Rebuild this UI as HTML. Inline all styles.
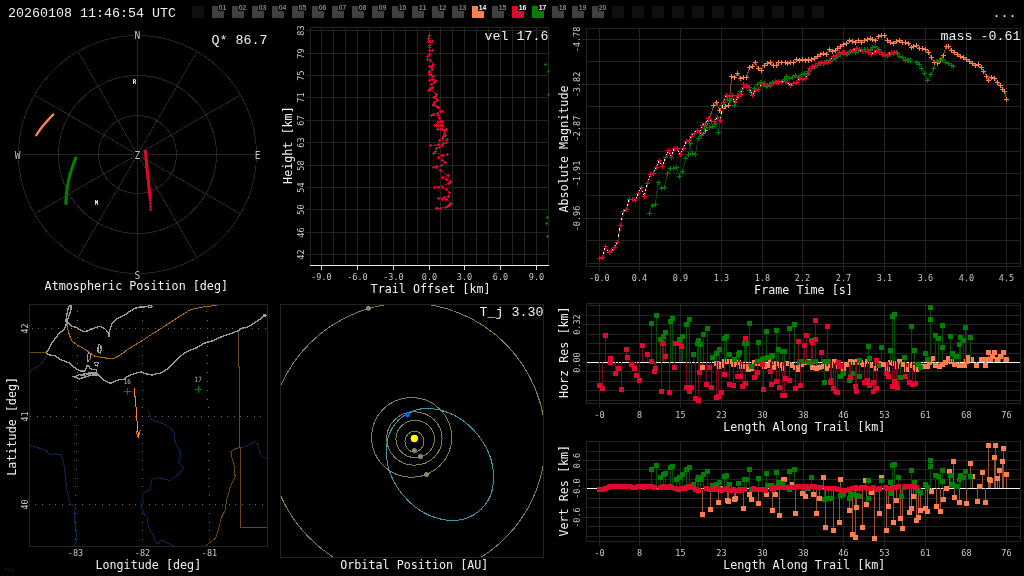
<!DOCTYPE html>
<html><head><meta charset="utf-8"><title>Meteor event 20260108 11:46:54 UTC</title>
<style>
html,body{margin:0;padding:0;background:#000;overflow:hidden}
svg{display:block;will-change:transform}
text{white-space:pre}
</style></head><body>
<svg width="1024" height="576" viewBox="0 0 1024 576">
<rect x="0" y="0" width="1024" height="576" fill="#000"/>
<g id="topbar">
<text x="8.00" y="16.60" font-family="'Liberation Mono', monospace" font-size="13.33" fill="#f0f0f0" text-anchor="start" >20260108 11:46:54 UTC</text>
<rect x="192" y="6" width="12" height="12" fill="#101010"/>
<rect x="212" y="6" width="12" height="12" fill="#404040"/>
<rect x="218" y="3" width="9" height="8" fill="#000"/>
<text x="218.80" y="10.05" font-family="'Liberation Sans', sans-serif" font-size="7.3" fill="#858585" text-anchor="start" font-weight="bold" textLength="7.6" lengthAdjust="spacingAndGlyphs">01</text>
<rect x="232" y="6" width="12" height="12" fill="#404040"/>
<rect x="238" y="3" width="9" height="8" fill="#000"/>
<text x="238.80" y="10.05" font-family="'Liberation Sans', sans-serif" font-size="7.3" fill="#858585" text-anchor="start" font-weight="bold" textLength="7.6" lengthAdjust="spacingAndGlyphs">02</text>
<rect x="252" y="6" width="12" height="12" fill="#404040"/>
<rect x="258" y="3" width="9" height="8" fill="#000"/>
<text x="258.80" y="10.05" font-family="'Liberation Sans', sans-serif" font-size="7.3" fill="#858585" text-anchor="start" font-weight="bold" textLength="7.6" lengthAdjust="spacingAndGlyphs">03</text>
<rect x="272" y="6" width="12" height="12" fill="#404040"/>
<rect x="278" y="3" width="9" height="8" fill="#000"/>
<text x="278.80" y="10.05" font-family="'Liberation Sans', sans-serif" font-size="7.3" fill="#858585" text-anchor="start" font-weight="bold" textLength="7.6" lengthAdjust="spacingAndGlyphs">04</text>
<rect x="292" y="6" width="12" height="12" fill="#404040"/>
<rect x="298" y="3" width="9" height="8" fill="#000"/>
<text x="298.80" y="10.05" font-family="'Liberation Sans', sans-serif" font-size="7.3" fill="#858585" text-anchor="start" font-weight="bold" textLength="7.6" lengthAdjust="spacingAndGlyphs">05</text>
<rect x="312" y="6" width="12" height="12" fill="#404040"/>
<rect x="318" y="3" width="9" height="8" fill="#000"/>
<text x="318.80" y="10.05" font-family="'Liberation Sans', sans-serif" font-size="7.3" fill="#858585" text-anchor="start" font-weight="bold" textLength="7.6" lengthAdjust="spacingAndGlyphs">06</text>
<rect x="332" y="6" width="12" height="12" fill="#404040"/>
<rect x="338" y="3" width="9" height="8" fill="#000"/>
<text x="338.80" y="10.05" font-family="'Liberation Sans', sans-serif" font-size="7.3" fill="#858585" text-anchor="start" font-weight="bold" textLength="7.6" lengthAdjust="spacingAndGlyphs">07</text>
<rect x="352" y="6" width="12" height="12" fill="#404040"/>
<rect x="358" y="3" width="9" height="8" fill="#000"/>
<text x="358.80" y="10.05" font-family="'Liberation Sans', sans-serif" font-size="7.3" fill="#858585" text-anchor="start" font-weight="bold" textLength="7.6" lengthAdjust="spacingAndGlyphs">08</text>
<rect x="372" y="6" width="12" height="12" fill="#404040"/>
<rect x="378" y="3" width="9" height="8" fill="#000"/>
<text x="378.80" y="10.05" font-family="'Liberation Sans', sans-serif" font-size="7.3" fill="#858585" text-anchor="start" font-weight="bold" textLength="7.6" lengthAdjust="spacingAndGlyphs">09</text>
<rect x="392" y="6" width="12" height="12" fill="#404040"/>
<rect x="398" y="3" width="9" height="8" fill="#000"/>
<text x="398.80" y="10.05" font-family="'Liberation Sans', sans-serif" font-size="7.3" fill="#858585" text-anchor="start" font-weight="bold" textLength="7.6" lengthAdjust="spacingAndGlyphs">10</text>
<rect x="412" y="6" width="12" height="12" fill="#404040"/>
<rect x="418" y="3" width="9" height="8" fill="#000"/>
<text x="418.80" y="10.05" font-family="'Liberation Sans', sans-serif" font-size="7.3" fill="#858585" text-anchor="start" font-weight="bold" textLength="7.6" lengthAdjust="spacingAndGlyphs">11</text>
<rect x="432" y="6" width="12" height="12" fill="#404040"/>
<rect x="438" y="3" width="9" height="8" fill="#000"/>
<text x="438.80" y="10.05" font-family="'Liberation Sans', sans-serif" font-size="7.3" fill="#858585" text-anchor="start" font-weight="bold" textLength="7.6" lengthAdjust="spacingAndGlyphs">12</text>
<rect x="452" y="6" width="12" height="12" fill="#404040"/>
<rect x="458" y="3" width="9" height="8" fill="#000"/>
<text x="458.80" y="10.05" font-family="'Liberation Sans', sans-serif" font-size="7.3" fill="#858585" text-anchor="start" font-weight="bold" textLength="7.6" lengthAdjust="spacingAndGlyphs">13</text>
<rect x="472" y="6" width="12" height="12" fill="#ff7f50"/>
<rect x="478" y="3" width="9" height="8" fill="#000"/>
<text x="478.80" y="10.05" font-family="'Liberation Sans', sans-serif" font-size="7.3" fill="#fff" text-anchor="start" font-weight="bold" textLength="7.6" lengthAdjust="spacingAndGlyphs">14</text>
<rect x="492" y="6" width="12" height="12" fill="#404040"/>
<rect x="498" y="3" width="9" height="8" fill="#000"/>
<text x="498.80" y="10.05" font-family="'Liberation Sans', sans-serif" font-size="7.3" fill="#858585" text-anchor="start" font-weight="bold" textLength="7.6" lengthAdjust="spacingAndGlyphs">15</text>
<rect x="512" y="6" width="12" height="12" fill="#e0082c"/>
<rect x="518" y="3" width="9" height="8" fill="#000"/>
<text x="518.80" y="10.05" font-family="'Liberation Sans', sans-serif" font-size="7.3" fill="#fff" text-anchor="start" font-weight="bold" textLength="7.6" lengthAdjust="spacingAndGlyphs">16</text>
<rect x="532" y="6" width="12" height="12" fill="#008000"/>
<rect x="538" y="3" width="9" height="8" fill="#000"/>
<text x="538.80" y="10.05" font-family="'Liberation Sans', sans-serif" font-size="7.3" fill="#fff" text-anchor="start" font-weight="bold" textLength="7.6" lengthAdjust="spacingAndGlyphs">17</text>
<rect x="552" y="6" width="12" height="12" fill="#404040"/>
<rect x="558" y="3" width="9" height="8" fill="#000"/>
<text x="558.80" y="10.05" font-family="'Liberation Sans', sans-serif" font-size="7.3" fill="#858585" text-anchor="start" font-weight="bold" textLength="7.6" lengthAdjust="spacingAndGlyphs">18</text>
<rect x="572" y="6" width="12" height="12" fill="#404040"/>
<rect x="578" y="3" width="9" height="8" fill="#000"/>
<text x="578.80" y="10.05" font-family="'Liberation Sans', sans-serif" font-size="7.3" fill="#858585" text-anchor="start" font-weight="bold" textLength="7.6" lengthAdjust="spacingAndGlyphs">19</text>
<rect x="592" y="6" width="12" height="12" fill="#404040"/>
<rect x="598" y="3" width="9" height="8" fill="#000"/>
<text x="598.80" y="10.05" font-family="'Liberation Sans', sans-serif" font-size="7.3" fill="#858585" text-anchor="start" font-weight="bold" textLength="7.6" lengthAdjust="spacingAndGlyphs">20</text>
<rect x="612" y="6" width="12" height="12" fill="#101010"/>
<rect x="632" y="6" width="12" height="12" fill="#101010"/>
<rect x="652" y="6" width="12" height="12" fill="#101010"/>
<rect x="672" y="6" width="12" height="12" fill="#101010"/>
<rect x="692" y="6" width="12" height="12" fill="#101010"/>
<rect x="712" y="6" width="12" height="12" fill="#101010"/>
<rect x="732" y="6" width="12" height="12" fill="#101010"/>
<rect x="752" y="6" width="12" height="12" fill="#101010"/>
<rect x="772" y="6" width="12" height="12" fill="#101010"/>
<rect x="792" y="6" width="12" height="12" fill="#101010"/>
<rect x="812" y="6" width="12" height="12" fill="#101010"/>
<text x="1016.50" y="16.60" font-family="'Liberation Mono', monospace" font-size="13.33" fill="#f0f0f0" text-anchor="end" >...</text>
</g>
<g id="polar">
<circle cx="137.5" cy="154.5" r="39" fill="none" stroke="#252525" stroke-width="1.0" shape-rendering="crispEdges"/>
<circle cx="137.5" cy="154.5" r="79" fill="none" stroke="#252525" stroke-width="1.0" shape-rendering="crispEdges"/>
<circle cx="137.5" cy="154.5" r="119" fill="none" stroke="#252525" stroke-width="1.0" shape-rendering="crispEdges"/>
<line x1="18.50" y1="154.50" x2="256.50" y2="154.50" stroke="#252525" stroke-width="1.0" shape-rendering="crispEdges"/>
<line x1="34.44" y1="95.00" x2="240.56" y2="214.00" stroke="#252525" stroke-width="1.0" shape-rendering="crispEdges"/>
<line x1="78.00" y1="51.44" x2="197.00" y2="257.56" stroke="#252525" stroke-width="1.0" shape-rendering="crispEdges"/>
<line x1="137.50" y1="35.50" x2="137.50" y2="273.50" stroke="#252525" stroke-width="1.0" shape-rendering="crispEdges"/>
<line x1="197.00" y1="51.44" x2="78.00" y2="257.56" stroke="#252525" stroke-width="1.0" shape-rendering="crispEdges"/>
<line x1="240.56" y1="95.00" x2="34.44" y2="214.00" stroke="#252525" stroke-width="1.0" shape-rendering="crispEdges"/>
<rect x="134.3" y="31.4" width="6.4" height="8" fill="#000"/>
<text x="137.50" y="38.90" font-family="'DejaVu Sans Mono', 'Liberation Mono', monospace" font-size="9.6" fill="#c4c4c4" text-anchor="middle" >N</text>
<rect x="254.5" y="151.5" width="6.4" height="8" fill="#000"/>
<text x="257.70" y="159.00" font-family="'DejaVu Sans Mono', 'Liberation Mono', monospace" font-size="9.6" fill="#c4c4c4" text-anchor="middle" >E</text>
<rect x="134.3" y="271.3" width="6.4" height="8" fill="#000"/>
<text x="137.50" y="278.80" font-family="'DejaVu Sans Mono', 'Liberation Mono', monospace" font-size="9.6" fill="#c4c4c4" text-anchor="middle" >S</text>
<rect x="14.5" y="151.5" width="6.4" height="8" fill="#000"/>
<text x="17.70" y="159.00" font-family="'DejaVu Sans Mono', 'Liberation Mono', monospace" font-size="9.6" fill="#c4c4c4" text-anchor="middle" >W</text>
<rect x="134.3" y="151.5" width="6.4" height="8" fill="#000"/>
<text x="137.50" y="159.00" font-family="'DejaVu Sans Mono', 'Liberation Mono', monospace" font-size="9.6" fill="#c4c4c4" text-anchor="middle" >Z</text>
<text x="267.50" y="44.20" font-family="'Liberation Mono', monospace" font-size="13.33" fill="#f0f0f0" text-anchor="end" >Q* 86.7</text>
<text x="136.30" y="289.80" font-family="'DejaVu Sans Mono', 'Liberation Mono', monospace" font-size="11.73" fill="#f0f0f0" text-anchor="middle" >Atmospheric Position [deg]</text>
<text x="134.50" y="84.20" font-family="'DejaVu Sans Mono', 'Liberation Mono', monospace" font-size="6.6" fill="#fff" text-anchor="middle" font-weight="bold" stroke="#000" stroke-width="1.6" paint-order="stroke" textLength="3.5" lengthAdjust="spacingAndGlyphs">R</text>
<text x="96.40" y="205.20" font-family="'DejaVu Sans Mono', 'Liberation Mono', monospace" font-size="6.6" fill="#fff" text-anchor="middle" font-weight="bold" stroke="#000" stroke-width="1.6" paint-order="stroke" textLength="3.5" lengthAdjust="spacingAndGlyphs">M</text>
<polyline points="53.2,114.6 51.1,116.7 49.2,118.8 47.3,120.9 45.6,122.8 43.9,124.8 42.4,126.6 40.9,128.4 39.6,130.2 38.4,131.9 37.3,133.6 36.3,135.2" fill="none" stroke="#ff7f50" stroke-width="2.4" stroke-linecap="round"/>
<circle cx="75.8" cy="157.8" r="1.55" fill="#008000"/>
<circle cx="75.3" cy="159.0" r="1.55" fill="#008000"/>
<circle cx="74.8" cy="160.2" r="1.55" fill="#008000"/>
<circle cx="74.4" cy="161.4" r="1.55" fill="#008000"/>
<circle cx="73.9" cy="162.6" r="1.55" fill="#008000"/>
<circle cx="73.4" cy="163.8" r="1.55" fill="#008000"/>
<circle cx="73.0" cy="165.1" r="1.55" fill="#008000"/>
<circle cx="72.6" cy="166.3" r="1.55" fill="#008000"/>
<circle cx="72.2" cy="167.5" r="1.55" fill="#008000"/>
<circle cx="71.8" cy="168.6" r="1.55" fill="#008000"/>
<circle cx="71.4" cy="169.8" r="1.55" fill="#008000"/>
<circle cx="71.1" cy="171.0" r="1.55" fill="#008000"/>
<circle cx="70.7" cy="172.2" r="1.55" fill="#008000"/>
<circle cx="70.4" cy="173.4" r="1.55" fill="#008000"/>
<circle cx="70.0" cy="174.6" r="1.55" fill="#008000"/>
<circle cx="69.7" cy="175.8" r="1.55" fill="#008000"/>
<circle cx="69.4" cy="177.0" r="1.55" fill="#008000"/>
<circle cx="69.1" cy="178.1" r="1.55" fill="#008000"/>
<circle cx="68.8" cy="179.3" r="1.55" fill="#008000"/>
<circle cx="68.6" cy="180.5" r="1.55" fill="#008000"/>
<circle cx="68.3" cy="181.7" r="1.55" fill="#008000"/>
<circle cx="68.1" cy="182.8" r="1.55" fill="#008000"/>
<circle cx="67.9" cy="184.0" r="1.55" fill="#008000"/>
<circle cx="67.6" cy="185.2" r="1.55" fill="#008000"/>
<circle cx="67.4" cy="186.3" r="1.55" fill="#008000"/>
<circle cx="67.3" cy="187.5" r="1.55" fill="#008000"/>
<circle cx="67.1" cy="188.6" r="1.55" fill="#008000"/>
<circle cx="66.9" cy="189.8" r="1.55" fill="#008000"/>
<circle cx="66.8" cy="191.0" r="1.55" fill="#008000"/>
<circle cx="66.6" cy="192.1" r="1.55" fill="#008000"/>
<circle cx="66.5" cy="193.3" r="1.55" fill="#008000"/>
<circle cx="66.4" cy="194.4" r="1.55" fill="#008000"/>
<circle cx="66.3" cy="195.5" r="1.55" fill="#008000"/>
<circle cx="66.2" cy="196.7" r="1.55" fill="#008000"/>
<circle cx="66.2" cy="197.8" r="1.55" fill="#008000"/>
<circle cx="66.1" cy="199.0" r="1.55" fill="#008000"/>
<circle cx="66.1" cy="200.1" r="1.55" fill="#008000"/>
<circle cx="66.0" cy="201.2" r="1.55" fill="#008000"/>
<circle cx="66.0" cy="202.4" r="1.55" fill="#008000"/>
<circle cx="66.0" cy="203.5" r="1.55" fill="#008000"/>
<circle cx="145.3" cy="151.0" r="1.55" fill="#e0082c"/>
<circle cx="145.4" cy="152.2" r="1.55" fill="#e0082c"/>
<circle cx="145.5" cy="153.4" r="1.55" fill="#e0082c"/>
<circle cx="145.7" cy="154.6" r="1.55" fill="#e0082c"/>
<circle cx="145.8" cy="155.8" r="1.55" fill="#e0082c"/>
<circle cx="145.9" cy="157.1" r="1.55" fill="#e0082c"/>
<circle cx="146.0" cy="158.3" r="1.55" fill="#e0082c"/>
<circle cx="146.1" cy="159.4" r="1.55" fill="#e0082c"/>
<circle cx="146.3" cy="160.6" r="1.55" fill="#e0082c"/>
<circle cx="146.4" cy="161.8" r="1.55" fill="#e0082c"/>
<circle cx="146.5" cy="163.0" r="1.55" fill="#e0082c"/>
<circle cx="146.6" cy="164.2" r="1.55" fill="#e0082c"/>
<circle cx="146.7" cy="165.4" r="1.55" fill="#e0082c"/>
<circle cx="146.9" cy="166.6" r="1.55" fill="#e0082c"/>
<circle cx="147.0" cy="167.7" r="1.55" fill="#e0082c"/>
<circle cx="147.1" cy="168.9" r="1.55" fill="#e0082c"/>
<circle cx="147.2" cy="170.1" r="1.55" fill="#e0082c"/>
<circle cx="147.3" cy="171.2" r="1.55" fill="#e0082c"/>
<circle cx="147.5" cy="172.4" r="1.55" fill="#e0082c"/>
<circle cx="147.6" cy="173.5" r="1.55" fill="#e0082c"/>
<circle cx="147.7" cy="174.7" r="1.55" fill="#e0082c"/>
<circle cx="147.8" cy="175.8" r="1.55" fill="#e0082c"/>
<circle cx="147.9" cy="177.0" r="1.55" fill="#e0082c"/>
<circle cx="148.0" cy="178.1" r="1.55" fill="#e0082c"/>
<circle cx="148.2" cy="179.2" r="1.55" fill="#e0082c"/>
<circle cx="148.3" cy="180.4" r="1.55" fill="#e0082c"/>
<circle cx="148.4" cy="181.5" r="1.55" fill="#e0082c"/>
<circle cx="148.5" cy="182.6" r="1.55" fill="#e0082c"/>
<circle cx="148.6" cy="183.7" r="1.55" fill="#e0082c"/>
<circle cx="148.7" cy="184.9" r="1.55" fill="#e0082c"/>
<circle cx="148.9" cy="186.0" r="1.55" fill="#e0082c"/>
<circle cx="149.0" cy="187.1" r="1.55" fill="#e0082c"/>
<circle cx="149.1" cy="188.2" r="1.55" fill="#e0082c"/>
<circle cx="149.2" cy="189.3" r="1.55" fill="#e0082c"/>
<circle cx="149.3" cy="190.4" r="1.55" fill="#e0082c"/>
<circle cx="149.4" cy="191.5" r="1.55" fill="#e0082c"/>
<circle cx="149.5" cy="192.6" r="1.55" fill="#e0082c"/>
<circle cx="149.6" cy="193.7" r="1.55" fill="#e0082c"/>
<circle cx="149.8" cy="194.8" r="1.55" fill="#e0082c"/>
<circle cx="149.9" cy="195.8" r="1.55" fill="#e0082c"/>
<circle cx="150.0" cy="196.9" r="1.55" fill="#e0082c"/>
<circle cx="150.1" cy="198.0" r="1.55" fill="#e0082c"/>
<circle cx="150.2" cy="200.5" r="1.4" fill="#e0082c"/>
<circle cx="150.4" cy="203.6" r="1.4" fill="#e0082c"/>
<circle cx="150.5" cy="206.6" r="1.4" fill="#e0082c"/>
<circle cx="150.6" cy="209.6" r="1.4" fill="#e0082c"/>
</g>
<g id="trail">
<rect x="321" y="27" width="1" height="238" fill="#242424"/>
<rect x="333" y="27" width="1" height="238" fill="#242424"/>
<rect x="345" y="27" width="1" height="238" fill="#242424"/>
<rect x="357" y="27" width="1" height="238" fill="#242424"/>
<rect x="369" y="27" width="1" height="238" fill="#242424"/>
<rect x="381" y="27" width="1" height="238" fill="#242424"/>
<rect x="393" y="27" width="1" height="238" fill="#242424"/>
<rect x="405" y="27" width="1" height="238" fill="#242424"/>
<rect x="417" y="27" width="1" height="238" fill="#242424"/>
<rect x="429" y="27" width="1" height="238" fill="#242424"/>
<rect x="440" y="27" width="1" height="238" fill="#242424"/>
<rect x="452" y="27" width="1" height="238" fill="#242424"/>
<rect x="464" y="27" width="1" height="238" fill="#242424"/>
<rect x="476" y="27" width="1" height="238" fill="#242424"/>
<rect x="488" y="27" width="1" height="238" fill="#242424"/>
<rect x="500" y="27" width="1" height="238" fill="#242424"/>
<rect x="512" y="27" width="1" height="238" fill="#242424"/>
<rect x="524" y="27" width="1" height="238" fill="#242424"/>
<rect x="536" y="27" width="1" height="238" fill="#242424"/>
<rect x="306" y="30" width="242" height="1" fill="#242424"/>
<rect x="306" y="53" width="242" height="1" fill="#242424"/>
<rect x="306" y="75" width="242" height="1" fill="#242424"/>
<rect x="306" y="97" width="242" height="1" fill="#242424"/>
<rect x="306" y="120" width="242" height="1" fill="#242424"/>
<rect x="306" y="142" width="242" height="1" fill="#242424"/>
<rect x="306" y="165" width="242" height="1" fill="#242424"/>
<rect x="306" y="187" width="242" height="1" fill="#242424"/>
<rect x="306" y="209" width="242" height="1" fill="#242424"/>
<rect x="306" y="232" width="242" height="1" fill="#242424"/>
<rect x="306" y="254" width="242" height="1" fill="#242424"/>
<rect x="310" y="27" width="1" height="238" fill="#242424"/>
<rect x="548" y="27" width="1" height="239" fill="#242424"/>
<rect x="310" y="27" width="239" height="1" fill="#242424"/>
<rect x="310" y="265" width="239" height="1" fill="#ececec"/>
<rect x="321" y="266" width="1" height="4" fill="#d8d8d8"/>
<text x="321.50" y="279.80" font-family="'DejaVu Sans Mono', 'Liberation Mono', monospace" font-size="8.53" fill="#c8c8c8" text-anchor="middle" >-9.0</text>
<rect x="357" y="266" width="1" height="4" fill="#d8d8d8"/>
<text x="357.50" y="279.80" font-family="'DejaVu Sans Mono', 'Liberation Mono', monospace" font-size="8.53" fill="#c8c8c8" text-anchor="middle" >-6.0</text>
<rect x="393" y="266" width="1" height="4" fill="#d8d8d8"/>
<text x="393.50" y="279.80" font-family="'DejaVu Sans Mono', 'Liberation Mono', monospace" font-size="8.53" fill="#c8c8c8" text-anchor="middle" >-3.0</text>
<rect x="429" y="266" width="1" height="4" fill="#d8d8d8"/>
<text x="429.50" y="279.80" font-family="'DejaVu Sans Mono', 'Liberation Mono', monospace" font-size="8.53" fill="#c8c8c8" text-anchor="middle" >0.0</text>
<rect x="464" y="266" width="1" height="4" fill="#d8d8d8"/>
<text x="464.50" y="279.80" font-family="'DejaVu Sans Mono', 'Liberation Mono', monospace" font-size="8.53" fill="#c8c8c8" text-anchor="middle" >3.0</text>
<rect x="500" y="266" width="1" height="4" fill="#d8d8d8"/>
<text x="500.50" y="279.80" font-family="'DejaVu Sans Mono', 'Liberation Mono', monospace" font-size="8.53" fill="#c8c8c8" text-anchor="middle" >6.0</text>
<rect x="536" y="266" width="1" height="4" fill="#d8d8d8"/>
<text x="536.50" y="279.80" font-family="'DejaVu Sans Mono', 'Liberation Mono', monospace" font-size="8.53" fill="#c8c8c8" text-anchor="middle" >9.0</text>
<text x="304.20" y="30.50" font-family="'DejaVu Sans Mono', 'Liberation Mono', monospace" font-size="8.53" fill="#c8c8c8" text-anchor="middle" transform="rotate(-90 304.20 30.50)" >83</text>
<text x="304.20" y="53.50" font-family="'DejaVu Sans Mono', 'Liberation Mono', monospace" font-size="8.53" fill="#c8c8c8" text-anchor="middle" transform="rotate(-90 304.20 53.50)" >79</text>
<text x="304.20" y="75.50" font-family="'DejaVu Sans Mono', 'Liberation Mono', monospace" font-size="8.53" fill="#c8c8c8" text-anchor="middle" transform="rotate(-90 304.20 75.50)" >75</text>
<text x="304.20" y="97.50" font-family="'DejaVu Sans Mono', 'Liberation Mono', monospace" font-size="8.53" fill="#c8c8c8" text-anchor="middle" transform="rotate(-90 304.20 97.50)" >71</text>
<text x="304.20" y="120.50" font-family="'DejaVu Sans Mono', 'Liberation Mono', monospace" font-size="8.53" fill="#c8c8c8" text-anchor="middle" transform="rotate(-90 304.20 120.50)" >67</text>
<text x="304.20" y="142.50" font-family="'DejaVu Sans Mono', 'Liberation Mono', monospace" font-size="8.53" fill="#c8c8c8" text-anchor="middle" transform="rotate(-90 304.20 142.50)" >63</text>
<text x="304.20" y="165.50" font-family="'DejaVu Sans Mono', 'Liberation Mono', monospace" font-size="8.53" fill="#c8c8c8" text-anchor="middle" transform="rotate(-90 304.20 165.50)" >58</text>
<text x="304.20" y="187.50" font-family="'DejaVu Sans Mono', 'Liberation Mono', monospace" font-size="8.53" fill="#c8c8c8" text-anchor="middle" transform="rotate(-90 304.20 187.50)" >54</text>
<text x="304.20" y="209.50" font-family="'DejaVu Sans Mono', 'Liberation Mono', monospace" font-size="8.53" fill="#c8c8c8" text-anchor="middle" transform="rotate(-90 304.20 209.50)" >50</text>
<text x="304.20" y="232.50" font-family="'DejaVu Sans Mono', 'Liberation Mono', monospace" font-size="8.53" fill="#c8c8c8" text-anchor="middle" transform="rotate(-90 304.20 232.50)" >46</text>
<text x="304.20" y="254.50" font-family="'DejaVu Sans Mono', 'Liberation Mono', monospace" font-size="8.53" fill="#c8c8c8" text-anchor="middle" transform="rotate(-90 304.20 254.50)" >42</text>
<text x="292.20" y="145.10" font-family="'DejaVu Sans Mono', 'Liberation Mono', monospace" font-size="11.73" fill="#f0f0f0" text-anchor="middle" transform="rotate(-90 292.20 145.10)" >Height [km]</text>
<text x="430.60" y="292.60" font-family="'DejaVu Sans Mono', 'Liberation Mono', monospace" font-size="11.73" fill="#f0f0f0" text-anchor="middle" >Trail Offset [km]</text>
<text x="548.60" y="39.80" font-family="'Liberation Mono', monospace" font-size="13.33" fill="#f0f0f0" text-anchor="end" >vel 17.6</text>
<polyline points="429.1,35.8 428.0,38.5 428.2,41.0 430.1,41.1 432.6,41.0 430.0,45.4 429.8,47.4 429.1,50.2 429.7,50.5 432.6,50.2 429.1,54.9 427.7,56.9 427.4,59.2 430.3,60.1 430.8,61.0 433.4,64.5 432.1,65.3 429.1,66.2 431.2,67.5 432.6,69.3 429.1,71.4 429.9,73.0 430.0,74.0 431.8,75.5 433.4,76.6 429.1,80.1 432.5,79.7 435.2,80.1 434.1,82.3 431.7,84.4 432.6,87.9 430.2,88.6 428.8,90.2 430.7,89.4 430.8,88.8 436.0,94.8 435.3,96.4 433.4,97.4 436.1,99.1 437.8,100.0 434.3,102.7 433.9,104.2 434.0,105.3 436.2,106.9 438.6,107.9 442.1,111.3 440.9,111.9 437.8,113.1 433.9,114.1 431.7,115.7 438.6,115.7 439.3,119.0 437.8,122.3 440.7,121.7 443.0,121.5 434.3,125.3 436.5,125.5 438.6,125.8 440.5,125.6 443.0,125.3 437.8,129.3 440.2,129.9 442.1,129.8 444.9,130.1 446.8,129.8 444.7,133.6 445.1,135.3 443.9,136.2 442.1,138.1 439.5,140.6 447.3,139.7 446.5,142.1 443.9,143.7 438.3,144.6 430.8,145.4 442.1,145.8 439.6,147.1 436.0,148.9 435.5,151.3 433.4,153.6 447.3,154.5 442.5,155.7 438.6,157.6 443.0,160.3 445.6,162.3 441.2,165.7 436.4,166.7 433.4,167.1 440.6,170.9 448.2,175.3 443.0,177.5 446.4,179.9 450.8,181.9 450.4,182.6 448.2,184.0 434.3,187.4 438.5,187.1 442.1,187.4 446.5,189.9 449.9,192.7 448.2,196.1 444.3,197.6 438.6,198.2 442.6,199.1 446.5,199.2 451.7,203.1 449.9,204.0 449.1,205.7 447.6,206.2 445.6,207.4 440.4,208.3 437.7,208.2 436.4,208.3" fill="none" stroke="#780a1e" stroke-width="1.0" shape-rendering="crispEdges"/>
<rect x="428" y="35" width="3" height="1" fill="#e0082c"/><rect x="429" y="34" width="1" height="3" fill="#e0082c"/>
<rect x="427" y="38" width="3" height="1" fill="#e0082c"/><rect x="428" y="37" width="1" height="3" fill="#e0082c"/>
<rect x="427" y="41" width="3" height="1" fill="#e0082c"/><rect x="428" y="40" width="1" height="3" fill="#e0082c"/>
<rect x="429" y="41" width="3" height="1" fill="#e0082c"/><rect x="430" y="40" width="1" height="3" fill="#e0082c"/>
<rect x="431" y="41" width="3" height="1" fill="#e0082c"/><rect x="432" y="40" width="1" height="3" fill="#e0082c"/>
<rect x="428" y="45" width="3" height="1" fill="#e0082c"/><rect x="429" y="44" width="1" height="3" fill="#e0082c"/>
<rect x="428" y="47" width="3" height="1" fill="#e0082c"/><rect x="429" y="46" width="1" height="3" fill="#e0082c"/>
<rect x="428" y="50" width="3" height="1" fill="#e0082c"/><rect x="429" y="49" width="1" height="3" fill="#e0082c"/>
<rect x="428" y="50" width="3" height="1" fill="#e0082c"/><rect x="429" y="49" width="1" height="3" fill="#e0082c"/>
<rect x="431" y="50" width="3" height="1" fill="#e0082c"/><rect x="432" y="49" width="1" height="3" fill="#e0082c"/>
<rect x="428" y="54" width="3" height="1" fill="#e0082c"/><rect x="429" y="53" width="1" height="3" fill="#e0082c"/>
<rect x="426" y="56" width="3" height="1" fill="#e0082c"/><rect x="427" y="55" width="1" height="3" fill="#e0082c"/>
<rect x="426" y="59" width="3" height="1" fill="#e0082c"/><rect x="427" y="58" width="1" height="3" fill="#e0082c"/>
<rect x="429" y="60" width="3" height="1" fill="#e0082c"/><rect x="430" y="59" width="1" height="3" fill="#e0082c"/>
<rect x="429" y="60" width="3" height="1" fill="#e0082c"/><rect x="430" y="59" width="1" height="3" fill="#e0082c"/>
<rect x="432" y="64" width="3" height="1" fill="#e0082c"/><rect x="433" y="63" width="1" height="3" fill="#e0082c"/>
<rect x="431" y="65" width="3" height="1" fill="#e0082c"/><rect x="432" y="64" width="1" height="3" fill="#e0082c"/>
<rect x="428" y="66" width="3" height="1" fill="#e0082c"/><rect x="429" y="65" width="1" height="3" fill="#e0082c"/>
<rect x="430" y="67" width="3" height="1" fill="#e0082c"/><rect x="431" y="66" width="1" height="3" fill="#e0082c"/>
<rect x="431" y="69" width="3" height="1" fill="#e0082c"/><rect x="432" y="68" width="1" height="3" fill="#e0082c"/>
<rect x="428" y="71" width="3" height="1" fill="#e0082c"/><rect x="429" y="70" width="1" height="3" fill="#e0082c"/>
<rect x="428" y="72" width="3" height="1" fill="#e0082c"/><rect x="429" y="71" width="1" height="3" fill="#e0082c"/>
<rect x="428" y="74" width="3" height="1" fill="#e0082c"/><rect x="429" y="73" width="1" height="3" fill="#e0082c"/>
<rect x="430" y="75" width="3" height="1" fill="#e0082c"/><rect x="431" y="74" width="1" height="3" fill="#e0082c"/>
<rect x="432" y="76" width="3" height="1" fill="#e0082c"/><rect x="433" y="75" width="1" height="3" fill="#e0082c"/>
<rect x="428" y="80" width="3" height="1" fill="#e0082c"/><rect x="429" y="79" width="1" height="3" fill="#e0082c"/>
<rect x="431" y="79" width="3" height="1" fill="#e0082c"/><rect x="432" y="78" width="1" height="3" fill="#e0082c"/>
<rect x="434" y="80" width="3" height="1" fill="#e0082c"/><rect x="435" y="79" width="1" height="3" fill="#e0082c"/>
<rect x="433" y="82" width="3" height="1" fill="#e0082c"/><rect x="434" y="81" width="1" height="3" fill="#e0082c"/>
<rect x="430" y="84" width="3" height="1" fill="#e0082c"/><rect x="431" y="83" width="1" height="3" fill="#e0082c"/>
<rect x="431" y="87" width="3" height="1" fill="#e0082c"/><rect x="432" y="86" width="1" height="3" fill="#e0082c"/>
<rect x="429" y="88" width="3" height="1" fill="#e0082c"/><rect x="430" y="87" width="1" height="3" fill="#e0082c"/>
<rect x="427" y="90" width="3" height="1" fill="#e0082c"/><rect x="428" y="89" width="1" height="3" fill="#e0082c"/>
<rect x="429" y="89" width="3" height="1" fill="#e0082c"/><rect x="430" y="88" width="1" height="3" fill="#e0082c"/>
<rect x="429" y="88" width="3" height="1" fill="#e0082c"/><rect x="430" y="87" width="1" height="3" fill="#e0082c"/>
<rect x="435" y="94" width="3" height="1" fill="#e0082c"/><rect x="436" y="93" width="1" height="3" fill="#e0082c"/>
<rect x="434" y="96" width="3" height="1" fill="#e0082c"/><rect x="435" y="95" width="1" height="3" fill="#e0082c"/>
<rect x="432" y="97" width="3" height="1" fill="#e0082c"/><rect x="433" y="96" width="1" height="3" fill="#e0082c"/>
<rect x="435" y="99" width="3" height="1" fill="#e0082c"/><rect x="436" y="98" width="1" height="3" fill="#e0082c"/>
<rect x="436" y="100" width="3" height="1" fill="#e0082c"/><rect x="437" y="99" width="1" height="3" fill="#e0082c"/>
<rect x="433" y="102" width="3" height="1" fill="#e0082c"/><rect x="434" y="101" width="1" height="3" fill="#e0082c"/>
<rect x="432" y="104" width="3" height="1" fill="#e0082c"/><rect x="433" y="103" width="1" height="3" fill="#e0082c"/>
<rect x="432" y="105" width="3" height="1" fill="#e0082c"/><rect x="433" y="104" width="1" height="3" fill="#e0082c"/>
<rect x="435" y="106" width="3" height="1" fill="#e0082c"/><rect x="436" y="105" width="1" height="3" fill="#e0082c"/>
<rect x="437" y="107" width="3" height="1" fill="#e0082c"/><rect x="438" y="106" width="1" height="3" fill="#e0082c"/>
<rect x="441" y="111" width="3" height="1" fill="#e0082c"/><rect x="442" y="110" width="1" height="3" fill="#e0082c"/>
<rect x="439" y="111" width="3" height="1" fill="#e0082c"/><rect x="440" y="110" width="1" height="3" fill="#e0082c"/>
<rect x="436" y="113" width="3" height="1" fill="#e0082c"/><rect x="437" y="112" width="1" height="3" fill="#e0082c"/>
<rect x="432" y="114" width="3" height="1" fill="#e0082c"/><rect x="433" y="113" width="1" height="3" fill="#e0082c"/>
<rect x="430" y="115" width="3" height="1" fill="#e0082c"/><rect x="431" y="114" width="1" height="3" fill="#e0082c"/>
<rect x="437" y="115" width="3" height="1" fill="#e0082c"/><rect x="438" y="114" width="1" height="3" fill="#e0082c"/>
<rect x="438" y="118" width="3" height="1" fill="#e0082c"/><rect x="439" y="117" width="1" height="3" fill="#e0082c"/>
<rect x="436" y="122" width="3" height="1" fill="#e0082c"/><rect x="437" y="121" width="1" height="3" fill="#e0082c"/>
<rect x="439" y="121" width="3" height="1" fill="#e0082c"/><rect x="440" y="120" width="1" height="3" fill="#e0082c"/>
<rect x="441" y="121" width="3" height="1" fill="#e0082c"/><rect x="442" y="120" width="1" height="3" fill="#e0082c"/>
<rect x="433" y="125" width="3" height="1" fill="#e0082c"/><rect x="434" y="124" width="1" height="3" fill="#e0082c"/>
<rect x="435" y="125" width="3" height="1" fill="#e0082c"/><rect x="436" y="124" width="1" height="3" fill="#e0082c"/>
<rect x="437" y="125" width="3" height="1" fill="#e0082c"/><rect x="438" y="124" width="1" height="3" fill="#e0082c"/>
<rect x="439" y="125" width="3" height="1" fill="#e0082c"/><rect x="440" y="124" width="1" height="3" fill="#e0082c"/>
<rect x="441" y="125" width="3" height="1" fill="#e0082c"/><rect x="442" y="124" width="1" height="3" fill="#e0082c"/>
<rect x="436" y="129" width="3" height="1" fill="#e0082c"/><rect x="437" y="128" width="1" height="3" fill="#e0082c"/>
<rect x="439" y="129" width="3" height="1" fill="#e0082c"/><rect x="440" y="128" width="1" height="3" fill="#e0082c"/>
<rect x="441" y="129" width="3" height="1" fill="#e0082c"/><rect x="442" y="128" width="1" height="3" fill="#e0082c"/>
<rect x="443" y="130" width="3" height="1" fill="#e0082c"/><rect x="444" y="129" width="1" height="3" fill="#e0082c"/>
<rect x="445" y="129" width="3" height="1" fill="#e0082c"/><rect x="446" y="128" width="1" height="3" fill="#e0082c"/>
<rect x="443" y="133" width="3" height="1" fill="#e0082c"/><rect x="444" y="132" width="1" height="3" fill="#e0082c"/>
<rect x="444" y="135" width="3" height="1" fill="#e0082c"/><rect x="445" y="134" width="1" height="3" fill="#e0082c"/>
<rect x="442" y="136" width="3" height="1" fill="#e0082c"/><rect x="443" y="135" width="1" height="3" fill="#e0082c"/>
<rect x="441" y="138" width="3" height="1" fill="#e0082c"/><rect x="442" y="137" width="1" height="3" fill="#e0082c"/>
<rect x="438" y="140" width="3" height="1" fill="#e0082c"/><rect x="439" y="139" width="1" height="3" fill="#e0082c"/>
<rect x="446" y="139" width="3" height="1" fill="#e0082c"/><rect x="447" y="138" width="1" height="3" fill="#e0082c"/>
<rect x="445" y="142" width="3" height="1" fill="#e0082c"/><rect x="446" y="141" width="1" height="3" fill="#e0082c"/>
<rect x="442" y="143" width="3" height="1" fill="#e0082c"/><rect x="443" y="142" width="1" height="3" fill="#e0082c"/>
<rect x="437" y="144" width="3" height="1" fill="#e0082c"/><rect x="438" y="143" width="1" height="3" fill="#e0082c"/>
<rect x="429" y="145" width="3" height="1" fill="#e0082c"/><rect x="430" y="144" width="1" height="3" fill="#e0082c"/>
<rect x="441" y="145" width="3" height="1" fill="#e0082c"/><rect x="442" y="144" width="1" height="3" fill="#e0082c"/>
<rect x="438" y="147" width="3" height="1" fill="#e0082c"/><rect x="439" y="146" width="1" height="3" fill="#e0082c"/>
<rect x="435" y="148" width="3" height="1" fill="#e0082c"/><rect x="436" y="147" width="1" height="3" fill="#e0082c"/>
<rect x="434" y="151" width="3" height="1" fill="#e0082c"/><rect x="435" y="150" width="1" height="3" fill="#e0082c"/>
<rect x="432" y="153" width="3" height="1" fill="#e0082c"/><rect x="433" y="152" width="1" height="3" fill="#e0082c"/>
<rect x="446" y="154" width="3" height="1" fill="#e0082c"/><rect x="447" y="153" width="1" height="3" fill="#e0082c"/>
<rect x="441" y="155" width="3" height="1" fill="#e0082c"/><rect x="442" y="154" width="1" height="3" fill="#e0082c"/>
<rect x="437" y="157" width="3" height="1" fill="#e0082c"/><rect x="438" y="156" width="1" height="3" fill="#e0082c"/>
<rect x="441" y="160" width="3" height="1" fill="#e0082c"/><rect x="442" y="159" width="1" height="3" fill="#e0082c"/>
<rect x="444" y="162" width="3" height="1" fill="#e0082c"/><rect x="445" y="161" width="1" height="3" fill="#e0082c"/>
<rect x="440" y="165" width="3" height="1" fill="#e0082c"/><rect x="441" y="164" width="1" height="3" fill="#e0082c"/>
<rect x="435" y="166" width="3" height="1" fill="#e0082c"/><rect x="436" y="165" width="1" height="3" fill="#e0082c"/>
<rect x="432" y="167" width="3" height="1" fill="#e0082c"/><rect x="433" y="166" width="1" height="3" fill="#e0082c"/>
<rect x="439" y="170" width="3" height="1" fill="#e0082c"/><rect x="440" y="169" width="1" height="3" fill="#e0082c"/>
<rect x="447" y="175" width="3" height="1" fill="#e0082c"/><rect x="448" y="174" width="1" height="3" fill="#e0082c"/>
<rect x="441" y="177" width="3" height="1" fill="#e0082c"/><rect x="442" y="176" width="1" height="3" fill="#e0082c"/>
<rect x="445" y="179" width="3" height="1" fill="#e0082c"/><rect x="446" y="178" width="1" height="3" fill="#e0082c"/>
<rect x="449" y="181" width="3" height="1" fill="#e0082c"/><rect x="450" y="180" width="1" height="3" fill="#e0082c"/>
<rect x="449" y="182" width="3" height="1" fill="#e0082c"/><rect x="450" y="181" width="1" height="3" fill="#e0082c"/>
<rect x="447" y="183" width="3" height="1" fill="#e0082c"/><rect x="448" y="182" width="1" height="3" fill="#e0082c"/>
<rect x="433" y="187" width="3" height="1" fill="#e0082c"/><rect x="434" y="186" width="1" height="3" fill="#e0082c"/>
<rect x="437" y="187" width="3" height="1" fill="#e0082c"/><rect x="438" y="186" width="1" height="3" fill="#e0082c"/>
<rect x="441" y="187" width="3" height="1" fill="#e0082c"/><rect x="442" y="186" width="1" height="3" fill="#e0082c"/>
<rect x="445" y="189" width="3" height="1" fill="#e0082c"/><rect x="446" y="188" width="1" height="3" fill="#e0082c"/>
<rect x="448" y="192" width="3" height="1" fill="#e0082c"/><rect x="449" y="191" width="1" height="3" fill="#e0082c"/>
<rect x="447" y="196" width="3" height="1" fill="#e0082c"/><rect x="448" y="195" width="1" height="3" fill="#e0082c"/>
<rect x="443" y="197" width="3" height="1" fill="#e0082c"/><rect x="444" y="196" width="1" height="3" fill="#e0082c"/>
<rect x="437" y="198" width="3" height="1" fill="#e0082c"/><rect x="438" y="197" width="1" height="3" fill="#e0082c"/>
<rect x="441" y="199" width="3" height="1" fill="#e0082c"/><rect x="442" y="198" width="1" height="3" fill="#e0082c"/>
<rect x="445" y="199" width="3" height="1" fill="#e0082c"/><rect x="446" y="198" width="1" height="3" fill="#e0082c"/>
<rect x="450" y="203" width="3" height="1" fill="#e0082c"/><rect x="451" y="202" width="1" height="3" fill="#e0082c"/>
<rect x="448" y="204" width="3" height="1" fill="#e0082c"/><rect x="449" y="203" width="1" height="3" fill="#e0082c"/>
<rect x="448" y="205" width="3" height="1" fill="#e0082c"/><rect x="449" y="204" width="1" height="3" fill="#e0082c"/>
<rect x="446" y="206" width="3" height="1" fill="#e0082c"/><rect x="447" y="205" width="1" height="3" fill="#e0082c"/>
<rect x="444" y="207" width="3" height="1" fill="#e0082c"/><rect x="445" y="206" width="1" height="3" fill="#e0082c"/>
<rect x="439" y="208" width="3" height="1" fill="#e0082c"/><rect x="440" y="207" width="1" height="3" fill="#e0082c"/>
<rect x="436" y="208" width="3" height="1" fill="#e0082c"/><rect x="437" y="207" width="1" height="3" fill="#e0082c"/>
<rect x="435" y="208" width="3" height="1" fill="#e0082c"/><rect x="436" y="207" width="1" height="3" fill="#e0082c"/>
<clipPath id="tclip"><rect x="310" y="27" width="239" height="238"/></clipPath>
<g clip-path="url(#tclip)">
<rect x="544" y="64" width="3" height="1" fill="#008000"/><rect x="545" y="63" width="1" height="3" fill="#008000"/>
<rect x="547" y="71" width="3" height="1" fill="#008000"/><rect x="548" y="70" width="1" height="3" fill="#008000"/>
<rect x="547" y="94" width="3" height="1" fill="#008000"/><rect x="548" y="93" width="1" height="3" fill="#008000"/>
<rect x="546" y="217" width="3" height="1" fill="#008000"/><rect x="547" y="216" width="1" height="3" fill="#008000"/>
<rect x="545" y="223" width="3" height="1" fill="#008000"/><rect x="546" y="222" width="1" height="3" fill="#008000"/>
<rect x="546" y="236" width="3" height="1" fill="#008000"/><rect x="547" y="235" width="1" height="3" fill="#008000"/>
</g>
</g>
<g id="mag">
<rect x="599" y="28" width="1" height="243" fill="#242424"/>
<rect x="639" y="28" width="1" height="243" fill="#242424"/>
<rect x="680" y="28" width="1" height="243" fill="#242424"/>
<rect x="721" y="28" width="1" height="243" fill="#242424"/>
<rect x="762" y="28" width="1" height="243" fill="#242424"/>
<rect x="802" y="28" width="1" height="243" fill="#242424"/>
<rect x="843" y="28" width="1" height="243" fill="#242424"/>
<rect x="884" y="28" width="1" height="243" fill="#242424"/>
<rect x="925" y="28" width="1" height="243" fill="#242424"/>
<rect x="966" y="28" width="1" height="243" fill="#242424"/>
<rect x="1006" y="28" width="1" height="243" fill="#242424"/>
<rect x="582" y="39" width="438" height="1" fill="#242424"/>
<rect x="586" y="61" width="434" height="1" fill="#242424"/>
<rect x="582" y="84" width="438" height="1" fill="#242424"/>
<rect x="586" y="106" width="434" height="1" fill="#242424"/>
<rect x="582" y="128" width="438" height="1" fill="#242424"/>
<rect x="586" y="151" width="434" height="1" fill="#242424"/>
<rect x="582" y="173" width="438" height="1" fill="#242424"/>
<rect x="586" y="195" width="434" height="1" fill="#242424"/>
<rect x="582" y="218" width="438" height="1" fill="#242424"/>
<rect x="586" y="240" width="434" height="1" fill="#242424"/>
<rect x="586" y="263" width="434" height="1" fill="#242424"/>
<rect x="586" y="28" width="1" height="239" fill="#242424"/>
<rect x="1020" y="28" width="1" height="239" fill="#242424"/>
<rect x="586" y="28" width="435" height="1" fill="#242424"/>
<rect x="586" y="266" width="435" height="1" fill="#242424"/>
<text x="599.50" y="280.80" font-family="'DejaVu Sans Mono', 'Liberation Mono', monospace" font-size="8.53" fill="#c8c8c8" text-anchor="middle" >-0.0</text>
<text x="639.50" y="280.80" font-family="'DejaVu Sans Mono', 'Liberation Mono', monospace" font-size="8.53" fill="#c8c8c8" text-anchor="middle" >0.4</text>
<text x="680.50" y="280.80" font-family="'DejaVu Sans Mono', 'Liberation Mono', monospace" font-size="8.53" fill="#c8c8c8" text-anchor="middle" >0.9</text>
<text x="721.50" y="280.80" font-family="'DejaVu Sans Mono', 'Liberation Mono', monospace" font-size="8.53" fill="#c8c8c8" text-anchor="middle" >1.3</text>
<text x="762.50" y="280.80" font-family="'DejaVu Sans Mono', 'Liberation Mono', monospace" font-size="8.53" fill="#c8c8c8" text-anchor="middle" >1.8</text>
<text x="802.50" y="280.80" font-family="'DejaVu Sans Mono', 'Liberation Mono', monospace" font-size="8.53" fill="#c8c8c8" text-anchor="middle" >2.2</text>
<text x="843.50" y="280.80" font-family="'DejaVu Sans Mono', 'Liberation Mono', monospace" font-size="8.53" fill="#c8c8c8" text-anchor="middle" >2.7</text>
<text x="884.50" y="280.80" font-family="'DejaVu Sans Mono', 'Liberation Mono', monospace" font-size="8.53" fill="#c8c8c8" text-anchor="middle" >3.1</text>
<text x="925.50" y="280.80" font-family="'DejaVu Sans Mono', 'Liberation Mono', monospace" font-size="8.53" fill="#c8c8c8" text-anchor="middle" >3.6</text>
<text x="966.50" y="280.80" font-family="'DejaVu Sans Mono', 'Liberation Mono', monospace" font-size="8.53" fill="#c8c8c8" text-anchor="middle" >4.0</text>
<text x="1006.50" y="280.80" font-family="'DejaVu Sans Mono', 'Liberation Mono', monospace" font-size="8.53" fill="#c8c8c8" text-anchor="middle" >4.5</text>
<text x="580.40" y="39.50" font-family="'DejaVu Sans Mono', 'Liberation Mono', monospace" font-size="8.53" fill="#c8c8c8" text-anchor="middle" transform="rotate(-90 580.40 39.50)" >-4.78</text>
<text x="580.40" y="84.50" font-family="'DejaVu Sans Mono', 'Liberation Mono', monospace" font-size="8.53" fill="#c8c8c8" text-anchor="middle" transform="rotate(-90 580.40 84.50)" >-3.82</text>
<text x="580.40" y="128.50" font-family="'DejaVu Sans Mono', 'Liberation Mono', monospace" font-size="8.53" fill="#c8c8c8" text-anchor="middle" transform="rotate(-90 580.40 128.50)" >-2.87</text>
<text x="580.40" y="173.50" font-family="'DejaVu Sans Mono', 'Liberation Mono', monospace" font-size="8.53" fill="#c8c8c8" text-anchor="middle" transform="rotate(-90 580.40 173.50)" >-1.91</text>
<text x="580.40" y="218.50" font-family="'DejaVu Sans Mono', 'Liberation Mono', monospace" font-size="8.53" fill="#c8c8c8" text-anchor="middle" transform="rotate(-90 580.40 218.50)" >-0.96</text>
<text x="568.40" y="149.00" font-family="'DejaVu Sans Mono', 'Liberation Mono', monospace" font-size="11.73" fill="#f0f0f0" text-anchor="middle" transform="rotate(-90 568.40 149.00)" >Absolute Magnitude</text>
<text x="803.50" y="293.60" font-family="'DejaVu Sans Mono', 'Liberation Mono', monospace" font-size="11.73" fill="#f0f0f0" text-anchor="middle" >Frame Time [s]</text>
<text x="1020.50" y="39.80" font-family="'Liberation Mono', monospace" font-size="13.33" fill="#f0f0f0" text-anchor="end" >mass -0.61</text>
<polyline points="702.2,133.3 705.1,130.9 713.8,105.4 716.7,102.4 719.7,110.2 722.8,109.0 725.7,106.6 728.9,105.4 731.8,76.2 734.7,77.4 737.6,73.8 740.6,78.6 743.5,77.4 746.4,77.4 749.6,67.7 752.5,66.5 755.4,62.3 758.3,68.9 761.2,70.8 764.1,65.2 767.3,63.5 770.2,62.8 773.1,65.2 776.0,66.0 779.0,62.8 781.9,62.1 785.0,62.8 788.0,63.5 790.9,62.8 793.8,62.1 797.0,59.7 799.9,60.4 802.8,59.9 805.7,60.4 808.6,59.7 808.8,60.2 811.7,59.0 814.6,58.5 817.5,56.6 820.4,54.7 823.3,53.7 826.3,54.7 829.2,49.8 832.1,51.3 835.0,50.0 837.9,48.1 840.8,46.4 843.8,44.9 846.7,43.2 849.6,40.8 852.5,41.5 855.4,42.0 858.3,40.1 861.3,42.0 864.2,40.1 867.1,39.1 870.0,38.9 872.9,39.6 875.8,40.8 878.8,36.7 881.7,35.9 884.6,35.5 887.5,40.1 890.4,42.5 893.3,43.2 896.3,41.5 899.2,40.8 902.1,42.0 905.2,42.5 908.1,43.2 911.0,47.4 914.0,46.9 916.9,45.7 919.8,48.8 922.7,48.6 925.6,49.3 928.6,52.2 931.5,57.8 934.4,62.7 937.3,63.9 940.2,60.2 943.1,55.4 946.1,46.9 949.0,46.9 951.9,50.5 954.8,52.2 957.7,54.7 960.6,56.6 963.6,57.1 966.5,59.5 969.4,61.5 972.3,63.4 975.2,65.1 978.1,64.4 981.1,67.5 984.0,71.7 986.9,76.0 988.3,80.4 991.3,78.0 994.2,78.5 997.1,82.1 1000.0,85.8 1002.9,89.4 1004.4,91.1 1006.6,99.1" fill="none" stroke="#8a4528" stroke-width="1.0" shape-rendering="crispEdges"/>
<rect x="700" y="133" width="5" height="1" fill="#ff7f50"/><rect x="702" y="131" width="1" height="5" fill="#ff7f50"/>
<rect x="703" y="130" width="5" height="1" fill="#ff7f50"/><rect x="705" y="128" width="1" height="5" fill="#ff7f50"/>
<rect x="711" y="105" width="5" height="1" fill="#ff7f50"/><rect x="713" y="103" width="1" height="5" fill="#ff7f50"/>
<rect x="714" y="102" width="5" height="1" fill="#ff7f50"/><rect x="716" y="100" width="1" height="5" fill="#ff7f50"/>
<rect x="717" y="110" width="5" height="1" fill="#ff7f50"/><rect x="719" y="108" width="1" height="5" fill="#ff7f50"/>
<rect x="720" y="108" width="5" height="1" fill="#ff7f50"/><rect x="722" y="106" width="1" height="5" fill="#ff7f50"/>
<rect x="723" y="106" width="5" height="1" fill="#ff7f50"/><rect x="725" y="104" width="1" height="5" fill="#ff7f50"/>
<rect x="726" y="105" width="5" height="1" fill="#ff7f50"/><rect x="728" y="103" width="1" height="5" fill="#ff7f50"/>
<rect x="729" y="76" width="5" height="1" fill="#ff7f50"/><rect x="731" y="74" width="1" height="5" fill="#ff7f50"/>
<rect x="732" y="77" width="5" height="1" fill="#ff7f50"/><rect x="734" y="75" width="1" height="5" fill="#ff7f50"/>
<rect x="735" y="73" width="5" height="1" fill="#ff7f50"/><rect x="737" y="71" width="1" height="5" fill="#ff7f50"/>
<rect x="738" y="78" width="5" height="1" fill="#ff7f50"/><rect x="740" y="76" width="1" height="5" fill="#ff7f50"/>
<rect x="741" y="77" width="5" height="1" fill="#ff7f50"/><rect x="743" y="75" width="1" height="5" fill="#ff7f50"/>
<rect x="744" y="77" width="5" height="1" fill="#ff7f50"/><rect x="746" y="75" width="1" height="5" fill="#ff7f50"/>
<rect x="747" y="67" width="5" height="1" fill="#ff7f50"/><rect x="749" y="65" width="1" height="5" fill="#ff7f50"/>
<rect x="750" y="66" width="5" height="1" fill="#ff7f50"/><rect x="752" y="64" width="1" height="5" fill="#ff7f50"/>
<rect x="753" y="62" width="5" height="1" fill="#ff7f50"/><rect x="755" y="60" width="1" height="5" fill="#ff7f50"/>
<rect x="756" y="68" width="5" height="1" fill="#ff7f50"/><rect x="758" y="66" width="1" height="5" fill="#ff7f50"/>
<rect x="759" y="70" width="5" height="1" fill="#ff7f50"/><rect x="761" y="68" width="1" height="5" fill="#ff7f50"/>
<rect x="762" y="65" width="5" height="1" fill="#ff7f50"/><rect x="764" y="63" width="1" height="5" fill="#ff7f50"/>
<rect x="765" y="63" width="5" height="1" fill="#ff7f50"/><rect x="767" y="61" width="1" height="5" fill="#ff7f50"/>
<rect x="768" y="62" width="5" height="1" fill="#ff7f50"/><rect x="770" y="60" width="1" height="5" fill="#ff7f50"/>
<rect x="771" y="65" width="5" height="1" fill="#ff7f50"/><rect x="773" y="63" width="1" height="5" fill="#ff7f50"/>
<rect x="774" y="65" width="5" height="1" fill="#ff7f50"/><rect x="776" y="63" width="1" height="5" fill="#ff7f50"/>
<rect x="776" y="62" width="5" height="1" fill="#ff7f50"/><rect x="778" y="60" width="1" height="5" fill="#ff7f50"/>
<rect x="779" y="62" width="5" height="1" fill="#ff7f50"/><rect x="781" y="60" width="1" height="5" fill="#ff7f50"/>
<rect x="783" y="62" width="5" height="1" fill="#ff7f50"/><rect x="785" y="60" width="1" height="5" fill="#ff7f50"/>
<rect x="785" y="63" width="5" height="1" fill="#ff7f50"/><rect x="787" y="61" width="1" height="5" fill="#ff7f50"/>
<rect x="788" y="62" width="5" height="1" fill="#ff7f50"/><rect x="790" y="60" width="1" height="5" fill="#ff7f50"/>
<rect x="791" y="62" width="5" height="1" fill="#ff7f50"/><rect x="793" y="60" width="1" height="5" fill="#ff7f50"/>
<rect x="794" y="59" width="5" height="1" fill="#ff7f50"/><rect x="796" y="57" width="1" height="5" fill="#ff7f50"/>
<rect x="797" y="60" width="5" height="1" fill="#ff7f50"/><rect x="799" y="58" width="1" height="5" fill="#ff7f50"/>
<rect x="800" y="59" width="5" height="1" fill="#ff7f50"/><rect x="802" y="57" width="1" height="5" fill="#ff7f50"/>
<rect x="803" y="60" width="5" height="1" fill="#ff7f50"/><rect x="805" y="58" width="1" height="5" fill="#ff7f50"/>
<rect x="806" y="59" width="5" height="1" fill="#ff7f50"/><rect x="808" y="57" width="1" height="5" fill="#ff7f50"/>
<rect x="806" y="60" width="5" height="1" fill="#ff7f50"/><rect x="808" y="58" width="1" height="5" fill="#ff7f50"/>
<rect x="809" y="59" width="5" height="1" fill="#ff7f50"/><rect x="811" y="57" width="1" height="5" fill="#ff7f50"/>
<rect x="812" y="58" width="5" height="1" fill="#ff7f50"/><rect x="814" y="56" width="1" height="5" fill="#ff7f50"/>
<rect x="815" y="56" width="5" height="1" fill="#ff7f50"/><rect x="817" y="54" width="1" height="5" fill="#ff7f50"/>
<rect x="818" y="54" width="5" height="1" fill="#ff7f50"/><rect x="820" y="52" width="1" height="5" fill="#ff7f50"/>
<rect x="821" y="53" width="5" height="1" fill="#ff7f50"/><rect x="823" y="51" width="1" height="5" fill="#ff7f50"/>
<rect x="824" y="54" width="5" height="1" fill="#ff7f50"/><rect x="826" y="52" width="1" height="5" fill="#ff7f50"/>
<rect x="827" y="49" width="5" height="1" fill="#ff7f50"/><rect x="829" y="47" width="1" height="5" fill="#ff7f50"/>
<rect x="830" y="51" width="5" height="1" fill="#ff7f50"/><rect x="832" y="49" width="1" height="5" fill="#ff7f50"/>
<rect x="833" y="50" width="5" height="1" fill="#ff7f50"/><rect x="835" y="48" width="1" height="5" fill="#ff7f50"/>
<rect x="835" y="48" width="5" height="1" fill="#ff7f50"/><rect x="837" y="46" width="1" height="5" fill="#ff7f50"/>
<rect x="838" y="46" width="5" height="1" fill="#ff7f50"/><rect x="840" y="44" width="1" height="5" fill="#ff7f50"/>
<rect x="841" y="44" width="5" height="1" fill="#ff7f50"/><rect x="843" y="42" width="1" height="5" fill="#ff7f50"/>
<rect x="844" y="43" width="5" height="1" fill="#ff7f50"/><rect x="846" y="41" width="1" height="5" fill="#ff7f50"/>
<rect x="847" y="40" width="5" height="1" fill="#ff7f50"/><rect x="849" y="38" width="1" height="5" fill="#ff7f50"/>
<rect x="850" y="41" width="5" height="1" fill="#ff7f50"/><rect x="852" y="39" width="1" height="5" fill="#ff7f50"/>
<rect x="853" y="42" width="5" height="1" fill="#ff7f50"/><rect x="855" y="40" width="1" height="5" fill="#ff7f50"/>
<rect x="856" y="40" width="5" height="1" fill="#ff7f50"/><rect x="858" y="38" width="1" height="5" fill="#ff7f50"/>
<rect x="859" y="42" width="5" height="1" fill="#ff7f50"/><rect x="861" y="40" width="1" height="5" fill="#ff7f50"/>
<rect x="862" y="40" width="5" height="1" fill="#ff7f50"/><rect x="864" y="38" width="1" height="5" fill="#ff7f50"/>
<rect x="865" y="39" width="5" height="1" fill="#ff7f50"/><rect x="867" y="37" width="1" height="5" fill="#ff7f50"/>
<rect x="868" y="38" width="5" height="1" fill="#ff7f50"/><rect x="870" y="36" width="1" height="5" fill="#ff7f50"/>
<rect x="870" y="39" width="5" height="1" fill="#ff7f50"/><rect x="872" y="37" width="1" height="5" fill="#ff7f50"/>
<rect x="873" y="40" width="5" height="1" fill="#ff7f50"/><rect x="875" y="38" width="1" height="5" fill="#ff7f50"/>
<rect x="876" y="36" width="5" height="1" fill="#ff7f50"/><rect x="878" y="34" width="1" height="5" fill="#ff7f50"/>
<rect x="879" y="35" width="5" height="1" fill="#ff7f50"/><rect x="881" y="33" width="1" height="5" fill="#ff7f50"/>
<rect x="882" y="35" width="5" height="1" fill="#ff7f50"/><rect x="884" y="33" width="1" height="5" fill="#ff7f50"/>
<rect x="885" y="40" width="5" height="1" fill="#ff7f50"/><rect x="887" y="38" width="1" height="5" fill="#ff7f50"/>
<rect x="888" y="42" width="5" height="1" fill="#ff7f50"/><rect x="890" y="40" width="1" height="5" fill="#ff7f50"/>
<rect x="891" y="43" width="5" height="1" fill="#ff7f50"/><rect x="893" y="41" width="1" height="5" fill="#ff7f50"/>
<rect x="894" y="41" width="5" height="1" fill="#ff7f50"/><rect x="896" y="39" width="1" height="5" fill="#ff7f50"/>
<rect x="897" y="40" width="5" height="1" fill="#ff7f50"/><rect x="899" y="38" width="1" height="5" fill="#ff7f50"/>
<rect x="900" y="42" width="5" height="1" fill="#ff7f50"/><rect x="902" y="40" width="1" height="5" fill="#ff7f50"/>
<rect x="903" y="42" width="5" height="1" fill="#ff7f50"/><rect x="905" y="40" width="1" height="5" fill="#ff7f50"/>
<rect x="906" y="43" width="5" height="1" fill="#ff7f50"/><rect x="908" y="41" width="1" height="5" fill="#ff7f50"/>
<rect x="909" y="47" width="5" height="1" fill="#ff7f50"/><rect x="911" y="45" width="1" height="5" fill="#ff7f50"/>
<rect x="911" y="46" width="5" height="1" fill="#ff7f50"/><rect x="913" y="44" width="1" height="5" fill="#ff7f50"/>
<rect x="914" y="45" width="5" height="1" fill="#ff7f50"/><rect x="916" y="43" width="1" height="5" fill="#ff7f50"/>
<rect x="917" y="48" width="5" height="1" fill="#ff7f50"/><rect x="919" y="46" width="1" height="5" fill="#ff7f50"/>
<rect x="920" y="48" width="5" height="1" fill="#ff7f50"/><rect x="922" y="46" width="1" height="5" fill="#ff7f50"/>
<rect x="923" y="49" width="5" height="1" fill="#ff7f50"/><rect x="925" y="47" width="1" height="5" fill="#ff7f50"/>
<rect x="926" y="52" width="5" height="1" fill="#ff7f50"/><rect x="928" y="50" width="1" height="5" fill="#ff7f50"/>
<rect x="929" y="57" width="5" height="1" fill="#ff7f50"/><rect x="931" y="55" width="1" height="5" fill="#ff7f50"/>
<rect x="932" y="62" width="5" height="1" fill="#ff7f50"/><rect x="934" y="60" width="1" height="5" fill="#ff7f50"/>
<rect x="935" y="63" width="5" height="1" fill="#ff7f50"/><rect x="937" y="61" width="1" height="5" fill="#ff7f50"/>
<rect x="938" y="60" width="5" height="1" fill="#ff7f50"/><rect x="940" y="58" width="1" height="5" fill="#ff7f50"/>
<rect x="941" y="55" width="5" height="1" fill="#ff7f50"/><rect x="943" y="53" width="1" height="5" fill="#ff7f50"/>
<rect x="944" y="46" width="5" height="1" fill="#ff7f50"/><rect x="946" y="44" width="1" height="5" fill="#ff7f50"/>
<rect x="946" y="46" width="5" height="1" fill="#ff7f50"/><rect x="948" y="44" width="1" height="5" fill="#ff7f50"/>
<rect x="949" y="50" width="5" height="1" fill="#ff7f50"/><rect x="951" y="48" width="1" height="5" fill="#ff7f50"/>
<rect x="952" y="52" width="5" height="1" fill="#ff7f50"/><rect x="954" y="50" width="1" height="5" fill="#ff7f50"/>
<rect x="955" y="54" width="5" height="1" fill="#ff7f50"/><rect x="957" y="52" width="1" height="5" fill="#ff7f50"/>
<rect x="958" y="56" width="5" height="1" fill="#ff7f50"/><rect x="960" y="54" width="1" height="5" fill="#ff7f50"/>
<rect x="961" y="57" width="5" height="1" fill="#ff7f50"/><rect x="963" y="55" width="1" height="5" fill="#ff7f50"/>
<rect x="964" y="59" width="5" height="1" fill="#ff7f50"/><rect x="966" y="57" width="1" height="5" fill="#ff7f50"/>
<rect x="967" y="61" width="5" height="1" fill="#ff7f50"/><rect x="969" y="59" width="1" height="5" fill="#ff7f50"/>
<rect x="970" y="63" width="5" height="1" fill="#ff7f50"/><rect x="972" y="61" width="1" height="5" fill="#ff7f50"/>
<rect x="973" y="65" width="5" height="1" fill="#ff7f50"/><rect x="975" y="63" width="1" height="5" fill="#ff7f50"/>
<rect x="976" y="64" width="5" height="1" fill="#ff7f50"/><rect x="978" y="62" width="1" height="5" fill="#ff7f50"/>
<rect x="979" y="67" width="5" height="1" fill="#ff7f50"/><rect x="981" y="65" width="1" height="5" fill="#ff7f50"/>
<rect x="981" y="71" width="5" height="1" fill="#ff7f50"/><rect x="983" y="69" width="1" height="5" fill="#ff7f50"/>
<rect x="984" y="76" width="5" height="1" fill="#ff7f50"/><rect x="986" y="74" width="1" height="5" fill="#ff7f50"/>
<rect x="986" y="80" width="5" height="1" fill="#ff7f50"/><rect x="988" y="78" width="1" height="5" fill="#ff7f50"/>
<rect x="989" y="77" width="5" height="1" fill="#ff7f50"/><rect x="991" y="75" width="1" height="5" fill="#ff7f50"/>
<rect x="992" y="78" width="5" height="1" fill="#ff7f50"/><rect x="994" y="76" width="1" height="5" fill="#ff7f50"/>
<rect x="995" y="82" width="5" height="1" fill="#ff7f50"/><rect x="997" y="80" width="1" height="5" fill="#ff7f50"/>
<rect x="998" y="85" width="5" height="1" fill="#ff7f50"/><rect x="1000" y="83" width="1" height="5" fill="#ff7f50"/>
<rect x="1000" y="89" width="5" height="1" fill="#ff7f50"/><rect x="1002" y="87" width="1" height="5" fill="#ff7f50"/>
<rect x="1002" y="91" width="5" height="1" fill="#ff7f50"/><rect x="1004" y="89" width="1" height="5" fill="#ff7f50"/>
<rect x="1004" y="99" width="5" height="1" fill="#ff7f50"/><rect x="1006" y="97" width="1" height="5" fill="#ff7f50"/>
<polyline points="649.2,213.4 652.1,205.4 655.3,204.1 658.2,182.3 661.4,188.3 664.3,187.9 667.4,173.8 670.3,168.4 673.5,168.2 676.4,167.2 679.6,176.2 682.5,171.3 685.7,158.4 688.6,154.3 690.0,143.0 692.4,154.0 695.3,154.5 698.3,138.2 701.2,135.7 704.1,128.4 707.0,123.6 709.9,127.2 712.8,126.0 715.8,123.6 718.7,132.1 721.6,105.4 724.5,102.9 727.4,99.3 730.4,100.5 733.3,98.1 734.5,105.8 737.4,95.6 740.3,92.0 743.2,87.1 746.1,85.9 749.1,90.8 752.0,92.7 754.9,88.3 757.8,84.7 760.7,83.0 763.7,84.7 766.6,86.4 769.5,84.7 772.4,82.3 775.3,81.0 778.2,81.0 781.2,82.3 784.1,79.8 787.0,76.9 789.9,78.6 792.8,77.4 795.7,75.7 798.7,77.4 801.6,75.0 804.5,73.3 807.4,75.0 808.8,71.2 811.7,68.3 814.6,67.5 817.5,65.8 820.4,63.9 823.3,63.4 826.3,61.9 829.2,61.0 832.1,59.5 835.0,58.5 837.9,56.1 840.8,54.7 843.8,53.7 846.7,54.7 849.6,53.0 852.5,51.7 855.4,52.2 858.3,50.5 861.3,49.3 864.2,49.8 867.1,49.3 870.0,50.5 872.9,47.4 875.8,46.4 878.8,49.3 881.7,52.2 884.6,54.7 887.5,55.4 890.4,54.2 893.3,53.7 896.3,53.0 899.2,56.6 902.1,57.8 905.0,59.5 907.9,60.2 910.8,61.0 905.2,60.2 908.1,60.2 916.2,62.7 919.1,64.4 922.0,68.8 924.9,73.6 927.8,80.4 930.7,74.8 933.7,68.3 936.6,61.5 939.5,61.0 942.4,59.5 945.3,62.7 948.2,63.9 951.2,65.8 953.1,66.3" fill="none" stroke="#004a00" stroke-width="1.0" shape-rendering="crispEdges"/>
<rect x="647" y="213" width="5" height="1" fill="#008000"/><rect x="649" y="211" width="1" height="5" fill="#008000"/>
<rect x="650" y="205" width="5" height="1" fill="#008000"/><rect x="652" y="203" width="1" height="5" fill="#008000"/>
<rect x="653" y="204" width="5" height="1" fill="#008000"/><rect x="655" y="202" width="1" height="5" fill="#008000"/>
<rect x="656" y="182" width="5" height="1" fill="#008000"/><rect x="658" y="180" width="1" height="5" fill="#008000"/>
<rect x="659" y="188" width="5" height="1" fill="#008000"/><rect x="661" y="186" width="1" height="5" fill="#008000"/>
<rect x="662" y="187" width="5" height="1" fill="#008000"/><rect x="664" y="185" width="1" height="5" fill="#008000"/>
<rect x="665" y="173" width="5" height="1" fill="#008000"/><rect x="667" y="171" width="1" height="5" fill="#008000"/>
<rect x="668" y="168" width="5" height="1" fill="#008000"/><rect x="670" y="166" width="1" height="5" fill="#008000"/>
<rect x="671" y="168" width="5" height="1" fill="#008000"/><rect x="673" y="166" width="1" height="5" fill="#008000"/>
<rect x="674" y="167" width="5" height="1" fill="#008000"/><rect x="676" y="165" width="1" height="5" fill="#008000"/>
<rect x="677" y="176" width="5" height="1" fill="#008000"/><rect x="679" y="174" width="1" height="5" fill="#008000"/>
<rect x="680" y="171" width="5" height="1" fill="#008000"/><rect x="682" y="169" width="1" height="5" fill="#008000"/>
<rect x="683" y="158" width="5" height="1" fill="#008000"/><rect x="685" y="156" width="1" height="5" fill="#008000"/>
<rect x="686" y="154" width="5" height="1" fill="#008000"/><rect x="688" y="152" width="1" height="5" fill="#008000"/>
<rect x="688" y="143" width="5" height="1" fill="#008000"/><rect x="690" y="141" width="1" height="5" fill="#008000"/>
<rect x="690" y="153" width="5" height="1" fill="#008000"/><rect x="692" y="151" width="1" height="5" fill="#008000"/>
<rect x="693" y="154" width="5" height="1" fill="#008000"/><rect x="695" y="152" width="1" height="5" fill="#008000"/>
<rect x="696" y="138" width="5" height="1" fill="#008000"/><rect x="698" y="136" width="1" height="5" fill="#008000"/>
<rect x="699" y="135" width="5" height="1" fill="#008000"/><rect x="701" y="133" width="1" height="5" fill="#008000"/>
<rect x="702" y="128" width="5" height="1" fill="#008000"/><rect x="704" y="126" width="1" height="5" fill="#008000"/>
<rect x="705" y="123" width="5" height="1" fill="#008000"/><rect x="707" y="121" width="1" height="5" fill="#008000"/>
<rect x="707" y="127" width="5" height="1" fill="#008000"/><rect x="709" y="125" width="1" height="5" fill="#008000"/>
<rect x="710" y="126" width="5" height="1" fill="#008000"/><rect x="712" y="124" width="1" height="5" fill="#008000"/>
<rect x="713" y="123" width="5" height="1" fill="#008000"/><rect x="715" y="121" width="1" height="5" fill="#008000"/>
<rect x="716" y="132" width="5" height="1" fill="#008000"/><rect x="718" y="130" width="1" height="5" fill="#008000"/>
<rect x="719" y="105" width="5" height="1" fill="#008000"/><rect x="721" y="103" width="1" height="5" fill="#008000"/>
<rect x="722" y="102" width="5" height="1" fill="#008000"/><rect x="724" y="100" width="1" height="5" fill="#008000"/>
<rect x="725" y="99" width="5" height="1" fill="#008000"/><rect x="727" y="97" width="1" height="5" fill="#008000"/>
<rect x="728" y="100" width="5" height="1" fill="#008000"/><rect x="730" y="98" width="1" height="5" fill="#008000"/>
<rect x="731" y="98" width="5" height="1" fill="#008000"/><rect x="733" y="96" width="1" height="5" fill="#008000"/>
<rect x="732" y="105" width="5" height="1" fill="#008000"/><rect x="734" y="103" width="1" height="5" fill="#008000"/>
<rect x="735" y="95" width="5" height="1" fill="#008000"/><rect x="737" y="93" width="1" height="5" fill="#008000"/>
<rect x="738" y="91" width="5" height="1" fill="#008000"/><rect x="740" y="89" width="1" height="5" fill="#008000"/>
<rect x="741" y="87" width="5" height="1" fill="#008000"/><rect x="743" y="85" width="1" height="5" fill="#008000"/>
<rect x="744" y="85" width="5" height="1" fill="#008000"/><rect x="746" y="83" width="1" height="5" fill="#008000"/>
<rect x="747" y="90" width="5" height="1" fill="#008000"/><rect x="749" y="88" width="1" height="5" fill="#008000"/>
<rect x="749" y="92" width="5" height="1" fill="#008000"/><rect x="751" y="90" width="1" height="5" fill="#008000"/>
<rect x="752" y="88" width="5" height="1" fill="#008000"/><rect x="754" y="86" width="1" height="5" fill="#008000"/>
<rect x="755" y="84" width="5" height="1" fill="#008000"/><rect x="757" y="82" width="1" height="5" fill="#008000"/>
<rect x="758" y="82" width="5" height="1" fill="#008000"/><rect x="760" y="80" width="1" height="5" fill="#008000"/>
<rect x="761" y="84" width="5" height="1" fill="#008000"/><rect x="763" y="82" width="1" height="5" fill="#008000"/>
<rect x="764" y="86" width="5" height="1" fill="#008000"/><rect x="766" y="84" width="1" height="5" fill="#008000"/>
<rect x="767" y="84" width="5" height="1" fill="#008000"/><rect x="769" y="82" width="1" height="5" fill="#008000"/>
<rect x="770" y="82" width="5" height="1" fill="#008000"/><rect x="772" y="80" width="1" height="5" fill="#008000"/>
<rect x="773" y="81" width="5" height="1" fill="#008000"/><rect x="775" y="79" width="1" height="5" fill="#008000"/>
<rect x="776" y="81" width="5" height="1" fill="#008000"/><rect x="778" y="79" width="1" height="5" fill="#008000"/>
<rect x="779" y="82" width="5" height="1" fill="#008000"/><rect x="781" y="80" width="1" height="5" fill="#008000"/>
<rect x="782" y="79" width="5" height="1" fill="#008000"/><rect x="784" y="77" width="1" height="5" fill="#008000"/>
<rect x="784" y="76" width="5" height="1" fill="#008000"/><rect x="786" y="74" width="1" height="5" fill="#008000"/>
<rect x="787" y="78" width="5" height="1" fill="#008000"/><rect x="789" y="76" width="1" height="5" fill="#008000"/>
<rect x="790" y="77" width="5" height="1" fill="#008000"/><rect x="792" y="75" width="1" height="5" fill="#008000"/>
<rect x="793" y="75" width="5" height="1" fill="#008000"/><rect x="795" y="73" width="1" height="5" fill="#008000"/>
<rect x="796" y="77" width="5" height="1" fill="#008000"/><rect x="798" y="75" width="1" height="5" fill="#008000"/>
<rect x="799" y="74" width="5" height="1" fill="#008000"/><rect x="801" y="72" width="1" height="5" fill="#008000"/>
<rect x="802" y="73" width="5" height="1" fill="#008000"/><rect x="804" y="71" width="1" height="5" fill="#008000"/>
<rect x="805" y="74" width="5" height="1" fill="#008000"/><rect x="807" y="72" width="1" height="5" fill="#008000"/>
<rect x="806" y="71" width="5" height="1" fill="#008000"/><rect x="808" y="69" width="1" height="5" fill="#008000"/>
<rect x="809" y="68" width="5" height="1" fill="#008000"/><rect x="811" y="66" width="1" height="5" fill="#008000"/>
<rect x="812" y="67" width="5" height="1" fill="#008000"/><rect x="814" y="65" width="1" height="5" fill="#008000"/>
<rect x="815" y="65" width="5" height="1" fill="#008000"/><rect x="817" y="63" width="1" height="5" fill="#008000"/>
<rect x="818" y="63" width="5" height="1" fill="#008000"/><rect x="820" y="61" width="1" height="5" fill="#008000"/>
<rect x="821" y="63" width="5" height="1" fill="#008000"/><rect x="823" y="61" width="1" height="5" fill="#008000"/>
<rect x="824" y="61" width="5" height="1" fill="#008000"/><rect x="826" y="59" width="1" height="5" fill="#008000"/>
<rect x="827" y="60" width="5" height="1" fill="#008000"/><rect x="829" y="58" width="1" height="5" fill="#008000"/>
<rect x="830" y="59" width="5" height="1" fill="#008000"/><rect x="832" y="57" width="1" height="5" fill="#008000"/>
<rect x="833" y="58" width="5" height="1" fill="#008000"/><rect x="835" y="56" width="1" height="5" fill="#008000"/>
<rect x="835" y="56" width="5" height="1" fill="#008000"/><rect x="837" y="54" width="1" height="5" fill="#008000"/>
<rect x="838" y="54" width="5" height="1" fill="#008000"/><rect x="840" y="52" width="1" height="5" fill="#008000"/>
<rect x="841" y="53" width="5" height="1" fill="#008000"/><rect x="843" y="51" width="1" height="5" fill="#008000"/>
<rect x="844" y="54" width="5" height="1" fill="#008000"/><rect x="846" y="52" width="1" height="5" fill="#008000"/>
<rect x="847" y="52" width="5" height="1" fill="#008000"/><rect x="849" y="50" width="1" height="5" fill="#008000"/>
<rect x="850" y="51" width="5" height="1" fill="#008000"/><rect x="852" y="49" width="1" height="5" fill="#008000"/>
<rect x="853" y="52" width="5" height="1" fill="#008000"/><rect x="855" y="50" width="1" height="5" fill="#008000"/>
<rect x="856" y="50" width="5" height="1" fill="#008000"/><rect x="858" y="48" width="1" height="5" fill="#008000"/>
<rect x="859" y="49" width="5" height="1" fill="#008000"/><rect x="861" y="47" width="1" height="5" fill="#008000"/>
<rect x="862" y="49" width="5" height="1" fill="#008000"/><rect x="864" y="47" width="1" height="5" fill="#008000"/>
<rect x="865" y="49" width="5" height="1" fill="#008000"/><rect x="867" y="47" width="1" height="5" fill="#008000"/>
<rect x="868" y="50" width="5" height="1" fill="#008000"/><rect x="870" y="48" width="1" height="5" fill="#008000"/>
<rect x="870" y="47" width="5" height="1" fill="#008000"/><rect x="872" y="45" width="1" height="5" fill="#008000"/>
<rect x="873" y="46" width="5" height="1" fill="#008000"/><rect x="875" y="44" width="1" height="5" fill="#008000"/>
<rect x="876" y="49" width="5" height="1" fill="#008000"/><rect x="878" y="47" width="1" height="5" fill="#008000"/>
<rect x="879" y="52" width="5" height="1" fill="#008000"/><rect x="881" y="50" width="1" height="5" fill="#008000"/>
<rect x="882" y="54" width="5" height="1" fill="#008000"/><rect x="884" y="52" width="1" height="5" fill="#008000"/>
<rect x="885" y="55" width="5" height="1" fill="#008000"/><rect x="887" y="53" width="1" height="5" fill="#008000"/>
<rect x="888" y="54" width="5" height="1" fill="#008000"/><rect x="890" y="52" width="1" height="5" fill="#008000"/>
<rect x="891" y="53" width="5" height="1" fill="#008000"/><rect x="893" y="51" width="1" height="5" fill="#008000"/>
<rect x="894" y="52" width="5" height="1" fill="#008000"/><rect x="896" y="50" width="1" height="5" fill="#008000"/>
<rect x="897" y="56" width="5" height="1" fill="#008000"/><rect x="899" y="54" width="1" height="5" fill="#008000"/>
<rect x="900" y="57" width="5" height="1" fill="#008000"/><rect x="902" y="55" width="1" height="5" fill="#008000"/>
<rect x="903" y="59" width="5" height="1" fill="#008000"/><rect x="905" y="57" width="1" height="5" fill="#008000"/>
<rect x="905" y="60" width="5" height="1" fill="#008000"/><rect x="907" y="58" width="1" height="5" fill="#008000"/>
<rect x="908" y="60" width="5" height="1" fill="#008000"/><rect x="910" y="58" width="1" height="5" fill="#008000"/>
<rect x="903" y="60" width="5" height="1" fill="#008000"/><rect x="905" y="58" width="1" height="5" fill="#008000"/>
<rect x="906" y="60" width="5" height="1" fill="#008000"/><rect x="908" y="58" width="1" height="5" fill="#008000"/>
<rect x="914" y="62" width="5" height="1" fill="#008000"/><rect x="916" y="60" width="1" height="5" fill="#008000"/>
<rect x="917" y="64" width="5" height="1" fill="#008000"/><rect x="919" y="62" width="1" height="5" fill="#008000"/>
<rect x="919" y="68" width="5" height="1" fill="#008000"/><rect x="921" y="66" width="1" height="5" fill="#008000"/>
<rect x="922" y="73" width="5" height="1" fill="#008000"/><rect x="924" y="71" width="1" height="5" fill="#008000"/>
<rect x="925" y="80" width="5" height="1" fill="#008000"/><rect x="927" y="78" width="1" height="5" fill="#008000"/>
<rect x="928" y="74" width="5" height="1" fill="#008000"/><rect x="930" y="72" width="1" height="5" fill="#008000"/>
<rect x="931" y="68" width="5" height="1" fill="#008000"/><rect x="933" y="66" width="1" height="5" fill="#008000"/>
<rect x="934" y="61" width="5" height="1" fill="#008000"/><rect x="936" y="59" width="1" height="5" fill="#008000"/>
<rect x="937" y="60" width="5" height="1" fill="#008000"/><rect x="939" y="58" width="1" height="5" fill="#008000"/>
<rect x="940" y="59" width="5" height="1" fill="#008000"/><rect x="942" y="57" width="1" height="5" fill="#008000"/>
<rect x="943" y="62" width="5" height="1" fill="#008000"/><rect x="945" y="60" width="1" height="5" fill="#008000"/>
<rect x="946" y="63" width="5" height="1" fill="#008000"/><rect x="948" y="61" width="1" height="5" fill="#008000"/>
<rect x="949" y="65" width="5" height="1" fill="#008000"/><rect x="951" y="63" width="1" height="5" fill="#008000"/>
<rect x="951" y="66" width="5" height="1" fill="#008000"/><rect x="953" y="64" width="1" height="5" fill="#008000"/>
<polyline points="599.4,258.1 602.5,257.6 605.4,246.7 609.1,252.3 611.5,250.8 614.7,247.4 617.6,242.3 620.5,225.5 623.2,211.9 626.6,209.7 629.3,199.3 632.7,199.3 635.8,200.5 638.3,193.7 641.4,187.6 644.3,196.1 647.5,183.5 650.4,174.5 653.3,173.8 656.5,167.7 659.4,160.4 662.6,166.5 665.5,158.0 668.6,150.2 671.6,157.5 674.2,148.2 677.2,148.2 680.3,154.3 683.2,148.7 686.4,141.7 689.3,140.2 691.2,137.0 694.1,133.3 697.0,130.9 700.0,132.1 702.9,125.3 705.8,123.6 708.7,118.7 711.6,121.2 714.6,121.2 717.5,118.0 720.4,120.4 723.3,102.9 726.5,95.1 729.4,96.8 732.3,95.6 735.2,102.4 738.1,96.8 741.0,94.4 744.0,84.7 746.9,86.4 749.8,87.6 752.7,95.1 755.6,90.8 758.5,89.1 761.5,84.7 764.4,84.0 767.3,85.9 770.2,85.4 773.1,83.5 776.0,82.3 779.0,83.0 781.9,82.3 785.0,81.0 788.0,82.3 790.9,85.4 793.8,83.5 797.0,82.3 799.9,78.1 802.8,79.8 805.7,78.1 808.6,73.8 810.0,68.8 812.9,66.8 815.8,65.1 818.7,63.9 821.6,62.7 824.6,62.7 827.5,62.7 830.4,61.5 833.3,56.1 836.2,55.4 839.1,53.0 842.1,52.2 845.0,53.0 847.9,53.7 850.8,51.7 853.7,50.5 856.6,48.1 859.6,49.3 862.5,51.3 865.4,51.3 868.3,53.0 871.2,54.7 874.1,53.0 877.1,50.5 880.0,52.2 882.9,54.2 885.8,55.4 888.7,54.2 891.6,53.0 894.6,53.0 897.5,53.7" fill="none" stroke="#ffffff" stroke-width="1.0" shape-rendering="crispEdges"/>
<polyline points="599.9,258.1 603.0,257.6 605.9,246.7 609.6,252.3 612.0,250.8 615.2,247.4 618.1,242.3 621.0,225.5 623.7,211.9 627.1,209.7 629.8,199.3 633.2,199.3 636.3,200.5 638.8,193.7 641.9,187.6 644.8,196.1 648.0,183.5 650.9,174.5 653.8,173.8 657.0,167.7 659.9,160.4 663.1,166.5 666.0,158.0 669.1,150.2 672.1,157.5 674.7,148.2 677.7,148.2 680.8,154.3 683.7,148.7 686.9,141.7 689.8,140.2 691.7,137.0 694.6,133.3 697.5,130.9 700.5,132.1 703.4,125.3 706.3,123.6 709.2,118.7 712.1,121.2 715.1,121.2 718.0,118.0 720.9,120.4 723.8,102.9 727.0,95.1 729.9,96.8 732.8,95.6 735.7,102.4 738.6,96.8 741.5,94.4 744.5,84.7 747.4,86.4 750.3,87.6 753.2,95.1 756.1,90.8 759.0,89.1 762.0,84.7 764.9,84.0 767.8,85.9 770.7,85.4 773.6,83.5 776.5,82.3 779.5,83.0 782.4,82.3 785.5,81.0 788.5,82.3 791.4,85.4 794.3,83.5 797.5,82.3 800.4,78.1 803.3,79.8 806.2,78.1 809.1,73.8 810.5,68.8 813.4,66.8 816.3,65.1 819.2,63.9 822.1,62.7 825.1,62.7 828.0,62.7 830.9,61.5 833.8,56.1 836.7,55.4 839.6,53.0 842.6,52.2 845.5,53.0 848.4,53.7 851.3,51.7 854.2,50.5 857.1,48.1 860.1,49.3 863.0,51.3 865.9,51.3 868.8,53.0 871.7,54.7 874.6,53.0 877.6,50.5 880.5,52.2 883.4,54.2 886.3,55.4 889.2,54.2 892.1,53.0 895.1,53.0 898.0,53.7" fill="none" stroke="#780a1e" stroke-width="1.0" shape-rendering="crispEdges"/>
<rect x="597" y="258" width="5" height="1" fill="#e0082c"/><rect x="599" y="256" width="1" height="5" fill="#e0082c"/>
<rect x="600" y="257" width="5" height="1" fill="#e0082c"/><rect x="602" y="255" width="1" height="5" fill="#e0082c"/>
<rect x="603" y="246" width="5" height="1" fill="#e0082c"/><rect x="605" y="244" width="1" height="5" fill="#e0082c"/>
<rect x="607" y="252" width="5" height="1" fill="#e0082c"/><rect x="609" y="250" width="1" height="5" fill="#e0082c"/>
<rect x="609" y="250" width="5" height="1" fill="#e0082c"/><rect x="611" y="248" width="1" height="5" fill="#e0082c"/>
<rect x="612" y="247" width="5" height="1" fill="#e0082c"/><rect x="614" y="245" width="1" height="5" fill="#e0082c"/>
<rect x="615" y="242" width="5" height="1" fill="#e0082c"/><rect x="617" y="240" width="1" height="5" fill="#e0082c"/>
<rect x="618" y="225" width="5" height="1" fill="#e0082c"/><rect x="620" y="223" width="1" height="5" fill="#e0082c"/>
<rect x="621" y="211" width="5" height="1" fill="#e0082c"/><rect x="623" y="209" width="1" height="5" fill="#e0082c"/>
<rect x="624" y="209" width="5" height="1" fill="#e0082c"/><rect x="626" y="207" width="1" height="5" fill="#e0082c"/>
<rect x="627" y="199" width="5" height="1" fill="#e0082c"/><rect x="629" y="197" width="1" height="5" fill="#e0082c"/>
<rect x="630" y="199" width="5" height="1" fill="#e0082c"/><rect x="632" y="197" width="1" height="5" fill="#e0082c"/>
<rect x="633" y="200" width="5" height="1" fill="#e0082c"/><rect x="635" y="198" width="1" height="5" fill="#e0082c"/>
<rect x="636" y="193" width="5" height="1" fill="#e0082c"/><rect x="638" y="191" width="1" height="5" fill="#e0082c"/>
<rect x="639" y="187" width="5" height="1" fill="#e0082c"/><rect x="641" y="185" width="1" height="5" fill="#e0082c"/>
<rect x="642" y="196" width="5" height="1" fill="#e0082c"/><rect x="644" y="194" width="1" height="5" fill="#e0082c"/>
<rect x="645" y="183" width="5" height="1" fill="#e0082c"/><rect x="647" y="181" width="1" height="5" fill="#e0082c"/>
<rect x="648" y="174" width="5" height="1" fill="#e0082c"/><rect x="650" y="172" width="1" height="5" fill="#e0082c"/>
<rect x="651" y="173" width="5" height="1" fill="#e0082c"/><rect x="653" y="171" width="1" height="5" fill="#e0082c"/>
<rect x="654" y="167" width="5" height="1" fill="#e0082c"/><rect x="656" y="165" width="1" height="5" fill="#e0082c"/>
<rect x="657" y="160" width="5" height="1" fill="#e0082c"/><rect x="659" y="158" width="1" height="5" fill="#e0082c"/>
<rect x="660" y="166" width="5" height="1" fill="#e0082c"/><rect x="662" y="164" width="1" height="5" fill="#e0082c"/>
<rect x="663" y="157" width="5" height="1" fill="#e0082c"/><rect x="665" y="155" width="1" height="5" fill="#e0082c"/>
<rect x="666" y="150" width="5" height="1" fill="#e0082c"/><rect x="668" y="148" width="1" height="5" fill="#e0082c"/>
<rect x="669" y="157" width="5" height="1" fill="#e0082c"/><rect x="671" y="155" width="1" height="5" fill="#e0082c"/>
<rect x="672" y="148" width="5" height="1" fill="#e0082c"/><rect x="674" y="146" width="1" height="5" fill="#e0082c"/>
<rect x="675" y="148" width="5" height="1" fill="#e0082c"/><rect x="677" y="146" width="1" height="5" fill="#e0082c"/>
<rect x="678" y="154" width="5" height="1" fill="#e0082c"/><rect x="680" y="152" width="1" height="5" fill="#e0082c"/>
<rect x="681" y="148" width="5" height="1" fill="#e0082c"/><rect x="683" y="146" width="1" height="5" fill="#e0082c"/>
<rect x="684" y="141" width="5" height="1" fill="#e0082c"/><rect x="686" y="139" width="1" height="5" fill="#e0082c"/>
<rect x="687" y="140" width="5" height="1" fill="#e0082c"/><rect x="689" y="138" width="1" height="5" fill="#e0082c"/>
<rect x="689" y="136" width="5" height="1" fill="#e0082c"/><rect x="691" y="134" width="1" height="5" fill="#e0082c"/>
<rect x="692" y="133" width="5" height="1" fill="#e0082c"/><rect x="694" y="131" width="1" height="5" fill="#e0082c"/>
<rect x="695" y="130" width="5" height="1" fill="#e0082c"/><rect x="697" y="128" width="1" height="5" fill="#e0082c"/>
<rect x="697" y="132" width="5" height="1" fill="#e0082c"/><rect x="699" y="130" width="1" height="5" fill="#e0082c"/>
<rect x="700" y="125" width="5" height="1" fill="#e0082c"/><rect x="702" y="123" width="1" height="5" fill="#e0082c"/>
<rect x="703" y="123" width="5" height="1" fill="#e0082c"/><rect x="705" y="121" width="1" height="5" fill="#e0082c"/>
<rect x="706" y="118" width="5" height="1" fill="#e0082c"/><rect x="708" y="116" width="1" height="5" fill="#e0082c"/>
<rect x="709" y="121" width="5" height="1" fill="#e0082c"/><rect x="711" y="119" width="1" height="5" fill="#e0082c"/>
<rect x="712" y="121" width="5" height="1" fill="#e0082c"/><rect x="714" y="119" width="1" height="5" fill="#e0082c"/>
<rect x="715" y="117" width="5" height="1" fill="#e0082c"/><rect x="717" y="115" width="1" height="5" fill="#e0082c"/>
<rect x="718" y="120" width="5" height="1" fill="#e0082c"/><rect x="720" y="118" width="1" height="5" fill="#e0082c"/>
<rect x="721" y="102" width="5" height="1" fill="#e0082c"/><rect x="723" y="100" width="1" height="5" fill="#e0082c"/>
<rect x="724" y="95" width="5" height="1" fill="#e0082c"/><rect x="726" y="93" width="1" height="5" fill="#e0082c"/>
<rect x="727" y="96" width="5" height="1" fill="#e0082c"/><rect x="729" y="94" width="1" height="5" fill="#e0082c"/>
<rect x="730" y="95" width="5" height="1" fill="#e0082c"/><rect x="732" y="93" width="1" height="5" fill="#e0082c"/>
<rect x="733" y="102" width="5" height="1" fill="#e0082c"/><rect x="735" y="100" width="1" height="5" fill="#e0082c"/>
<rect x="736" y="96" width="5" height="1" fill="#e0082c"/><rect x="738" y="94" width="1" height="5" fill="#e0082c"/>
<rect x="739" y="94" width="5" height="1" fill="#e0082c"/><rect x="741" y="92" width="1" height="5" fill="#e0082c"/>
<rect x="741" y="84" width="5" height="1" fill="#e0082c"/><rect x="743" y="82" width="1" height="5" fill="#e0082c"/>
<rect x="744" y="86" width="5" height="1" fill="#e0082c"/><rect x="746" y="84" width="1" height="5" fill="#e0082c"/>
<rect x="747" y="87" width="5" height="1" fill="#e0082c"/><rect x="749" y="85" width="1" height="5" fill="#e0082c"/>
<rect x="750" y="95" width="5" height="1" fill="#e0082c"/><rect x="752" y="93" width="1" height="5" fill="#e0082c"/>
<rect x="753" y="90" width="5" height="1" fill="#e0082c"/><rect x="755" y="88" width="1" height="5" fill="#e0082c"/>
<rect x="756" y="89" width="5" height="1" fill="#e0082c"/><rect x="758" y="87" width="1" height="5" fill="#e0082c"/>
<rect x="759" y="84" width="5" height="1" fill="#e0082c"/><rect x="761" y="82" width="1" height="5" fill="#e0082c"/>
<rect x="762" y="83" width="5" height="1" fill="#e0082c"/><rect x="764" y="81" width="1" height="5" fill="#e0082c"/>
<rect x="765" y="85" width="5" height="1" fill="#e0082c"/><rect x="767" y="83" width="1" height="5" fill="#e0082c"/>
<rect x="768" y="85" width="5" height="1" fill="#e0082c"/><rect x="770" y="83" width="1" height="5" fill="#e0082c"/>
<rect x="771" y="83" width="5" height="1" fill="#e0082c"/><rect x="773" y="81" width="1" height="5" fill="#e0082c"/>
<rect x="774" y="82" width="5" height="1" fill="#e0082c"/><rect x="776" y="80" width="1" height="5" fill="#e0082c"/>
<rect x="776" y="82" width="5" height="1" fill="#e0082c"/><rect x="778" y="80" width="1" height="5" fill="#e0082c"/>
<rect x="779" y="82" width="5" height="1" fill="#e0082c"/><rect x="781" y="80" width="1" height="5" fill="#e0082c"/>
<rect x="783" y="81" width="5" height="1" fill="#e0082c"/><rect x="785" y="79" width="1" height="5" fill="#e0082c"/>
<rect x="785" y="82" width="5" height="1" fill="#e0082c"/><rect x="787" y="80" width="1" height="5" fill="#e0082c"/>
<rect x="788" y="85" width="5" height="1" fill="#e0082c"/><rect x="790" y="83" width="1" height="5" fill="#e0082c"/>
<rect x="791" y="83" width="5" height="1" fill="#e0082c"/><rect x="793" y="81" width="1" height="5" fill="#e0082c"/>
<rect x="794" y="82" width="5" height="1" fill="#e0082c"/><rect x="796" y="80" width="1" height="5" fill="#e0082c"/>
<rect x="797" y="78" width="5" height="1" fill="#e0082c"/><rect x="799" y="76" width="1" height="5" fill="#e0082c"/>
<rect x="800" y="79" width="5" height="1" fill="#e0082c"/><rect x="802" y="77" width="1" height="5" fill="#e0082c"/>
<rect x="803" y="78" width="5" height="1" fill="#e0082c"/><rect x="805" y="76" width="1" height="5" fill="#e0082c"/>
<rect x="806" y="73" width="5" height="1" fill="#e0082c"/><rect x="808" y="71" width="1" height="5" fill="#e0082c"/>
<rect x="807" y="68" width="5" height="1" fill="#e0082c"/><rect x="809" y="66" width="1" height="5" fill="#e0082c"/>
<rect x="810" y="66" width="5" height="1" fill="#e0082c"/><rect x="812" y="64" width="1" height="5" fill="#e0082c"/>
<rect x="813" y="65" width="5" height="1" fill="#e0082c"/><rect x="815" y="63" width="1" height="5" fill="#e0082c"/>
<rect x="816" y="63" width="5" height="1" fill="#e0082c"/><rect x="818" y="61" width="1" height="5" fill="#e0082c"/>
<rect x="819" y="62" width="5" height="1" fill="#e0082c"/><rect x="821" y="60" width="1" height="5" fill="#e0082c"/>
<rect x="822" y="62" width="5" height="1" fill="#e0082c"/><rect x="824" y="60" width="1" height="5" fill="#e0082c"/>
<rect x="825" y="62" width="5" height="1" fill="#e0082c"/><rect x="827" y="60" width="1" height="5" fill="#e0082c"/>
<rect x="828" y="61" width="5" height="1" fill="#e0082c"/><rect x="830" y="59" width="1" height="5" fill="#e0082c"/>
<rect x="831" y="56" width="5" height="1" fill="#e0082c"/><rect x="833" y="54" width="1" height="5" fill="#e0082c"/>
<rect x="834" y="55" width="5" height="1" fill="#e0082c"/><rect x="836" y="53" width="1" height="5" fill="#e0082c"/>
<rect x="837" y="52" width="5" height="1" fill="#e0082c"/><rect x="839" y="50" width="1" height="5" fill="#e0082c"/>
<rect x="840" y="52" width="5" height="1" fill="#e0082c"/><rect x="842" y="50" width="1" height="5" fill="#e0082c"/>
<rect x="842" y="52" width="5" height="1" fill="#e0082c"/><rect x="844" y="50" width="1" height="5" fill="#e0082c"/>
<rect x="845" y="53" width="5" height="1" fill="#e0082c"/><rect x="847" y="51" width="1" height="5" fill="#e0082c"/>
<rect x="848" y="51" width="5" height="1" fill="#e0082c"/><rect x="850" y="49" width="1" height="5" fill="#e0082c"/>
<rect x="851" y="50" width="5" height="1" fill="#e0082c"/><rect x="853" y="48" width="1" height="5" fill="#e0082c"/>
<rect x="854" y="48" width="5" height="1" fill="#e0082c"/><rect x="856" y="46" width="1" height="5" fill="#e0082c"/>
<rect x="857" y="49" width="5" height="1" fill="#e0082c"/><rect x="859" y="47" width="1" height="5" fill="#e0082c"/>
<rect x="860" y="51" width="5" height="1" fill="#e0082c"/><rect x="862" y="49" width="1" height="5" fill="#e0082c"/>
<rect x="863" y="51" width="5" height="1" fill="#e0082c"/><rect x="865" y="49" width="1" height="5" fill="#e0082c"/>
<rect x="866" y="52" width="5" height="1" fill="#e0082c"/><rect x="868" y="50" width="1" height="5" fill="#e0082c"/>
<rect x="869" y="54" width="5" height="1" fill="#e0082c"/><rect x="871" y="52" width="1" height="5" fill="#e0082c"/>
<rect x="872" y="52" width="5" height="1" fill="#e0082c"/><rect x="874" y="50" width="1" height="5" fill="#e0082c"/>
<rect x="875" y="50" width="5" height="1" fill="#e0082c"/><rect x="877" y="48" width="1" height="5" fill="#e0082c"/>
<rect x="877" y="52" width="5" height="1" fill="#e0082c"/><rect x="879" y="50" width="1" height="5" fill="#e0082c"/>
<rect x="880" y="54" width="5" height="1" fill="#e0082c"/><rect x="882" y="52" width="1" height="5" fill="#e0082c"/>
<rect x="883" y="55" width="5" height="1" fill="#e0082c"/><rect x="885" y="53" width="1" height="5" fill="#e0082c"/>
<rect x="886" y="54" width="5" height="1" fill="#e0082c"/><rect x="888" y="52" width="1" height="5" fill="#e0082c"/>
<rect x="889" y="52" width="5" height="1" fill="#e0082c"/><rect x="891" y="50" width="1" height="5" fill="#e0082c"/>
<rect x="892" y="52" width="5" height="1" fill="#e0082c"/><rect x="894" y="50" width="1" height="5" fill="#e0082c"/>
<rect x="895" y="53" width="5" height="1" fill="#e0082c"/><rect x="897" y="51" width="1" height="5" fill="#e0082c"/>
</g>
<g id="map">
<clipPath id="mclip"><rect x="30" y="305" width="237" height="241"/></clipPath>
<g clip-path="url(#mclip)" shape-rendering="crispEdges">
<rect x="208" y="425" width="1" height="1" fill="#64735f"/>
<rect x="122" y="504" width="1" height="1" fill="#64735f"/>
<rect x="102" y="416" width="1" height="1" fill="#64735f"/>
<rect x="71" y="328" width="1" height="1" fill="#64735f"/>
<rect x="168" y="416" width="1" height="1" fill="#64735f"/>
<rect x="142" y="434" width="1" height="1" fill="#64735f"/>
<rect x="208" y="434" width="1" height="1" fill="#64735f"/>
<rect x="258" y="328" width="1" height="1" fill="#64735f"/>
<rect x="208" y="443" width="1" height="1" fill="#64735f"/>
<rect x="109" y="504" width="1" height="1" fill="#64735f"/>
<rect x="97" y="328" width="1" height="1" fill="#64735f"/>
<rect x="175" y="504" width="1" height="1" fill="#64735f"/>
<rect x="207" y="328" width="1" height="1" fill="#64735f"/>
<rect x="69" y="504" width="1" height="1" fill="#64735f"/>
<rect x="207" y="337" width="1" height="1" fill="#64735f"/>
<rect x="135" y="504" width="1" height="1" fill="#64735f"/>
<rect x="207" y="346" width="1" height="1" fill="#64735f"/>
<rect x="207" y="355" width="1" height="1" fill="#64735f"/>
<rect x="77" y="346" width="1" height="1" fill="#64735f"/>
<rect x="142" y="363" width="1" height="1" fill="#64735f"/>
<rect x="240" y="416" width="1" height="1" fill="#64735f"/>
<rect x="220" y="328" width="1" height="1" fill="#64735f"/>
<rect x="76" y="390" width="1" height="1" fill="#64735f"/>
<rect x="77" y="355" width="1" height="1" fill="#64735f"/>
<rect x="82" y="504" width="1" height="1" fill="#64735f"/>
<rect x="76" y="399" width="1" height="1" fill="#64735f"/>
<rect x="103" y="328" width="1" height="1" fill="#64735f"/>
<rect x="142" y="320" width="1" height="1" fill="#64735f"/>
<rect x="116" y="328" width="1" height="1" fill="#64735f"/>
<rect x="226" y="328" width="1" height="1" fill="#64735f"/>
<rect x="142" y="530" width="1" height="1" fill="#64735f"/>
<rect x="142" y="539" width="1" height="1" fill="#64735f"/>
<rect x="209" y="504" width="1" height="1" fill="#64735f"/>
<rect x="252" y="328" width="1" height="1" fill="#64735f"/>
<rect x="76" y="443" width="1" height="1" fill="#64735f"/>
<rect x="209" y="513" width="1" height="1" fill="#64735f"/>
<rect x="75" y="522" width="1" height="1" fill="#64735f"/>
<rect x="83" y="416" width="1" height="1" fill="#64735f"/>
<rect x="169" y="504" width="1" height="1" fill="#64735f"/>
<rect x="77" y="311" width="1" height="1" fill="#64735f"/>
<rect x="209" y="522" width="1" height="1" fill="#64735f"/>
<rect x="43" y="416" width="1" height="1" fill="#64735f"/>
<rect x="265" y="328" width="1" height="1" fill="#64735f"/>
<rect x="182" y="504" width="1" height="1" fill="#64735f"/>
<rect x="148" y="328" width="1" height="1" fill="#64735f"/>
<rect x="56" y="416" width="1" height="1" fill="#64735f"/>
<rect x="155" y="416" width="1" height="1" fill="#64735f"/>
<rect x="208" y="486" width="1" height="1" fill="#64735f"/>
<rect x="221" y="416" width="1" height="1" fill="#64735f"/>
<rect x="84" y="328" width="1" height="1" fill="#64735f"/>
<rect x="181" y="416" width="1" height="1" fill="#64735f"/>
<rect x="161" y="328" width="1" height="1" fill="#64735f"/>
<rect x="75" y="478" width="1" height="1" fill="#64735f"/>
<rect x="142" y="443" width="1" height="1" fill="#64735f"/>
<rect x="89" y="504" width="1" height="1" fill="#64735f"/>
<rect x="110" y="328" width="1" height="1" fill="#64735f"/>
<rect x="234" y="416" width="1" height="1" fill="#64735f"/>
<rect x="194" y="416" width="1" height="1" fill="#64735f"/>
<rect x="260" y="416" width="1" height="1" fill="#64735f"/>
<rect x="76" y="451" width="1" height="1" fill="#64735f"/>
<rect x="76" y="460" width="1" height="1" fill="#64735f"/>
<rect x="142" y="372" width="1" height="1" fill="#64735f"/>
<rect x="95" y="504" width="1" height="1" fill="#64735f"/>
<rect x="142" y="381" width="1" height="1" fill="#64735f"/>
<rect x="55" y="504" width="1" height="1" fill="#64735f"/>
<rect x="142" y="390" width="1" height="1" fill="#64735f"/>
<rect x="142" y="399" width="1" height="1" fill="#64735f"/>
<rect x="42" y="504" width="1" height="1" fill="#64735f"/>
<rect x="129" y="328" width="1" height="1" fill="#64735f"/>
<rect x="229" y="504" width="1" height="1" fill="#64735f"/>
<rect x="37" y="416" width="1" height="1" fill="#64735f"/>
<rect x="77" y="363" width="1" height="1" fill="#64735f"/>
<rect x="202" y="504" width="1" height="1" fill="#64735f"/>
<rect x="189" y="504" width="1" height="1" fill="#64735f"/>
<rect x="207" y="320" width="1" height="1" fill="#64735f"/>
<rect x="96" y="416" width="1" height="1" fill="#64735f"/>
<rect x="162" y="416" width="1" height="1" fill="#64735f"/>
<rect x="142" y="328" width="1" height="1" fill="#64735f"/>
<rect x="77" y="320" width="1" height="1" fill="#64735f"/>
<rect x="142" y="337" width="1" height="1" fill="#64735f"/>
<rect x="122" y="416" width="1" height="1" fill="#64735f"/>
<rect x="168" y="328" width="1" height="1" fill="#64735f"/>
<rect x="51" y="328" width="1" height="1" fill="#64735f"/>
<rect x="129" y="504" width="1" height="1" fill="#64735f"/>
<rect x="109" y="416" width="1" height="1" fill="#64735f"/>
<rect x="195" y="504" width="1" height="1" fill="#64735f"/>
<rect x="175" y="416" width="1" height="1" fill="#64735f"/>
<rect x="135" y="416" width="1" height="1" fill="#64735f"/>
<rect x="142" y="486" width="1" height="1" fill="#64735f"/>
<rect x="75" y="530" width="1" height="1" fill="#64735f"/>
<rect x="142" y="495" width="1" height="1" fill="#64735f"/>
<rect x="75" y="539" width="1" height="1" fill="#64735f"/>
<rect x="64" y="328" width="1" height="1" fill="#64735f"/>
<rect x="142" y="504" width="1" height="1" fill="#64735f"/>
<rect x="174" y="328" width="1" height="1" fill="#64735f"/>
<rect x="142" y="513" width="1" height="1" fill="#64735f"/>
<rect x="102" y="504" width="1" height="1" fill="#64735f"/>
<rect x="142" y="522" width="1" height="1" fill="#64735f"/>
<rect x="247" y="416" width="1" height="1" fill="#64735f"/>
<rect x="187" y="328" width="1" height="1" fill="#64735f"/>
<rect x="49" y="504" width="1" height="1" fill="#64735f"/>
<rect x="115" y="504" width="1" height="1" fill="#64735f"/>
<rect x="249" y="504" width="1" height="1" fill="#64735f"/>
<rect x="76" y="469" width="1" height="1" fill="#64735f"/>
<rect x="142" y="451" width="1" height="1" fill="#64735f"/>
<rect x="208" y="451" width="1" height="1" fill="#64735f"/>
<rect x="142" y="460" width="1" height="1" fill="#64735f"/>
<rect x="208" y="460" width="1" height="1" fill="#64735f"/>
<rect x="208" y="469" width="1" height="1" fill="#64735f"/>
<rect x="32" y="328" width="1" height="1" fill="#64735f"/>
<rect x="222" y="504" width="1" height="1" fill="#64735f"/>
<rect x="242" y="504" width="1" height="1" fill="#64735f"/>
<rect x="207" y="363" width="1" height="1" fill="#64735f"/>
<rect x="207" y="372" width="1" height="1" fill="#64735f"/>
<rect x="50" y="416" width="1" height="1" fill="#64735f"/>
<rect x="116" y="416" width="1" height="1" fill="#64735f"/>
<rect x="207" y="381" width="1" height="1" fill="#64735f"/>
<rect x="76" y="407" width="1" height="1" fill="#64735f"/>
<rect x="77" y="372" width="1" height="1" fill="#64735f"/>
<rect x="76" y="416" width="1" height="1" fill="#64735f"/>
<rect x="77" y="381" width="1" height="1" fill="#64735f"/>
<rect x="155" y="328" width="1" height="1" fill="#64735f"/>
<rect x="255" y="504" width="1" height="1" fill="#64735f"/>
<rect x="232" y="328" width="1" height="1" fill="#64735f"/>
<rect x="76" y="425" width="1" height="1" fill="#64735f"/>
<rect x="76" y="434" width="1" height="1" fill="#64735f"/>
<rect x="63" y="416" width="1" height="1" fill="#64735f"/>
<rect x="149" y="504" width="1" height="1" fill="#64735f"/>
<rect x="215" y="504" width="1" height="1" fill="#64735f"/>
<rect x="181" y="328" width="1" height="1" fill="#64735f"/>
<rect x="142" y="346" width="1" height="1" fill="#64735f"/>
<rect x="142" y="355" width="1" height="1" fill="#64735f"/>
<rect x="89" y="416" width="1" height="1" fill="#64735f"/>
<rect x="188" y="416" width="1" height="1" fill="#64735f"/>
<rect x="254" y="416" width="1" height="1" fill="#64735f"/>
<rect x="148" y="416" width="1" height="1" fill="#64735f"/>
<rect x="38" y="328" width="1" height="1" fill="#64735f"/>
<rect x="214" y="416" width="1" height="1" fill="#64735f"/>
<rect x="194" y="328" width="1" height="1" fill="#64735f"/>
<rect x="209" y="530" width="1" height="1" fill="#64735f"/>
<rect x="77" y="328" width="1" height="1" fill="#64735f"/>
<rect x="155" y="504" width="1" height="1" fill="#64735f"/>
<rect x="209" y="539" width="1" height="1" fill="#64735f"/>
<rect x="201" y="416" width="1" height="1" fill="#64735f"/>
<rect x="77" y="337" width="1" height="1" fill="#64735f"/>
<rect x="206" y="311" width="1" height="1" fill="#64735f"/>
<rect x="227" y="416" width="1" height="1" fill="#64735f"/>
<rect x="90" y="328" width="1" height="1" fill="#64735f"/>
<rect x="142" y="311" width="1" height="1" fill="#64735f"/>
<rect x="200" y="328" width="1" height="1" fill="#64735f"/>
<rect x="62" y="504" width="1" height="1" fill="#64735f"/>
<rect x="75" y="486" width="1" height="1" fill="#64735f"/>
<rect x="75" y="495" width="1" height="1" fill="#64735f"/>
<rect x="213" y="328" width="1" height="1" fill="#64735f"/>
<rect x="209" y="495" width="1" height="1" fill="#64735f"/>
<rect x="75" y="504" width="1" height="1" fill="#64735f"/>
<rect x="142" y="469" width="1" height="1" fill="#64735f"/>
<rect x="75" y="513" width="1" height="1" fill="#64735f"/>
<rect x="262" y="504" width="1" height="1" fill="#64735f"/>
<rect x="239" y="328" width="1" height="1" fill="#64735f"/>
<rect x="142" y="478" width="1" height="1" fill="#64735f"/>
<rect x="35" y="504" width="1" height="1" fill="#64735f"/>
<rect x="208" y="478" width="1" height="1" fill="#64735f"/>
<rect x="70" y="416" width="1" height="1" fill="#64735f"/>
<rect x="235" y="504" width="1" height="1" fill="#64735f"/>
<rect x="122" y="328" width="1" height="1" fill="#64735f"/>
<rect x="30" y="416" width="1" height="1" fill="#64735f"/>
<rect x="129" y="416" width="1" height="1" fill="#64735f"/>
<rect x="207" y="390" width="1" height="1" fill="#64735f"/>
<rect x="58" y="328" width="1" height="1" fill="#64735f"/>
<rect x="45" y="328" width="1" height="1" fill="#64735f"/>
<rect x="135" y="328" width="1" height="1" fill="#64735f"/>
<rect x="207" y="399" width="1" height="1" fill="#64735f"/>
<rect x="245" y="328" width="1" height="1" fill="#64735f"/>
<rect x="142" y="407" width="1" height="1" fill="#64735f"/>
<rect x="208" y="407" width="1" height="1" fill="#64735f"/>
<rect x="162" y="504" width="1" height="1" fill="#64735f"/>
<rect x="142" y="416" width="1" height="1" fill="#64735f"/>
<rect x="208" y="416" width="1" height="1" fill="#64735f"/>
<rect x="142" y="425" width="1" height="1" fill="#64735f"/>
<polyline points="46.6,355.6 44.0,359.9 41.4,363.4 38.8,366.0 34.4,368.1 31.8,369.8 30.1,372.6" fill="none" stroke="#0b2558" stroke-width="1.0" />
<polyline points="29.6,445.4 35.1,446.8 40.7,448.8 46.2,450.4 49.6,454.9 54.6,453.8 61.5,454.9 63.4,461.3 64.3,468.2 65.7,479.3 67.1,490.4 68.4,497.4 69.8,502.9 75.4,507.1 74.6,512.7 74.0,518.2 75.7,526.6 76.8,537.7 75.7,543.2 73.4,546.6" fill="none" stroke="#0b2558" stroke-width="1.0" />
<polyline points="148.4,411.3 149.8,416.0 151.8,419.6 155.9,421.6 160.1,422.4 164.3,424.3 168.4,426.6 171.8,429.3 174.0,432.1 174.6,437.7 175.4,443.2 178.4,448.8 180.9,452.9 180.4,457.1 178.2,461.3 180.9,464.9 183.7,468.2 179.6,473.2 174.0,477.9 169.8,480.7 165.7,479.3 160.1,477.9 155.1,478.2 151.8,479.3 151.2,484.3 150.4,489.1 146.2,491.8 143.4,493.2 142.3,497.4 143.4,501.6 141.5,505.7 142.1,509.9 144.8,514.1 147.6,518.2 147.9,523.2 149.0,527.9 151.2,532.1 153.2,534.9 155.1,539.9 157.3,544.6 160.1,541.0 162.9,540.4 165.7,542.7 168.4,543.2 171.8,544.9 175.4,546.0 176.8,547.7" fill="none" stroke="#0b2558" stroke-width="1.0" />
<polyline points="240.7,447.4 244.0,447.1 247.6,446.0 251.2,443.8 254.6,441.8 257.3,443.8 258.7,447.4 259.3,451.0 260.1,454.3 263.4,457.1 267.1,458.5 271.2,459.3" fill="none" stroke="#0b2558" stroke-width="1.0" />
<polyline points="29.0,352.5 45.7,352.5" fill="none" stroke="#6e4614" stroke-width="1.0" />
<polyline points="238.5,331.0 238.5,366.0 239.5,366.5 239.5,447.0 240.5,447.5 240.5,527.5 268.0,527.5" fill="none" stroke="#6e4614" stroke-width="1.0" />
<polyline points="239.8,447.4 235.1,448.8 230.9,451.6 231.8,457.1 233.7,462.7 234.6,469.6 235.1,476.6 232.9,481.6 230.9,484.9 229.0,491.8 226.8,498.8 225.9,504.3 225.4,509.9 223.2,514.1 221.2,518.2 219.8,523.8 218.4,529.3 217.1,533.8 215.7,537.7 212.3,541.0 208.7,543.2 205.9,546.0 204.0,548.2" fill="none" stroke="#6e4614" stroke-width="1.0" />
<polyline points="66.9,322.6 67.4,326.9 68.3,331.2 70.0,336.5 71.7,340.8 76.1,344.3 81.3,347.2 86.5,350.3 90.8,353.5 95.2,356.4 101.3,357.3 107.3,358.3 114.3,358.3 118.6,355.9 124.0,352.3 127.4,349.5 136.0,344.3 144.7,339.1 153.4,333.3 162.1,327.8 170.8,322.2 179.4,316.5 186.4,312.2 190.7,309.5 196.8,308.3 203.8,306.9 210.0,306.1 210.8,306.1 216.0,305.2 219.5,304.2" fill="none" stroke="#b06a1e" stroke-width="1.0" />
<polyline points="70.0,304.9 68.3,306.9 67.4,312.2 66.5,317.4 65.7,321.2 66.7,322.2 67.4,320.5 68.4,317.4 70.2,312.5 71.2,307.8 70.9,305.2 70.0,304.9" fill="none" stroke="#9c9c9c" stroke-width="1.35" />
<polyline points="66.5,322.2 65.7,326.9 63.1,330.4 59.6,333.0 56.1,337.3 53.5,340.8 50.9,344.3 49.2,347.7 48.3,350.7 46.2,352.1 47.4,354.2 51.8,355.6 55.2,355.2 57.0,357.3 61.3,359.9 65.7,361.6 70.0,363.4 73.5,366.8 76.1,368.6 79.6,370.8 82.2,371.2 84.8,370.8 86.2,368.6 86.8,366.0 88.6,365.6 90.0,368.1 92.6,369.4 96.0,369.8 96.6,371.5 96.9,373.8 99.5,376.4 102.1,379.0 106.5,381.6 110.8,383.3 114.3,381.6 118.6,379.9 124.0,379.2 127.4,376.4 130.8,374.7 134.3,373.8 137.8,372.6 141.2,372.0 144.7,373.3 148.2,374.3 152.5,375.0 156.0,373.8 158.6,373.8 162.1,372.0 165.6,370.3 169.0,367.4 172.5,364.2 176.0,360.8 179.4,357.3 182.9,354.2 186.4,352.1 190.7,350.0 194.2,348.6 196.8,347.7 200.3,345.5 203.8,343.4 207.2,342.2 212.6,340.8 217.8,338.2 224.7,335.6 231.7,333.3 238.6,330.4 242.1,328.1 247.3,327.3 252.5,324.3 257.7,320.8 261.2,318.2 264.3,316.0" fill="none" stroke="#9c9c9c" stroke-width="1.35" />
<polyline points="72.3,376.4 76.1,376.4 79.6,374.7 84.8,373.8 90.0,372.9 96.6,372.9 97.8,375.0 94.3,375.0 90.8,375.3 87.4,376.4 83.0,377.6 79.6,379.0 75.7,377.4 72.3,376.4" fill="none" stroke="#9c9c9c" stroke-width="1.35" />
<polyline points="79.6,375.0 83.9,375.7 88.6,374.3 93.4,373.8" fill="none" stroke="#9c9c9c" stroke-width="0.9" />
<polyline points="67.4,321.7 69.5,324.3 71.7,326.0 76.1,327.4 80.4,329.9 83.9,331.6 87.4,330.9 90.8,329.5 95.2,327.8 99.5,326.4 103.0,327.4 105.6,329.5 107.7,332.1 108.7,334.7 109.1,337.3 109.4,333.9 109.9,329.5 111.7,324.3 114.3,320.8 117.8,318.2 121.2,316.5 124.0,315.6 127.4,313.0 130.8,310.8 134.3,308.7 137.8,307.3 142.1,306.9 144.7,306.9 147.3,306.2 149.9,307.6 152.0,306.9 151.3,305.2 148.5,305.6" fill="none" stroke="#9c9c9c" stroke-width="1.35" />
<polyline points="99.0,344.3 100.7,345.5 101.3,349.5 100.4,353.0 98.3,352.4 97.8,348.6 99.0,344.3" fill="none" stroke="#9c9c9c" stroke-width="1.35"/>
<polyline points="94.3,362.5 98.7,362.5 97.3,366.0 95.5,365.6 94.3,362.5" fill="none" stroke="#9c9c9c" stroke-width="1.0"/>
<polyline points="88.6,352.1 90.8,355.2 90.0,359.0 87.9,361.6 87.2,358.2 87.9,354.7 88.6,352.1" fill="none" stroke="#9c9c9c" stroke-width="1.0"/>
<circle cx="264.7" cy="315.6" r="1.9" fill="#9c9c9c"/>
<polyline points="134.2,388.0 135.2,398.3 136.1,408.0 136.9,420.2 137.9,430.0 138.5,438.4" fill="none" stroke="#f58038" stroke-width="1.0" />
<polyline points="136.2,430.8 138.4,438.2 139.0,434.6 140.6,429.6" fill="none" stroke="#f58038" stroke-width="0.9" />
<rect x="124" y="391" width="7" height="1" fill="#e0082c"/><rect x="127" y="388" width="1" height="7" fill="#e0082c"/>
<rect x="195" y="389" width="7" height="1" fill="#008000"/><rect x="198" y="386" width="1" height="7" fill="#008000"/>
</g>
<text x="127.30" y="383.90" font-family="'DejaVu Sans Mono', 'Liberation Mono', monospace" font-size="7.2" fill="#b8b8b8" text-anchor="middle" textLength="7.3" lengthAdjust="spacingAndGlyphs">16</text>
<text x="198.20" y="382.00" font-family="'DejaVu Sans Mono', 'Liberation Mono', monospace" font-size="7.2" fill="#b8b8b8" text-anchor="middle" textLength="7.3" lengthAdjust="spacingAndGlyphs">17</text>
<rect x="29" y="304" width="1" height="243" fill="#242424"/>
<rect x="267" y="304" width="1" height="243" fill="#242424"/>
<rect x="29" y="304" width="239" height="1" fill="#242424"/>
<rect x="29" y="546" width="239" height="1" fill="#242424"/>
<text x="27.90" y="504.50" font-family="'DejaVu Sans Mono', 'Liberation Mono', monospace" font-size="8.53" fill="#c8c8c8" text-anchor="middle" transform="rotate(-90 27.90 504.50)" >40</text>
<text x="27.90" y="416.50" font-family="'DejaVu Sans Mono', 'Liberation Mono', monospace" font-size="8.53" fill="#c8c8c8" text-anchor="middle" transform="rotate(-90 27.90 416.50)" >41</text>
<text x="27.90" y="328.50" font-family="'DejaVu Sans Mono', 'Liberation Mono', monospace" font-size="8.53" fill="#c8c8c8" text-anchor="middle" transform="rotate(-90 27.90 328.50)" >42</text>
<text x="75.50" y="556.40" font-family="'DejaVu Sans Mono', 'Liberation Mono', monospace" font-size="8.53" fill="#c8c8c8" text-anchor="middle" >-83</text>
<text x="142.50" y="556.40" font-family="'DejaVu Sans Mono', 'Liberation Mono', monospace" font-size="8.53" fill="#c8c8c8" text-anchor="middle" >-82</text>
<text x="209.50" y="556.40" font-family="'DejaVu Sans Mono', 'Liberation Mono', monospace" font-size="8.53" fill="#c8c8c8" text-anchor="middle" >-81</text>
<text x="15.60" y="426.30" font-family="'DejaVu Sans Mono', 'Liberation Mono', monospace" font-size="11.73" fill="#f0f0f0" text-anchor="middle" transform="rotate(-90 15.60 426.30)" >Latitude [deg]</text>
<text x="148.30" y="568.80" font-family="'DejaVu Sans Mono', 'Liberation Mono', monospace" font-size="11.73" fill="#f0f0f0" text-anchor="middle" >Longitude [deg]</text>
<text x="4.00" y="571.20" font-family="'DejaVu Sans Mono', 'Liberation Mono', monospace" font-size="5.5" fill="#262626" text-anchor="start" >rjw</text>
</g>
<g id="orbit">
<clipPath id="oclip"><rect x="281" y="305" width="262" height="252"/></clipPath>
<g clip-path="url(#oclip)">
<ellipse cx="407.4" cy="440.8" rx="138.1" ry="137.8" fill="none" stroke="#82824f" stroke-width="1.0" shape-rendering="crispEdges"/>
<ellipse cx="411.6" cy="437.4" rx="40.1" ry="39.9" fill="none" stroke="#82824f" stroke-width="1.0" shape-rendering="crispEdges"/>
<ellipse cx="414.4" cy="438.5" rx="27.7" ry="26.7" fill="none" stroke="#82824f" stroke-width="1.0" shape-rendering="crispEdges"/>
<ellipse cx="415.2" cy="439.0" rx="19.3" ry="18.6" fill="none" stroke="#82824f" stroke-width="1.0" shape-rendering="crispEdges"/>
<ellipse cx="414.4" cy="441.6" rx="9.5" ry="10.3" fill="none" stroke="#82824f" stroke-width="1.0" shape-rendering="crispEdges"/>
<ellipse cx="440.0" cy="464.5" rx="60.8" ry="48.0" transform="rotate(50.2 440.0 464.5)" fill="none" stroke="#4494a8" stroke-width="1.0" shape-rendering="crispEdges"/>
<circle cx="368.4" cy="308.2" r="2.5" fill="#8a8a72"/>
<circle cx="414.4" cy="450.6" r="2.5" fill="#8a8a72"/>
<circle cx="420.5" cy="456.5" r="2.5" fill="#8a8a72"/>
<circle cx="426.5" cy="474.4" r="2.5" fill="#8a8a72"/>
<circle cx="407.4" cy="414.6" r="2.6" fill="#0064ff"/>
<circle cx="414.4" cy="438.5" r="3.7" fill="#ffff00"/>
</g>
<rect x="280" y="304" width="1" height="254" fill="#242424"/>
<rect x="543" y="304" width="1" height="254" fill="#242424"/>
<rect x="280" y="304" width="264" height="1" fill="#242424"/>
<rect x="280" y="557" width="264" height="1" fill="#242424"/>
<text x="543.50" y="315.90" font-family="'Liberation Mono', monospace" font-size="13.33" fill="#f0f0f0" text-anchor="end" >T_j 3.30</text>
<text x="414.30" y="569.20" font-family="'DejaVu Sans Mono', 'Liberation Mono', monospace" font-size="11.73" fill="#f0f0f0" text-anchor="middle" >Orbital Position [AU]</text>
</g>
<g id="hres">
<rect x="599" y="303" width="1" height="105" fill="#242424"/>
<rect x="639" y="303" width="1" height="105" fill="#242424"/>
<rect x="680" y="303" width="1" height="105" fill="#242424"/>
<rect x="721" y="303" width="1" height="105" fill="#242424"/>
<rect x="762" y="303" width="1" height="105" fill="#242424"/>
<rect x="803" y="303" width="1" height="105" fill="#242424"/>
<rect x="843" y="303" width="1" height="105" fill="#242424"/>
<rect x="884" y="303" width="1" height="105" fill="#242424"/>
<rect x="925" y="303" width="1" height="105" fill="#242424"/>
<rect x="966" y="303" width="1" height="105" fill="#242424"/>
<rect x="1006" y="303" width="1" height="105" fill="#242424"/>
<rect x="586" y="305" width="434" height="1" fill="#242424"/>
<rect x="586" y="315" width="434" height="1" fill="#242424"/>
<rect x="582" y="324" width="438" height="1" fill="#242424"/>
<rect x="586" y="334" width="434" height="1" fill="#242424"/>
<rect x="586" y="343" width="434" height="1" fill="#242424"/>
<rect x="586" y="353" width="434" height="1" fill="#242424"/>
<rect x="582" y="362" width="438" height="1" fill="#242424"/>
<rect x="586" y="371" width="434" height="1" fill="#242424"/>
<rect x="586" y="381" width="434" height="1" fill="#242424"/>
<rect x="586" y="390" width="434" height="1" fill="#242424"/>
<rect x="586" y="400" width="434" height="1" fill="#242424"/>
<rect x="586" y="303" width="1" height="101" fill="#242424"/>
<rect x="1020" y="303" width="1" height="101" fill="#242424"/>
<rect x="586" y="303" width="435" height="1" fill="#242424"/>
<rect x="586" y="403" width="435" height="1" fill="#242424"/>
<rect x="587" y="362" width="433" height="1" fill="#f4f4f4"/>
<text x="599.50" y="417.60" font-family="'DejaVu Sans Mono', 'Liberation Mono', monospace" font-size="8.53" fill="#c8c8c8" text-anchor="middle" >-0</text>
<text x="639.50" y="417.60" font-family="'DejaVu Sans Mono', 'Liberation Mono', monospace" font-size="8.53" fill="#c8c8c8" text-anchor="middle" >8</text>
<text x="680.50" y="417.60" font-family="'DejaVu Sans Mono', 'Liberation Mono', monospace" font-size="8.53" fill="#c8c8c8" text-anchor="middle" >15</text>
<text x="721.50" y="417.60" font-family="'DejaVu Sans Mono', 'Liberation Mono', monospace" font-size="8.53" fill="#c8c8c8" text-anchor="middle" >23</text>
<text x="762.50" y="417.60" font-family="'DejaVu Sans Mono', 'Liberation Mono', monospace" font-size="8.53" fill="#c8c8c8" text-anchor="middle" >30</text>
<text x="803.50" y="417.60" font-family="'DejaVu Sans Mono', 'Liberation Mono', monospace" font-size="8.53" fill="#c8c8c8" text-anchor="middle" >38</text>
<text x="843.50" y="417.60" font-family="'DejaVu Sans Mono', 'Liberation Mono', monospace" font-size="8.53" fill="#c8c8c8" text-anchor="middle" >46</text>
<text x="884.50" y="417.60" font-family="'DejaVu Sans Mono', 'Liberation Mono', monospace" font-size="8.53" fill="#c8c8c8" text-anchor="middle" >53</text>
<text x="925.50" y="417.60" font-family="'DejaVu Sans Mono', 'Liberation Mono', monospace" font-size="8.53" fill="#c8c8c8" text-anchor="middle" >61</text>
<text x="966.50" y="417.60" font-family="'DejaVu Sans Mono', 'Liberation Mono', monospace" font-size="8.53" fill="#c8c8c8" text-anchor="middle" >68</text>
<text x="1006.50" y="417.60" font-family="'DejaVu Sans Mono', 'Liberation Mono', monospace" font-size="8.53" fill="#c8c8c8" text-anchor="middle" >76</text>
<text x="580.40" y="324.50" font-family="'DejaVu Sans Mono', 'Liberation Mono', monospace" font-size="8.53" fill="#c8c8c8" text-anchor="middle" transform="rotate(-90 580.40 324.50)" >0.32</text>
<text x="580.40" y="362.50" font-family="'DejaVu Sans Mono', 'Liberation Mono', monospace" font-size="8.53" fill="#c8c8c8" text-anchor="middle" transform="rotate(-90 580.40 362.50)" >0.00</text>
<text x="568.50" y="352.20" font-family="'DejaVu Sans Mono', 'Liberation Mono', monospace" font-size="11.73" fill="#f0f0f0" text-anchor="middle" transform="rotate(-90 568.50 352.20)" >Horz Res [km]</text>
<text x="804.30" y="431.30" font-family="'DejaVu Sans Mono', 'Liberation Mono', monospace" font-size="11.73" fill="#f0f0f0" text-anchor="middle" >Length Along Trail [km]</text>
<rect x="702" y="362" width="1" height="5" fill="#9a4e2e"/>
<rect x="716" y="362" width="1" height="1" fill="#9a4e2e"/>
<rect x="718" y="362" width="1" height="4" fill="#9a4e2e"/>
<rect x="721" y="362" width="1" height="3" fill="#9a4e2e"/>
<rect x="724" y="361" width="1" height="1" fill="#9a4e2e"/>
<rect x="728" y="361" width="1" height="1" fill="#9a4e2e"/>
<rect x="731" y="361" width="1" height="1" fill="#9a4e2e"/>
<rect x="733" y="362" width="1" height="2" fill="#9a4e2e"/>
<rect x="738" y="362" width="1" height="1" fill="#9a4e2e"/>
<rect x="741" y="362" width="1" height="4" fill="#9a4e2e"/>
<rect x="745" y="362" width="1" height="4" fill="#9a4e2e"/>
<rect x="748" y="362" width="1" height="7" fill="#9a4e2e"/>
<rect x="751" y="362" width="1" height="6" fill="#9a4e2e"/>
<rect x="754" y="362" width="1" height="1" fill="#9a4e2e"/>
<rect x="757" y="362" width="1" height="1" fill="#9a4e2e"/>
<rect x="761" y="362" width="1" height="1" fill="#9a4e2e"/>
<rect x="764" y="362" width="1" height="4" fill="#9a4e2e"/>
<rect x="768" y="362" width="1" height="3" fill="#9a4e2e"/>
<rect x="770" y="361" width="1" height="1" fill="#9a4e2e"/>
<rect x="773" y="362" width="1" height="5" fill="#9a4e2e"/>
<rect x="776" y="362" width="1" height="1" fill="#9a4e2e"/>
<rect x="780" y="362" width="1" height="3" fill="#9a4e2e"/>
<rect x="783" y="362" width="1" height="6" fill="#9a4e2e"/>
<rect x="787" y="362" width="1" height="1" fill="#9a4e2e"/>
<rect x="791" y="362" width="1" height="3" fill="#9a4e2e"/>
<rect x="795" y="362" width="1" height="5" fill="#9a4e2e"/>
<rect x="798" y="362" width="1" height="7" fill="#9a4e2e"/>
<rect x="801" y="362" width="1" height="2" fill="#9a4e2e"/>
<rect x="805" y="362" width="1" height="1" fill="#9a4e2e"/>
<rect x="808" y="361" width="1" height="1" fill="#9a4e2e"/>
<rect x="812" y="362" width="1" height="5" fill="#9a4e2e"/>
<rect x="816" y="362" width="1" height="6" fill="#9a4e2e"/>
<rect x="819" y="362" width="1" height="5" fill="#9a4e2e"/>
<rect x="823" y="362" width="1" height="4" fill="#9a4e2e"/>
<rect x="826" y="362" width="1" height="6" fill="#9a4e2e"/>
<rect x="830" y="362" width="1" height="3" fill="#9a4e2e"/>
<rect x="834" y="361" width="1" height="1" fill="#9a4e2e"/>
<rect x="838" y="362" width="1" height="4" fill="#9a4e2e"/>
<rect x="843" y="362" width="1" height="6" fill="#9a4e2e"/>
<rect x="846" y="362" width="1" height="2" fill="#9a4e2e"/>
<rect x="850" y="361" width="1" height="1" fill="#9a4e2e"/>
<rect x="853" y="362" width="1" height="1" fill="#9a4e2e"/>
<rect x="856" y="361" width="1" height="1" fill="#9a4e2e"/>
<rect x="860" y="362" width="1" height="1" fill="#9a4e2e"/>
<rect x="863" y="362" width="1" height="2" fill="#9a4e2e"/>
<rect x="867" y="361" width="1" height="1" fill="#9a4e2e"/>
<rect x="871" y="362" width="1" height="3" fill="#9a4e2e"/>
<rect x="875" y="362" width="1" height="6" fill="#9a4e2e"/>
<rect x="879" y="362" width="1" height="1" fill="#9a4e2e"/>
<rect x="883" y="362" width="1" height="2" fill="#9a4e2e"/>
<rect x="887" y="362" width="1" height="7" fill="#9a4e2e"/>
<rect x="890" y="362" width="1" height="1" fill="#9a4e2e"/>
<rect x="893" y="362" width="1" height="1" fill="#9a4e2e"/>
<rect x="896" y="362" width="1" height="4" fill="#9a4e2e"/>
<rect x="899" y="361" width="1" height="1" fill="#9a4e2e"/>
<rect x="902" y="362" width="1" height="2" fill="#9a4e2e"/>
<rect x="906" y="362" width="1" height="7" fill="#9a4e2e"/>
<rect x="910" y="362" width="1" height="3" fill="#9a4e2e"/>
<rect x="914" y="362" width="1" height="5" fill="#9a4e2e"/>
<rect x="916" y="362" width="1" height="7" fill="#9a4e2e"/>
<rect x="923" y="362" width="1" height="4" fill="#9a4e2e"/>
<rect x="927" y="362" width="1" height="4" fill="#9a4e2e"/>
<rect x="929" y="362" width="1" height="1" fill="#9a4e2e"/>
<rect x="932" y="358" width="1" height="4" fill="#9a4e2e"/>
<rect x="935" y="362" width="1" height="3" fill="#9a4e2e"/>
<rect x="939" y="362" width="1" height="4" fill="#9a4e2e"/>
<rect x="942" y="362" width="1" height="2" fill="#9a4e2e"/>
<rect x="945" y="362" width="1" height="1" fill="#9a4e2e"/>
<rect x="948" y="358" width="1" height="4" fill="#9a4e2e"/>
<rect x="951" y="361" width="1" height="1" fill="#9a4e2e"/>
<rect x="954" y="362" width="1" height="2" fill="#9a4e2e"/>
<rect x="959" y="362" width="1" height="3" fill="#9a4e2e"/>
<rect x="964" y="362" width="1" height="3" fill="#9a4e2e"/>
<rect x="966" y="361" width="1" height="1" fill="#9a4e2e"/>
<rect x="968" y="357" width="1" height="5" fill="#9a4e2e"/>
<rect x="971" y="359" width="1" height="3" fill="#9a4e2e"/>
<rect x="976" y="362" width="1" height="3" fill="#9a4e2e"/>
<rect x="981" y="359" width="1" height="3" fill="#9a4e2e"/>
<rect x="985" y="362" width="1" height="3" fill="#9a4e2e"/>
<rect x="986" y="359" width="1" height="3" fill="#9a4e2e"/>
<rect x="988" y="352" width="1" height="10" fill="#9a4e2e"/>
<rect x="990" y="359" width="1" height="3" fill="#9a4e2e"/>
<rect x="992" y="356" width="1" height="6" fill="#9a4e2e"/>
<rect x="994" y="352" width="1" height="10" fill="#9a4e2e"/>
<rect x="997" y="359" width="1" height="3" fill="#9a4e2e"/>
<rect x="1000" y="356" width="1" height="6" fill="#9a4e2e"/>
<rect x="1003" y="352" width="1" height="10" fill="#9a4e2e"/>
<rect x="1006" y="359" width="1" height="3" fill="#9a4e2e"/>
<rect x="700" y="365" width="5" height="5" fill="#ff7f50"/>
<rect x="714" y="361" width="5" height="5" fill="#ff7f50"/>
<rect x="716" y="364" width="5" height="5" fill="#ff7f50"/>
<rect x="719" y="363" width="5" height="5" fill="#ff7f50"/>
<rect x="722" y="359" width="5" height="5" fill="#ff7f50"/>
<rect x="726" y="359" width="5" height="5" fill="#ff7f50"/>
<rect x="729" y="359" width="5" height="5" fill="#ff7f50"/>
<rect x="731" y="362" width="5" height="5" fill="#ff7f50"/>
<rect x="736" y="360" width="5" height="5" fill="#ff7f50"/>
<rect x="739" y="364" width="5" height="5" fill="#ff7f50"/>
<rect x="743" y="364" width="5" height="5" fill="#ff7f50"/>
<rect x="746" y="367" width="5" height="5" fill="#ff7f50"/>
<rect x="749" y="366" width="5" height="5" fill="#ff7f50"/>
<rect x="752" y="360" width="5" height="5" fill="#ff7f50"/>
<rect x="755" y="361" width="5" height="5" fill="#ff7f50"/>
<rect x="759" y="360" width="5" height="5" fill="#ff7f50"/>
<rect x="762" y="364" width="5" height="5" fill="#ff7f50"/>
<rect x="766" y="363" width="5" height="5" fill="#ff7f50"/>
<rect x="768" y="359" width="5" height="5" fill="#ff7f50"/>
<rect x="771" y="365" width="5" height="5" fill="#ff7f50"/>
<rect x="774" y="361" width="5" height="5" fill="#ff7f50"/>
<rect x="778" y="363" width="5" height="5" fill="#ff7f50"/>
<rect x="781" y="366" width="5" height="5" fill="#ff7f50"/>
<rect x="785" y="361" width="5" height="5" fill="#ff7f50"/>
<rect x="789" y="363" width="5" height="5" fill="#ff7f50"/>
<rect x="793" y="365" width="5" height="5" fill="#ff7f50"/>
<rect x="796" y="367" width="5" height="5" fill="#ff7f50"/>
<rect x="799" y="362" width="5" height="5" fill="#ff7f50"/>
<rect x="803" y="360" width="5" height="5" fill="#ff7f50"/>
<rect x="806" y="359" width="5" height="5" fill="#ff7f50"/>
<rect x="810" y="365" width="5" height="5" fill="#ff7f50"/>
<rect x="814" y="366" width="5" height="5" fill="#ff7f50"/>
<rect x="817" y="365" width="5" height="5" fill="#ff7f50"/>
<rect x="821" y="364" width="5" height="5" fill="#ff7f50"/>
<rect x="824" y="366" width="5" height="5" fill="#ff7f50"/>
<rect x="828" y="363" width="5" height="5" fill="#ff7f50"/>
<rect x="832" y="359" width="5" height="5" fill="#ff7f50"/>
<rect x="836" y="364" width="5" height="5" fill="#ff7f50"/>
<rect x="841" y="366" width="5" height="5" fill="#ff7f50"/>
<rect x="844" y="362" width="5" height="5" fill="#ff7f50"/>
<rect x="848" y="359" width="5" height="5" fill="#ff7f50"/>
<rect x="851" y="360" width="5" height="5" fill="#ff7f50"/>
<rect x="854" y="359" width="5" height="5" fill="#ff7f50"/>
<rect x="858" y="360" width="5" height="5" fill="#ff7f50"/>
<rect x="861" y="362" width="5" height="5" fill="#ff7f50"/>
<rect x="865" y="359" width="5" height="5" fill="#ff7f50"/>
<rect x="869" y="363" width="5" height="5" fill="#ff7f50"/>
<rect x="873" y="366" width="5" height="5" fill="#ff7f50"/>
<rect x="877" y="361" width="5" height="5" fill="#ff7f50"/>
<rect x="881" y="362" width="5" height="5" fill="#ff7f50"/>
<rect x="885" y="367" width="5" height="5" fill="#ff7f50"/>
<rect x="888" y="360" width="5" height="5" fill="#ff7f50"/>
<rect x="891" y="361" width="5" height="5" fill="#ff7f50"/>
<rect x="894" y="364" width="5" height="5" fill="#ff7f50"/>
<rect x="897" y="359" width="5" height="5" fill="#ff7f50"/>
<rect x="900" y="362" width="5" height="5" fill="#ff7f50"/>
<rect x="904" y="367" width="5" height="5" fill="#ff7f50"/>
<rect x="908" y="363" width="5" height="5" fill="#ff7f50"/>
<rect x="912" y="365" width="5" height="5" fill="#ff7f50"/>
<rect x="914" y="367" width="5" height="5" fill="#ff7f50"/>
<rect x="921" y="364" width="5" height="5" fill="#ff7f50"/>
<rect x="925" y="364" width="5" height="5" fill="#ff7f50"/>
<rect x="927" y="360" width="5" height="5" fill="#ff7f50"/>
<rect x="930" y="356" width="5" height="5" fill="#ff7f50"/>
<rect x="933" y="363" width="5" height="5" fill="#ff7f50"/>
<rect x="937" y="364" width="5" height="5" fill="#ff7f50"/>
<rect x="940" y="362" width="5" height="5" fill="#ff7f50"/>
<rect x="943" y="360" width="5" height="5" fill="#ff7f50"/>
<rect x="946" y="356" width="5" height="5" fill="#ff7f50"/>
<rect x="949" y="359" width="5" height="5" fill="#ff7f50"/>
<rect x="952" y="362" width="5" height="5" fill="#ff7f50"/>
<rect x="957" y="363" width="5" height="5" fill="#ff7f50"/>
<rect x="962" y="363" width="5" height="5" fill="#ff7f50"/>
<rect x="964" y="359" width="5" height="5" fill="#ff7f50"/>
<rect x="966" y="355" width="5" height="5" fill="#ff7f50"/>
<rect x="969" y="357" width="5" height="5" fill="#ff7f50"/>
<rect x="974" y="363" width="5" height="5" fill="#ff7f50"/>
<rect x="979" y="357" width="5" height="5" fill="#ff7f50"/>
<rect x="983" y="363" width="5" height="5" fill="#ff7f50"/>
<rect x="984" y="357" width="5" height="5" fill="#ff7f50"/>
<rect x="986" y="350" width="5" height="5" fill="#ff7f50"/>
<rect x="988" y="357" width="5" height="5" fill="#ff7f50"/>
<rect x="990" y="354" width="5" height="5" fill="#ff7f50"/>
<rect x="992" y="350" width="5" height="5" fill="#ff7f50"/>
<rect x="995" y="357" width="5" height="5" fill="#ff7f50"/>
<rect x="998" y="354" width="5" height="5" fill="#ff7f50"/>
<rect x="1001" y="350" width="5" height="5" fill="#ff7f50"/>
<rect x="1004" y="357" width="5" height="5" fill="#ff7f50"/>
<rect x="651" y="323" width="1" height="39" fill="#004f00"/>
<rect x="656" y="315" width="1" height="47" fill="#004f00"/>
<rect x="660" y="339" width="1" height="23" fill="#004f00"/>
<rect x="663" y="336" width="1" height="26" fill="#004f00"/>
<rect x="665" y="332" width="1" height="30" fill="#004f00"/>
<rect x="670" y="321" width="1" height="41" fill="#004f00"/>
<rect x="672" y="318" width="1" height="44" fill="#004f00"/>
<rect x="679" y="339" width="1" height="23" fill="#004f00"/>
<rect x="682" y="336" width="1" height="26" fill="#004f00"/>
<rect x="686" y="324" width="1" height="38" fill="#004f00"/>
<rect x="689" y="319" width="1" height="43" fill="#004f00"/>
<rect x="693" y="354" width="1" height="8" fill="#004f00"/>
<rect x="697" y="343" width="1" height="19" fill="#004f00"/>
<rect x="698" y="340" width="1" height="22" fill="#004f00"/>
<rect x="700" y="344" width="1" height="18" fill="#004f00"/>
<rect x="703" y="334" width="1" height="28" fill="#004f00"/>
<rect x="707" y="328" width="1" height="34" fill="#004f00"/>
<rect x="712" y="357" width="1" height="5" fill="#004f00"/>
<rect x="716" y="353" width="1" height="9" fill="#004f00"/>
<rect x="719" y="349" width="1" height="13" fill="#004f00"/>
<rect x="724" y="338" width="1" height="24" fill="#004f00"/>
<rect x="726" y="336" width="1" height="26" fill="#004f00"/>
<rect x="729" y="354" width="1" height="8" fill="#004f00"/>
<rect x="734" y="359" width="1" height="3" fill="#004f00"/>
<rect x="738" y="354" width="1" height="8" fill="#004f00"/>
<rect x="739" y="352" width="1" height="10" fill="#004f00"/>
<rect x="744" y="343" width="1" height="19" fill="#004f00"/>
<rect x="746" y="343" width="1" height="19" fill="#004f00"/>
<rect x="749" y="323" width="1" height="39" fill="#004f00"/>
<rect x="751" y="362" width="1" height="4" fill="#004f00"/>
<rect x="757" y="361" width="1" height="1" fill="#004f00"/>
<rect x="758" y="342" width="1" height="20" fill="#004f00"/>
<rect x="762" y="359" width="1" height="3" fill="#004f00"/>
<rect x="763" y="358" width="1" height="4" fill="#004f00"/>
<rect x="766" y="331" width="1" height="31" fill="#004f00"/>
<rect x="767" y="357" width="1" height="5" fill="#004f00"/>
<rect x="771" y="356" width="1" height="6" fill="#004f00"/>
<rect x="772" y="355" width="1" height="7" fill="#004f00"/>
<rect x="776" y="330" width="1" height="32" fill="#004f00"/>
<rect x="778" y="349" width="1" height="13" fill="#004f00"/>
<rect x="782" y="351" width="1" height="11" fill="#004f00"/>
<rect x="784" y="351" width="1" height="11" fill="#004f00"/>
<rect x="789" y="328" width="1" height="34" fill="#004f00"/>
<rect x="794" y="324" width="1" height="38" fill="#004f00"/>
<rect x="799" y="361" width="1" height="1" fill="#004f00"/>
<rect x="804" y="361" width="1" height="1" fill="#004f00"/>
<rect x="809" y="362" width="1" height="1" fill="#004f00"/>
<rect x="811" y="340" width="1" height="22" fill="#004f00"/>
<rect x="815" y="361" width="1" height="1" fill="#004f00"/>
<rect x="824" y="361" width="1" height="1" fill="#004f00"/>
<rect x="824" y="362" width="1" height="20" fill="#004f00"/>
<rect x="828" y="361" width="1" height="1" fill="#004f00"/>
<rect x="831" y="362" width="1" height="18" fill="#004f00"/>
<rect x="840" y="362" width="1" height="14" fill="#004f00"/>
<rect x="843" y="362" width="1" height="11" fill="#004f00"/>
<rect x="849" y="362" width="1" height="18" fill="#004f00"/>
<rect x="850" y="362" width="1" height="14" fill="#004f00"/>
<rect x="852" y="362" width="1" height="11" fill="#004f00"/>
<rect x="859" y="360" width="1" height="2" fill="#004f00"/>
<rect x="859" y="362" width="1" height="14" fill="#004f00"/>
<rect x="868" y="346" width="1" height="16" fill="#004f00"/>
<rect x="869" y="358" width="1" height="4" fill="#004f00"/>
<rect x="878" y="362" width="1" height="3" fill="#004f00"/>
<rect x="881" y="347" width="1" height="15" fill="#004f00"/>
<rect x="890" y="350" width="1" height="12" fill="#004f00"/>
<rect x="892" y="316" width="1" height="46" fill="#004f00"/>
<rect x="894" y="314" width="1" height="48" fill="#004f00"/>
<rect x="900" y="362" width="1" height="15" fill="#004f00"/>
<rect x="904" y="357" width="1" height="5" fill="#004f00"/>
<rect x="911" y="326" width="1" height="36" fill="#004f00"/>
<rect x="914" y="350" width="1" height="12" fill="#004f00"/>
<rect x="918" y="362" width="1" height="2" fill="#004f00"/>
<rect x="920" y="362" width="1" height="5" fill="#004f00"/>
<rect x="925" y="353" width="1" height="9" fill="#004f00"/>
<rect x="927" y="359" width="1" height="3" fill="#004f00"/>
<rect x="930" y="307" width="1" height="55" fill="#004f00"/>
<rect x="930" y="319" width="1" height="43" fill="#004f00"/>
<rect x="935" y="335" width="1" height="27" fill="#004f00"/>
<rect x="938" y="338" width="1" height="24" fill="#004f00"/>
<rect x="942" y="325" width="1" height="37" fill="#004f00"/>
<rect x="942" y="347" width="1" height="15" fill="#004f00"/>
<rect x="950" y="336" width="1" height="26" fill="#004f00"/>
<rect x="952" y="353" width="1" height="9" fill="#004f00"/>
<rect x="956" y="356" width="1" height="6" fill="#004f00"/>
<rect x="959" y="344" width="1" height="18" fill="#004f00"/>
<rect x="960" y="337" width="1" height="25" fill="#004f00"/>
<rect x="963" y="340" width="1" height="22" fill="#004f00"/>
<rect x="965" y="327" width="1" height="35" fill="#004f00"/>
<rect x="970" y="337" width="1" height="25" fill="#004f00"/>
<rect x="649" y="321" width="5" height="5" fill="#008000"/>
<rect x="654" y="313" width="5" height="5" fill="#008000"/>
<rect x="658" y="337" width="5" height="5" fill="#008000"/>
<rect x="661" y="334" width="5" height="5" fill="#008000"/>
<rect x="663" y="330" width="5" height="5" fill="#008000"/>
<rect x="668" y="319" width="5" height="5" fill="#008000"/>
<rect x="670" y="316" width="5" height="5" fill="#008000"/>
<rect x="677" y="337" width="5" height="5" fill="#008000"/>
<rect x="680" y="334" width="5" height="5" fill="#008000"/>
<rect x="684" y="322" width="5" height="5" fill="#008000"/>
<rect x="687" y="317" width="5" height="5" fill="#008000"/>
<rect x="691" y="352" width="5" height="5" fill="#008000"/>
<rect x="695" y="341" width="5" height="5" fill="#008000"/>
<rect x="696" y="338" width="5" height="5" fill="#008000"/>
<rect x="698" y="342" width="5" height="5" fill="#008000"/>
<rect x="701" y="332" width="5" height="5" fill="#008000"/>
<rect x="705" y="326" width="5" height="5" fill="#008000"/>
<rect x="710" y="355" width="5" height="5" fill="#008000"/>
<rect x="714" y="351" width="5" height="5" fill="#008000"/>
<rect x="717" y="347" width="5" height="5" fill="#008000"/>
<rect x="722" y="336" width="5" height="5" fill="#008000"/>
<rect x="724" y="334" width="5" height="5" fill="#008000"/>
<rect x="727" y="352" width="5" height="5" fill="#008000"/>
<rect x="732" y="357" width="5" height="5" fill="#008000"/>
<rect x="736" y="352" width="5" height="5" fill="#008000"/>
<rect x="737" y="350" width="5" height="5" fill="#008000"/>
<rect x="742" y="341" width="5" height="5" fill="#008000"/>
<rect x="744" y="341" width="5" height="5" fill="#008000"/>
<rect x="747" y="321" width="5" height="5" fill="#008000"/>
<rect x="749" y="364" width="5" height="5" fill="#008000"/>
<rect x="755" y="359" width="5" height="5" fill="#008000"/>
<rect x="756" y="340" width="5" height="5" fill="#008000"/>
<rect x="760" y="357" width="5" height="5" fill="#008000"/>
<rect x="761" y="356" width="5" height="5" fill="#008000"/>
<rect x="764" y="329" width="5" height="5" fill="#008000"/>
<rect x="765" y="355" width="5" height="5" fill="#008000"/>
<rect x="769" y="354" width="5" height="5" fill="#008000"/>
<rect x="770" y="353" width="5" height="5" fill="#008000"/>
<rect x="774" y="328" width="5" height="5" fill="#008000"/>
<rect x="776" y="347" width="5" height="5" fill="#008000"/>
<rect x="780" y="349" width="5" height="5" fill="#008000"/>
<rect x="782" y="349" width="5" height="5" fill="#008000"/>
<rect x="787" y="326" width="5" height="5" fill="#008000"/>
<rect x="792" y="322" width="5" height="5" fill="#008000"/>
<rect x="797" y="359" width="5" height="5" fill="#008000"/>
<rect x="802" y="359" width="5" height="5" fill="#008000"/>
<rect x="807" y="360" width="5" height="5" fill="#008000"/>
<rect x="809" y="338" width="5" height="5" fill="#008000"/>
<rect x="813" y="359" width="5" height="5" fill="#008000"/>
<rect x="822" y="359" width="5" height="5" fill="#008000"/>
<rect x="822" y="380" width="5" height="5" fill="#008000"/>
<rect x="826" y="359" width="5" height="5" fill="#008000"/>
<rect x="829" y="378" width="5" height="5" fill="#008000"/>
<rect x="838" y="374" width="5" height="5" fill="#008000"/>
<rect x="841" y="371" width="5" height="5" fill="#008000"/>
<rect x="847" y="378" width="5" height="5" fill="#008000"/>
<rect x="848" y="374" width="5" height="5" fill="#008000"/>
<rect x="850" y="371" width="5" height="5" fill="#008000"/>
<rect x="857" y="358" width="5" height="5" fill="#008000"/>
<rect x="857" y="374" width="5" height="5" fill="#008000"/>
<rect x="866" y="344" width="5" height="5" fill="#008000"/>
<rect x="867" y="356" width="5" height="5" fill="#008000"/>
<rect x="876" y="363" width="5" height="5" fill="#008000"/>
<rect x="879" y="345" width="5" height="5" fill="#008000"/>
<rect x="888" y="348" width="5" height="5" fill="#008000"/>
<rect x="890" y="314" width="5" height="5" fill="#008000"/>
<rect x="892" y="312" width="5" height="5" fill="#008000"/>
<rect x="898" y="375" width="5" height="5" fill="#008000"/>
<rect x="902" y="355" width="5" height="5" fill="#008000"/>
<rect x="909" y="324" width="5" height="5" fill="#008000"/>
<rect x="912" y="348" width="5" height="5" fill="#008000"/>
<rect x="916" y="362" width="5" height="5" fill="#008000"/>
<rect x="918" y="365" width="5" height="5" fill="#008000"/>
<rect x="923" y="351" width="5" height="5" fill="#008000"/>
<rect x="925" y="357" width="5" height="5" fill="#008000"/>
<rect x="928" y="305" width="5" height="5" fill="#008000"/>
<rect x="928" y="317" width="5" height="5" fill="#008000"/>
<rect x="933" y="333" width="5" height="5" fill="#008000"/>
<rect x="936" y="336" width="5" height="5" fill="#008000"/>
<rect x="940" y="323" width="5" height="5" fill="#008000"/>
<rect x="940" y="345" width="5" height="5" fill="#008000"/>
<rect x="948" y="334" width="5" height="5" fill="#008000"/>
<rect x="950" y="351" width="5" height="5" fill="#008000"/>
<rect x="954" y="354" width="5" height="5" fill="#008000"/>
<rect x="957" y="342" width="5" height="5" fill="#008000"/>
<rect x="958" y="335" width="5" height="5" fill="#008000"/>
<rect x="961" y="338" width="5" height="5" fill="#008000"/>
<rect x="963" y="325" width="5" height="5" fill="#008000"/>
<rect x="968" y="335" width="5" height="5" fill="#008000"/>
<rect x="599" y="362" width="1" height="23" fill="#780a1e"/>
<rect x="602" y="362" width="1" height="26" fill="#780a1e"/>
<rect x="605" y="335" width="1" height="27" fill="#780a1e"/>
<rect x="610" y="358" width="1" height="4" fill="#780a1e"/>
<rect x="610" y="362" width="1" height="1" fill="#780a1e"/>
<rect x="615" y="362" width="1" height="11" fill="#780a1e"/>
<rect x="618" y="362" width="1" height="6" fill="#780a1e"/>
<rect x="621" y="362" width="1" height="27" fill="#780a1e"/>
<rect x="626" y="349" width="1" height="13" fill="#780a1e"/>
<rect x="627" y="357" width="1" height="5" fill="#780a1e"/>
<rect x="631" y="362" width="1" height="2" fill="#780a1e"/>
<rect x="634" y="362" width="1" height="6" fill="#780a1e"/>
<rect x="636" y="362" width="1" height="13" fill="#780a1e"/>
<rect x="639" y="362" width="1" height="18" fill="#780a1e"/>
<rect x="642" y="345" width="1" height="17" fill="#780a1e"/>
<rect x="647" y="354" width="1" height="8" fill="#780a1e"/>
<rect x="651" y="361" width="1" height="1" fill="#780a1e"/>
<rect x="654" y="362" width="1" height="9" fill="#780a1e"/>
<rect x="655" y="362" width="1" height="6" fill="#780a1e"/>
<rect x="661" y="362" width="1" height="29" fill="#780a1e"/>
<rect x="662" y="343" width="1" height="19" fill="#780a1e"/>
<rect x="665" y="356" width="1" height="6" fill="#780a1e"/>
<rect x="669" y="362" width="1" height="30" fill="#780a1e"/>
<rect x="674" y="362" width="1" height="5" fill="#780a1e"/>
<rect x="675" y="343" width="1" height="19" fill="#780a1e"/>
<rect x="679" y="343" width="1" height="19" fill="#780a1e"/>
<rect x="681" y="346" width="1" height="16" fill="#780a1e"/>
<rect x="686" y="362" width="1" height="25" fill="#780a1e"/>
<rect x="689" y="362" width="1" height="29" fill="#780a1e"/>
<rect x="691" y="362" width="1" height="25" fill="#780a1e"/>
<rect x="695" y="362" width="1" height="36" fill="#780a1e"/>
<rect x="698" y="362" width="1" height="38" fill="#780a1e"/>
<rect x="699" y="362" width="1" height="10" fill="#780a1e"/>
<rect x="706" y="362" width="1" height="22" fill="#780a1e"/>
<rect x="709" y="362" width="1" height="5" fill="#780a1e"/>
<rect x="711" y="362" width="1" height="25" fill="#780a1e"/>
<rect x="716" y="362" width="1" height="35" fill="#780a1e"/>
<rect x="718" y="362" width="1" height="34" fill="#780a1e"/>
<rect x="721" y="362" width="1" height="30" fill="#780a1e"/>
<rect x="724" y="362" width="1" height="12" fill="#780a1e"/>
<rect x="729" y="362" width="1" height="22" fill="#780a1e"/>
<rect x="733" y="362" width="1" height="23" fill="#780a1e"/>
<rect x="737" y="362" width="1" height="14" fill="#780a1e"/>
<rect x="740" y="362" width="1" height="14" fill="#780a1e"/>
<rect x="742" y="362" width="1" height="24" fill="#780a1e"/>
<rect x="745" y="338" width="1" height="24" fill="#780a1e"/>
<rect x="745" y="362" width="1" height="21" fill="#780a1e"/>
<rect x="754" y="362" width="1" height="15" fill="#780a1e"/>
<rect x="757" y="362" width="1" height="10" fill="#780a1e"/>
<rect x="762" y="362" width="1" height="2" fill="#780a1e"/>
<rect x="763" y="362" width="1" height="27" fill="#780a1e"/>
<rect x="770" y="362" width="1" height="9" fill="#780a1e"/>
<rect x="771" y="362" width="1" height="22" fill="#780a1e"/>
<rect x="776" y="362" width="1" height="19" fill="#780a1e"/>
<rect x="779" y="362" width="1" height="25" fill="#780a1e"/>
<rect x="782" y="362" width="1" height="33" fill="#780a1e"/>
<rect x="784" y="362" width="1" height="33" fill="#780a1e"/>
<rect x="785" y="362" width="1" height="16" fill="#780a1e"/>
<rect x="789" y="362" width="1" height="18" fill="#780a1e"/>
<rect x="795" y="362" width="1" height="26" fill="#780a1e"/>
<rect x="798" y="341" width="1" height="21" fill="#780a1e"/>
<rect x="800" y="362" width="1" height="23" fill="#780a1e"/>
<rect x="804" y="345" width="1" height="17" fill="#780a1e"/>
<rect x="806" y="335" width="1" height="27" fill="#780a1e"/>
<rect x="812" y="342" width="1" height="20" fill="#780a1e"/>
<rect x="815" y="320" width="1" height="42" fill="#780a1e"/>
<rect x="815" y="339" width="1" height="23" fill="#780a1e"/>
<rect x="821" y="352" width="1" height="10" fill="#780a1e"/>
<rect x="827" y="326" width="1" height="36" fill="#780a1e"/>
<rect x="830" y="362" width="1" height="20" fill="#780a1e"/>
<rect x="833" y="362" width="1" height="26" fill="#780a1e"/>
<rect x="835" y="362" width="1" height="29" fill="#780a1e"/>
<rect x="837" y="362" width="1" height="30" fill="#780a1e"/>
<rect x="838" y="362" width="1" height="1" fill="#780a1e"/>
<rect x="840" y="362" width="1" height="4" fill="#780a1e"/>
<rect x="850" y="362" width="1" height="15" fill="#780a1e"/>
<rect x="855" y="362" width="1" height="24" fill="#780a1e"/>
<rect x="856" y="362" width="1" height="29" fill="#780a1e"/>
<rect x="864" y="362" width="1" height="20" fill="#780a1e"/>
<rect x="867" y="362" width="1" height="18" fill="#780a1e"/>
<rect x="869" y="362" width="1" height="23" fill="#780a1e"/>
<rect x="873" y="362" width="1" height="29" fill="#780a1e"/>
<rect x="873" y="362" width="1" height="20" fill="#780a1e"/>
<rect x="876" y="362" width="1" height="26" fill="#780a1e"/>
<rect x="876" y="360" width="1" height="2" fill="#780a1e"/>
<rect x="886" y="362" width="1" height="11" fill="#780a1e"/>
<rect x="888" y="362" width="1" height="14" fill="#780a1e"/>
<rect x="892" y="362" width="1" height="24" fill="#780a1e"/>
<rect x="894" y="362" width="1" height="19" fill="#780a1e"/>
<rect x="896" y="362" width="1" height="21" fill="#780a1e"/>
<rect x="897" y="362" width="1" height="25" fill="#780a1e"/>
<rect x="905" y="362" width="1" height="14" fill="#780a1e"/>
<rect x="909" y="362" width="1" height="20" fill="#780a1e"/>
<rect x="912" y="362" width="1" height="22" fill="#780a1e"/>
<rect x="915" y="362" width="1" height="21" fill="#780a1e"/>
<rect x="597" y="383" width="5" height="5" fill="#e0082c"/>
<rect x="600" y="386" width="5" height="5" fill="#e0082c"/>
<rect x="603" y="333" width="5" height="5" fill="#e0082c"/>
<rect x="608" y="356" width="5" height="5" fill="#e0082c"/>
<rect x="608" y="360" width="5" height="5" fill="#e0082c"/>
<rect x="613" y="371" width="5" height="5" fill="#e0082c"/>
<rect x="616" y="366" width="5" height="5" fill="#e0082c"/>
<rect x="619" y="387" width="5" height="5" fill="#e0082c"/>
<rect x="624" y="347" width="5" height="5" fill="#e0082c"/>
<rect x="625" y="355" width="5" height="5" fill="#e0082c"/>
<rect x="629" y="362" width="5" height="5" fill="#e0082c"/>
<rect x="632" y="366" width="5" height="5" fill="#e0082c"/>
<rect x="634" y="373" width="5" height="5" fill="#e0082c"/>
<rect x="637" y="378" width="5" height="5" fill="#e0082c"/>
<rect x="640" y="343" width="5" height="5" fill="#e0082c"/>
<rect x="645" y="352" width="5" height="5" fill="#e0082c"/>
<rect x="649" y="359" width="5" height="5" fill="#e0082c"/>
<rect x="652" y="369" width="5" height="5" fill="#e0082c"/>
<rect x="653" y="366" width="5" height="5" fill="#e0082c"/>
<rect x="659" y="389" width="5" height="5" fill="#e0082c"/>
<rect x="660" y="341" width="5" height="5" fill="#e0082c"/>
<rect x="663" y="354" width="5" height="5" fill="#e0082c"/>
<rect x="667" y="390" width="5" height="5" fill="#e0082c"/>
<rect x="672" y="365" width="5" height="5" fill="#e0082c"/>
<rect x="673" y="341" width="5" height="5" fill="#e0082c"/>
<rect x="677" y="341" width="5" height="5" fill="#e0082c"/>
<rect x="679" y="344" width="5" height="5" fill="#e0082c"/>
<rect x="684" y="385" width="5" height="5" fill="#e0082c"/>
<rect x="687" y="389" width="5" height="5" fill="#e0082c"/>
<rect x="689" y="385" width="5" height="5" fill="#e0082c"/>
<rect x="693" y="396" width="5" height="5" fill="#e0082c"/>
<rect x="696" y="398" width="5" height="5" fill="#e0082c"/>
<rect x="697" y="370" width="5" height="5" fill="#e0082c"/>
<rect x="704" y="382" width="5" height="5" fill="#e0082c"/>
<rect x="707" y="365" width="5" height="5" fill="#e0082c"/>
<rect x="709" y="385" width="5" height="5" fill="#e0082c"/>
<rect x="714" y="395" width="5" height="5" fill="#e0082c"/>
<rect x="716" y="394" width="5" height="5" fill="#e0082c"/>
<rect x="719" y="390" width="5" height="5" fill="#e0082c"/>
<rect x="722" y="372" width="5" height="5" fill="#e0082c"/>
<rect x="727" y="382" width="5" height="5" fill="#e0082c"/>
<rect x="731" y="383" width="5" height="5" fill="#e0082c"/>
<rect x="735" y="374" width="5" height="5" fill="#e0082c"/>
<rect x="738" y="374" width="5" height="5" fill="#e0082c"/>
<rect x="740" y="384" width="5" height="5" fill="#e0082c"/>
<rect x="743" y="336" width="5" height="5" fill="#e0082c"/>
<rect x="743" y="381" width="5" height="5" fill="#e0082c"/>
<rect x="752" y="375" width="5" height="5" fill="#e0082c"/>
<rect x="755" y="370" width="5" height="5" fill="#e0082c"/>
<rect x="760" y="362" width="5" height="5" fill="#e0082c"/>
<rect x="761" y="387" width="5" height="5" fill="#e0082c"/>
<rect x="768" y="369" width="5" height="5" fill="#e0082c"/>
<rect x="769" y="382" width="5" height="5" fill="#e0082c"/>
<rect x="774" y="379" width="5" height="5" fill="#e0082c"/>
<rect x="777" y="385" width="5" height="5" fill="#e0082c"/>
<rect x="780" y="393" width="5" height="5" fill="#e0082c"/>
<rect x="782" y="393" width="5" height="5" fill="#e0082c"/>
<rect x="783" y="376" width="5" height="5" fill="#e0082c"/>
<rect x="787" y="378" width="5" height="5" fill="#e0082c"/>
<rect x="793" y="386" width="5" height="5" fill="#e0082c"/>
<rect x="796" y="339" width="5" height="5" fill="#e0082c"/>
<rect x="798" y="383" width="5" height="5" fill="#e0082c"/>
<rect x="802" y="343" width="5" height="5" fill="#e0082c"/>
<rect x="804" y="333" width="5" height="5" fill="#e0082c"/>
<rect x="810" y="340" width="5" height="5" fill="#e0082c"/>
<rect x="813" y="318" width="5" height="5" fill="#e0082c"/>
<rect x="813" y="337" width="5" height="5" fill="#e0082c"/>
<rect x="819" y="350" width="5" height="5" fill="#e0082c"/>
<rect x="825" y="324" width="5" height="5" fill="#e0082c"/>
<rect x="828" y="380" width="5" height="5" fill="#e0082c"/>
<rect x="831" y="386" width="5" height="5" fill="#e0082c"/>
<rect x="833" y="389" width="5" height="5" fill="#e0082c"/>
<rect x="835" y="390" width="5" height="5" fill="#e0082c"/>
<rect x="836" y="360" width="5" height="5" fill="#e0082c"/>
<rect x="838" y="364" width="5" height="5" fill="#e0082c"/>
<rect x="848" y="375" width="5" height="5" fill="#e0082c"/>
<rect x="853" y="384" width="5" height="5" fill="#e0082c"/>
<rect x="854" y="389" width="5" height="5" fill="#e0082c"/>
<rect x="862" y="380" width="5" height="5" fill="#e0082c"/>
<rect x="865" y="378" width="5" height="5" fill="#e0082c"/>
<rect x="867" y="383" width="5" height="5" fill="#e0082c"/>
<rect x="871" y="389" width="5" height="5" fill="#e0082c"/>
<rect x="871" y="380" width="5" height="5" fill="#e0082c"/>
<rect x="874" y="386" width="5" height="5" fill="#e0082c"/>
<rect x="874" y="358" width="5" height="5" fill="#e0082c"/>
<rect x="884" y="371" width="5" height="5" fill="#e0082c"/>
<rect x="886" y="374" width="5" height="5" fill="#e0082c"/>
<rect x="890" y="384" width="5" height="5" fill="#e0082c"/>
<rect x="892" y="379" width="5" height="5" fill="#e0082c"/>
<rect x="894" y="381" width="5" height="5" fill="#e0082c"/>
<rect x="895" y="385" width="5" height="5" fill="#e0082c"/>
<rect x="903" y="374" width="5" height="5" fill="#e0082c"/>
<rect x="907" y="380" width="5" height="5" fill="#e0082c"/>
<rect x="910" y="382" width="5" height="5" fill="#e0082c"/>
<rect x="913" y="381" width="5" height="5" fill="#e0082c"/>
</g>
<g id="vres">
<rect x="599" y="441" width="1" height="105" fill="#242424"/>
<rect x="639" y="441" width="1" height="105" fill="#242424"/>
<rect x="680" y="441" width="1" height="105" fill="#242424"/>
<rect x="721" y="441" width="1" height="105" fill="#242424"/>
<rect x="762" y="441" width="1" height="105" fill="#242424"/>
<rect x="803" y="441" width="1" height="105" fill="#242424"/>
<rect x="843" y="441" width="1" height="105" fill="#242424"/>
<rect x="884" y="441" width="1" height="105" fill="#242424"/>
<rect x="925" y="441" width="1" height="105" fill="#242424"/>
<rect x="966" y="441" width="1" height="105" fill="#242424"/>
<rect x="1006" y="441" width="1" height="105" fill="#242424"/>
<rect x="586" y="451" width="434" height="1" fill="#242424"/>
<rect x="582" y="460" width="438" height="1" fill="#242424"/>
<rect x="586" y="469" width="434" height="1" fill="#242424"/>
<rect x="586" y="479" width="434" height="1" fill="#242424"/>
<rect x="582" y="488" width="438" height="1" fill="#242424"/>
<rect x="586" y="498" width="434" height="1" fill="#242424"/>
<rect x="586" y="507" width="434" height="1" fill="#242424"/>
<rect x="582" y="517" width="438" height="1" fill="#242424"/>
<rect x="586" y="526" width="434" height="1" fill="#242424"/>
<rect x="586" y="536" width="434" height="1" fill="#242424"/>
<rect x="586" y="441" width="1" height="101" fill="#242424"/>
<rect x="1020" y="441" width="1" height="101" fill="#242424"/>
<rect x="586" y="441" width="435" height="1" fill="#242424"/>
<rect x="586" y="541" width="435" height="1" fill="#242424"/>
<rect x="587" y="488" width="433" height="1" fill="#f4f4f4"/>
<text x="599.50" y="556.00" font-family="'DejaVu Sans Mono', 'Liberation Mono', monospace" font-size="8.53" fill="#c8c8c8" text-anchor="middle" >-0</text>
<text x="639.50" y="556.00" font-family="'DejaVu Sans Mono', 'Liberation Mono', monospace" font-size="8.53" fill="#c8c8c8" text-anchor="middle" >8</text>
<text x="680.50" y="556.00" font-family="'DejaVu Sans Mono', 'Liberation Mono', monospace" font-size="8.53" fill="#c8c8c8" text-anchor="middle" >15</text>
<text x="721.50" y="556.00" font-family="'DejaVu Sans Mono', 'Liberation Mono', monospace" font-size="8.53" fill="#c8c8c8" text-anchor="middle" >23</text>
<text x="762.50" y="556.00" font-family="'DejaVu Sans Mono', 'Liberation Mono', monospace" font-size="8.53" fill="#c8c8c8" text-anchor="middle" >30</text>
<text x="803.50" y="556.00" font-family="'DejaVu Sans Mono', 'Liberation Mono', monospace" font-size="8.53" fill="#c8c8c8" text-anchor="middle" >38</text>
<text x="843.50" y="556.00" font-family="'DejaVu Sans Mono', 'Liberation Mono', monospace" font-size="8.53" fill="#c8c8c8" text-anchor="middle" >46</text>
<text x="884.50" y="556.00" font-family="'DejaVu Sans Mono', 'Liberation Mono', monospace" font-size="8.53" fill="#c8c8c8" text-anchor="middle" >53</text>
<text x="925.50" y="556.00" font-family="'DejaVu Sans Mono', 'Liberation Mono', monospace" font-size="8.53" fill="#c8c8c8" text-anchor="middle" >61</text>
<text x="966.50" y="556.00" font-family="'DejaVu Sans Mono', 'Liberation Mono', monospace" font-size="8.53" fill="#c8c8c8" text-anchor="middle" >68</text>
<text x="1006.50" y="556.00" font-family="'DejaVu Sans Mono', 'Liberation Mono', monospace" font-size="8.53" fill="#c8c8c8" text-anchor="middle" >76</text>
<text x="580.40" y="460.50" font-family="'DejaVu Sans Mono', 'Liberation Mono', monospace" font-size="8.53" fill="#c8c8c8" text-anchor="middle" transform="rotate(-90 580.40 460.50)" >0.6</text>
<text x="580.40" y="488.50" font-family="'DejaVu Sans Mono', 'Liberation Mono', monospace" font-size="8.53" fill="#c8c8c8" text-anchor="middle" transform="rotate(-90 580.40 488.50)" >-0.0</text>
<text x="580.40" y="517.50" font-family="'DejaVu Sans Mono', 'Liberation Mono', monospace" font-size="8.53" fill="#c8c8c8" text-anchor="middle" transform="rotate(-90 580.40 517.50)" >-0.6</text>
<text x="568.50" y="490.70" font-family="'DejaVu Sans Mono', 'Liberation Mono', monospace" font-size="11.73" fill="#f0f0f0" text-anchor="middle" transform="rotate(-90 568.50 490.70)" >Vert Res [km]</text>
<text x="804.30" y="568.60" font-family="'DejaVu Sans Mono', 'Liberation Mono', monospace" font-size="11.73" fill="#f0f0f0" text-anchor="middle" >Length Along Trail [km]</text>
<rect x="702" y="488" width="1" height="26" fill="#9a4e2e"/>
<rect x="710" y="488" width="1" height="21" fill="#9a4e2e"/>
<rect x="718" y="488" width="1" height="14" fill="#9a4e2e"/>
<rect x="720" y="488" width="1" height="1" fill="#9a4e2e"/>
<rect x="727" y="488" width="1" height="12" fill="#9a4e2e"/>
<rect x="728" y="488" width="1" height="13" fill="#9a4e2e"/>
<rect x="734" y="488" width="1" height="11" fill="#9a4e2e"/>
<rect x="735" y="488" width="1" height="10" fill="#9a4e2e"/>
<rect x="742" y="488" width="1" height="1" fill="#9a4e2e"/>
<rect x="743" y="488" width="1" height="20" fill="#9a4e2e"/>
<rect x="749" y="488" width="1" height="6" fill="#9a4e2e"/>
<rect x="751" y="488" width="1" height="11" fill="#9a4e2e"/>
<rect x="758" y="488" width="1" height="15" fill="#9a4e2e"/>
<rect x="762" y="488" width="1" height="1" fill="#9a4e2e"/>
<rect x="766" y="488" width="1" height="6" fill="#9a4e2e"/>
<rect x="772" y="488" width="1" height="22" fill="#9a4e2e"/>
<rect x="775" y="488" width="1" height="6" fill="#9a4e2e"/>
<rect x="779" y="488" width="1" height="27" fill="#9a4e2e"/>
<rect x="783" y="479" width="1" height="9" fill="#9a4e2e"/>
<rect x="784" y="479" width="1" height="9" fill="#9a4e2e"/>
<rect x="791" y="484" width="1" height="4" fill="#9a4e2e"/>
<rect x="795" y="488" width="1" height="25" fill="#9a4e2e"/>
<rect x="802" y="488" width="1" height="5" fill="#9a4e2e"/>
<rect x="805" y="488" width="1" height="8" fill="#9a4e2e"/>
<rect x="813" y="488" width="1" height="6" fill="#9a4e2e"/>
<rect x="816" y="488" width="1" height="25" fill="#9a4e2e"/>
<rect x="819" y="488" width="1" height="10" fill="#9a4e2e"/>
<rect x="823" y="477" width="1" height="11" fill="#9a4e2e"/>
<rect x="825" y="488" width="1" height="39" fill="#9a4e2e"/>
<rect x="833" y="488" width="1" height="42" fill="#9a4e2e"/>
<rect x="839" y="488" width="1" height="34" fill="#9a4e2e"/>
<rect x="840" y="479" width="1" height="9" fill="#9a4e2e"/>
<rect x="849" y="488" width="1" height="22" fill="#9a4e2e"/>
<rect x="852" y="488" width="1" height="46" fill="#9a4e2e"/>
<rect x="855" y="488" width="1" height="49" fill="#9a4e2e"/>
<rect x="856" y="488" width="1" height="19" fill="#9a4e2e"/>
<rect x="862" y="488" width="1" height="39" fill="#9a4e2e"/>
<rect x="865" y="480" width="1" height="8" fill="#9a4e2e"/>
<rect x="866" y="488" width="1" height="16" fill="#9a4e2e"/>
<rect x="871" y="488" width="1" height="4" fill="#9a4e2e"/>
<rect x="874" y="488" width="1" height="50" fill="#9a4e2e"/>
<rect x="879" y="488" width="1" height="25" fill="#9a4e2e"/>
<rect x="881" y="477" width="1" height="11" fill="#9a4e2e"/>
<rect x="886" y="488" width="1" height="42" fill="#9a4e2e"/>
<rect x="888" y="488" width="1" height="18" fill="#9a4e2e"/>
<rect x="893" y="488" width="1" height="34" fill="#9a4e2e"/>
<rect x="896" y="488" width="1" height="12" fill="#9a4e2e"/>
<rect x="898" y="477" width="1" height="11" fill="#9a4e2e"/>
<rect x="900" y="488" width="1" height="30" fill="#9a4e2e"/>
<rect x="902" y="488" width="1" height="40" fill="#9a4e2e"/>
<rect x="909" y="488" width="1" height="24" fill="#9a4e2e"/>
<rect x="911" y="488" width="1" height="20" fill="#9a4e2e"/>
<rect x="913" y="488" width="1" height="8" fill="#9a4e2e"/>
<rect x="916" y="488" width="1" height="32" fill="#9a4e2e"/>
<rect x="918" y="488" width="1" height="29" fill="#9a4e2e"/>
<rect x="920" y="488" width="1" height="22" fill="#9a4e2e"/>
<rect x="925" y="488" width="1" height="20" fill="#9a4e2e"/>
<rect x="927" y="488" width="1" height="23" fill="#9a4e2e"/>
<rect x="931" y="488" width="1" height="3" fill="#9a4e2e"/>
<rect x="936" y="488" width="1" height="18" fill="#9a4e2e"/>
<rect x="940" y="488" width="1" height="23" fill="#9a4e2e"/>
<rect x="943" y="488" width="1" height="11" fill="#9a4e2e"/>
<rect x="946" y="488" width="1" height="1" fill="#9a4e2e"/>
<rect x="949" y="471" width="1" height="17" fill="#9a4e2e"/>
<rect x="953" y="461" width="1" height="27" fill="#9a4e2e"/>
<rect x="954" y="488" width="1" height="9" fill="#9a4e2e"/>
<rect x="959" y="488" width="1" height="14" fill="#9a4e2e"/>
<rect x="966" y="488" width="1" height="15" fill="#9a4e2e"/>
<rect x="970" y="463" width="1" height="25" fill="#9a4e2e"/>
<rect x="972" y="476" width="1" height="12" fill="#9a4e2e"/>
<rect x="977" y="488" width="1" height="13" fill="#9a4e2e"/>
<rect x="979" y="486" width="1" height="2" fill="#9a4e2e"/>
<rect x="982" y="472" width="1" height="16" fill="#9a4e2e"/>
<rect x="985" y="488" width="1" height="14" fill="#9a4e2e"/>
<rect x="988" y="445" width="1" height="43" fill="#9a4e2e"/>
<rect x="989" y="479" width="1" height="9" fill="#9a4e2e"/>
<rect x="990" y="480" width="1" height="8" fill="#9a4e2e"/>
<rect x="994" y="457" width="1" height="31" fill="#9a4e2e"/>
<rect x="995" y="445" width="1" height="43" fill="#9a4e2e"/>
<rect x="997" y="478" width="1" height="10" fill="#9a4e2e"/>
<rect x="999" y="470" width="1" height="18" fill="#9a4e2e"/>
<rect x="1002" y="461" width="1" height="27" fill="#9a4e2e"/>
<rect x="1003" y="448" width="1" height="40" fill="#9a4e2e"/>
<rect x="1006" y="474" width="1" height="14" fill="#9a4e2e"/>
<rect x="700" y="512" width="5" height="5" fill="#ff7f50"/>
<rect x="708" y="507" width="5" height="5" fill="#ff7f50"/>
<rect x="716" y="500" width="5" height="5" fill="#ff7f50"/>
<rect x="718" y="486" width="5" height="5" fill="#ff7f50"/>
<rect x="725" y="498" width="5" height="5" fill="#ff7f50"/>
<rect x="726" y="499" width="5" height="5" fill="#ff7f50"/>
<rect x="732" y="497" width="5" height="5" fill="#ff7f50"/>
<rect x="733" y="496" width="5" height="5" fill="#ff7f50"/>
<rect x="740" y="487" width="5" height="5" fill="#ff7f50"/>
<rect x="741" y="506" width="5" height="5" fill="#ff7f50"/>
<rect x="747" y="492" width="5" height="5" fill="#ff7f50"/>
<rect x="749" y="497" width="5" height="5" fill="#ff7f50"/>
<rect x="756" y="501" width="5" height="5" fill="#ff7f50"/>
<rect x="760" y="487" width="5" height="5" fill="#ff7f50"/>
<rect x="764" y="492" width="5" height="5" fill="#ff7f50"/>
<rect x="770" y="508" width="5" height="5" fill="#ff7f50"/>
<rect x="773" y="492" width="5" height="5" fill="#ff7f50"/>
<rect x="777" y="513" width="5" height="5" fill="#ff7f50"/>
<rect x="781" y="477" width="5" height="5" fill="#ff7f50"/>
<rect x="782" y="477" width="5" height="5" fill="#ff7f50"/>
<rect x="789" y="482" width="5" height="5" fill="#ff7f50"/>
<rect x="793" y="511" width="5" height="5" fill="#ff7f50"/>
<rect x="800" y="491" width="5" height="5" fill="#ff7f50"/>
<rect x="803" y="494" width="5" height="5" fill="#ff7f50"/>
<rect x="811" y="492" width="5" height="5" fill="#ff7f50"/>
<rect x="814" y="511" width="5" height="5" fill="#ff7f50"/>
<rect x="817" y="496" width="5" height="5" fill="#ff7f50"/>
<rect x="821" y="475" width="5" height="5" fill="#ff7f50"/>
<rect x="823" y="525" width="5" height="5" fill="#ff7f50"/>
<rect x="831" y="528" width="5" height="5" fill="#ff7f50"/>
<rect x="837" y="520" width="5" height="5" fill="#ff7f50"/>
<rect x="838" y="477" width="5" height="5" fill="#ff7f50"/>
<rect x="847" y="508" width="5" height="5" fill="#ff7f50"/>
<rect x="850" y="532" width="5" height="5" fill="#ff7f50"/>
<rect x="853" y="535" width="5" height="5" fill="#ff7f50"/>
<rect x="854" y="505" width="5" height="5" fill="#ff7f50"/>
<rect x="860" y="525" width="5" height="5" fill="#ff7f50"/>
<rect x="863" y="478" width="5" height="5" fill="#ff7f50"/>
<rect x="864" y="502" width="5" height="5" fill="#ff7f50"/>
<rect x="869" y="490" width="5" height="5" fill="#ff7f50"/>
<rect x="872" y="536" width="5" height="5" fill="#ff7f50"/>
<rect x="877" y="511" width="5" height="5" fill="#ff7f50"/>
<rect x="879" y="475" width="5" height="5" fill="#ff7f50"/>
<rect x="884" y="528" width="5" height="5" fill="#ff7f50"/>
<rect x="886" y="504" width="5" height="5" fill="#ff7f50"/>
<rect x="891" y="520" width="5" height="5" fill="#ff7f50"/>
<rect x="894" y="498" width="5" height="5" fill="#ff7f50"/>
<rect x="896" y="475" width="5" height="5" fill="#ff7f50"/>
<rect x="898" y="516" width="5" height="5" fill="#ff7f50"/>
<rect x="900" y="526" width="5" height="5" fill="#ff7f50"/>
<rect x="907" y="510" width="5" height="5" fill="#ff7f50"/>
<rect x="909" y="506" width="5" height="5" fill="#ff7f50"/>
<rect x="911" y="494" width="5" height="5" fill="#ff7f50"/>
<rect x="914" y="518" width="5" height="5" fill="#ff7f50"/>
<rect x="916" y="515" width="5" height="5" fill="#ff7f50"/>
<rect x="918" y="508" width="5" height="5" fill="#ff7f50"/>
<rect x="923" y="506" width="5" height="5" fill="#ff7f50"/>
<rect x="925" y="509" width="5" height="5" fill="#ff7f50"/>
<rect x="929" y="489" width="5" height="5" fill="#ff7f50"/>
<rect x="934" y="504" width="5" height="5" fill="#ff7f50"/>
<rect x="938" y="509" width="5" height="5" fill="#ff7f50"/>
<rect x="941" y="497" width="5" height="5" fill="#ff7f50"/>
<rect x="944" y="486" width="5" height="5" fill="#ff7f50"/>
<rect x="947" y="469" width="5" height="5" fill="#ff7f50"/>
<rect x="951" y="459" width="5" height="5" fill="#ff7f50"/>
<rect x="952" y="495" width="5" height="5" fill="#ff7f50"/>
<rect x="957" y="500" width="5" height="5" fill="#ff7f50"/>
<rect x="964" y="501" width="5" height="5" fill="#ff7f50"/>
<rect x="968" y="461" width="5" height="5" fill="#ff7f50"/>
<rect x="970" y="474" width="5" height="5" fill="#ff7f50"/>
<rect x="975" y="499" width="5" height="5" fill="#ff7f50"/>
<rect x="977" y="484" width="5" height="5" fill="#ff7f50"/>
<rect x="980" y="470" width="5" height="5" fill="#ff7f50"/>
<rect x="983" y="500" width="5" height="5" fill="#ff7f50"/>
<rect x="986" y="443" width="5" height="5" fill="#ff7f50"/>
<rect x="987" y="477" width="5" height="5" fill="#ff7f50"/>
<rect x="988" y="478" width="5" height="5" fill="#ff7f50"/>
<rect x="992" y="455" width="5" height="5" fill="#ff7f50"/>
<rect x="993" y="443" width="5" height="5" fill="#ff7f50"/>
<rect x="995" y="476" width="5" height="5" fill="#ff7f50"/>
<rect x="997" y="468" width="5" height="5" fill="#ff7f50"/>
<rect x="1000" y="459" width="5" height="5" fill="#ff7f50"/>
<rect x="1001" y="446" width="5" height="5" fill="#ff7f50"/>
<rect x="1004" y="472" width="5" height="5" fill="#ff7f50"/>
<rect x="651" y="469" width="1" height="19" fill="#004f00"/>
<rect x="656" y="465" width="1" height="23" fill="#004f00"/>
<rect x="660" y="477" width="1" height="11" fill="#004f00"/>
<rect x="663" y="474" width="1" height="14" fill="#004f00"/>
<rect x="665" y="473" width="1" height="15" fill="#004f00"/>
<rect x="670" y="467" width="1" height="21" fill="#004f00"/>
<rect x="672" y="466" width="1" height="22" fill="#004f00"/>
<rect x="676" y="479" width="1" height="9" fill="#004f00"/>
<rect x="679" y="477" width="1" height="11" fill="#004f00"/>
<rect x="682" y="474" width="1" height="14" fill="#004f00"/>
<rect x="686" y="469" width="1" height="19" fill="#004f00"/>
<rect x="689" y="467" width="1" height="21" fill="#004f00"/>
<rect x="693" y="484" width="1" height="4" fill="#004f00"/>
<rect x="697" y="479" width="1" height="9" fill="#004f00"/>
<rect x="698" y="477" width="1" height="11" fill="#004f00"/>
<rect x="700" y="479" width="1" height="9" fill="#004f00"/>
<rect x="703" y="474" width="1" height="14" fill="#004f00"/>
<rect x="707" y="471" width="1" height="17" fill="#004f00"/>
<rect x="712" y="485" width="1" height="3" fill="#004f00"/>
<rect x="716" y="484" width="1" height="4" fill="#004f00"/>
<rect x="719" y="482" width="1" height="6" fill="#004f00"/>
<rect x="724" y="476" width="1" height="12" fill="#004f00"/>
<rect x="726" y="475" width="1" height="13" fill="#004f00"/>
<rect x="729" y="484" width="1" height="4" fill="#004f00"/>
<rect x="738" y="483" width="1" height="5" fill="#004f00"/>
<rect x="744" y="479" width="1" height="9" fill="#004f00"/>
<rect x="746" y="479" width="1" height="9" fill="#004f00"/>
<rect x="749" y="469" width="1" height="19" fill="#004f00"/>
<rect x="751" y="488" width="1" height="1" fill="#004f00"/>
<rect x="758" y="478" width="1" height="10" fill="#004f00"/>
<rect x="766" y="473" width="1" height="15" fill="#004f00"/>
<rect x="767" y="485" width="1" height="3" fill="#004f00"/>
<rect x="771" y="485" width="1" height="3" fill="#004f00"/>
<rect x="776" y="472" width="1" height="16" fill="#004f00"/>
<rect x="778" y="482" width="1" height="6" fill="#004f00"/>
<rect x="782" y="483" width="1" height="5" fill="#004f00"/>
<rect x="789" y="471" width="1" height="17" fill="#004f00"/>
<rect x="794" y="469" width="1" height="19" fill="#004f00"/>
<rect x="789" y="488" width="1" height="1" fill="#004f00"/>
<rect x="811" y="477" width="1" height="11" fill="#004f00"/>
<rect x="808" y="488" width="1" height="1" fill="#004f00"/>
<rect x="824" y="488" width="1" height="11" fill="#004f00"/>
<rect x="828" y="488" width="1" height="10" fill="#004f00"/>
<rect x="831" y="488" width="1" height="10" fill="#004f00"/>
<rect x="840" y="488" width="1" height="7" fill="#004f00"/>
<rect x="843" y="488" width="1" height="6" fill="#004f00"/>
<rect x="849" y="488" width="1" height="10" fill="#004f00"/>
<rect x="850" y="488" width="1" height="6" fill="#004f00"/>
<rect x="852" y="488" width="1" height="6" fill="#004f00"/>
<rect x="856" y="488" width="1" height="7" fill="#004f00"/>
<rect x="859" y="488" width="1" height="8" fill="#004f00"/>
<rect x="868" y="480" width="1" height="8" fill="#004f00"/>
<rect x="868" y="488" width="1" height="10" fill="#004f00"/>
<rect x="878" y="488" width="1" height="1" fill="#004f00"/>
<rect x="881" y="480" width="1" height="8" fill="#004f00"/>
<rect x="890" y="482" width="1" height="6" fill="#004f00"/>
<rect x="890" y="488" width="1" height="5" fill="#004f00"/>
<rect x="892" y="465" width="1" height="23" fill="#004f00"/>
<rect x="894" y="464" width="1" height="24" fill="#004f00"/>
<rect x="898" y="477" width="1" height="11" fill="#004f00"/>
<rect x="901" y="488" width="1" height="8" fill="#004f00"/>
<rect x="904" y="487" width="1" height="1" fill="#004f00"/>
<rect x="911" y="470" width="1" height="18" fill="#004f00"/>
<rect x="914" y="482" width="1" height="6" fill="#004f00"/>
<rect x="917" y="488" width="1" height="2" fill="#004f00"/>
<rect x="920" y="488" width="1" height="4" fill="#004f00"/>
<rect x="925" y="484" width="1" height="4" fill="#004f00"/>
<rect x="927" y="487" width="1" height="1" fill="#004f00"/>
<rect x="930" y="460" width="1" height="28" fill="#004f00"/>
<rect x="930" y="466" width="1" height="22" fill="#004f00"/>
<rect x="935" y="475" width="1" height="13" fill="#004f00"/>
<rect x="938" y="476" width="1" height="12" fill="#004f00"/>
<rect x="942" y="470" width="1" height="18" fill="#004f00"/>
<rect x="942" y="481" width="1" height="7" fill="#004f00"/>
<rect x="950" y="475" width="1" height="13" fill="#004f00"/>
<rect x="952" y="484" width="1" height="4" fill="#004f00"/>
<rect x="956" y="486" width="1" height="2" fill="#004f00"/>
<rect x="959" y="479" width="1" height="9" fill="#004f00"/>
<rect x="960" y="475" width="1" height="13" fill="#004f00"/>
<rect x="963" y="477" width="1" height="11" fill="#004f00"/>
<rect x="965" y="471" width="1" height="17" fill="#004f00"/>
<rect x="970" y="476" width="1" height="12" fill="#004f00"/>
<rect x="649" y="467" width="5" height="5" fill="#008000"/>
<rect x="654" y="463" width="5" height="5" fill="#008000"/>
<rect x="658" y="475" width="5" height="5" fill="#008000"/>
<rect x="661" y="472" width="5" height="5" fill="#008000"/>
<rect x="663" y="471" width="5" height="5" fill="#008000"/>
<rect x="668" y="465" width="5" height="5" fill="#008000"/>
<rect x="670" y="464" width="5" height="5" fill="#008000"/>
<rect x="674" y="477" width="5" height="5" fill="#008000"/>
<rect x="677" y="475" width="5" height="5" fill="#008000"/>
<rect x="680" y="472" width="5" height="5" fill="#008000"/>
<rect x="684" y="467" width="5" height="5" fill="#008000"/>
<rect x="687" y="465" width="5" height="5" fill="#008000"/>
<rect x="691" y="482" width="5" height="5" fill="#008000"/>
<rect x="695" y="477" width="5" height="5" fill="#008000"/>
<rect x="696" y="475" width="5" height="5" fill="#008000"/>
<rect x="698" y="477" width="5" height="5" fill="#008000"/>
<rect x="701" y="472" width="5" height="5" fill="#008000"/>
<rect x="705" y="469" width="5" height="5" fill="#008000"/>
<rect x="710" y="483" width="5" height="5" fill="#008000"/>
<rect x="714" y="482" width="5" height="5" fill="#008000"/>
<rect x="717" y="480" width="5" height="5" fill="#008000"/>
<rect x="722" y="474" width="5" height="5" fill="#008000"/>
<rect x="724" y="473" width="5" height="5" fill="#008000"/>
<rect x="727" y="482" width="5" height="5" fill="#008000"/>
<rect x="736" y="481" width="5" height="5" fill="#008000"/>
<rect x="742" y="477" width="5" height="5" fill="#008000"/>
<rect x="744" y="477" width="5" height="5" fill="#008000"/>
<rect x="747" y="467" width="5" height="5" fill="#008000"/>
<rect x="749" y="487" width="5" height="5" fill="#008000"/>
<rect x="756" y="476" width="5" height="5" fill="#008000"/>
<rect x="764" y="471" width="5" height="5" fill="#008000"/>
<rect x="765" y="483" width="5" height="5" fill="#008000"/>
<rect x="769" y="483" width="5" height="5" fill="#008000"/>
<rect x="774" y="470" width="5" height="5" fill="#008000"/>
<rect x="776" y="480" width="5" height="5" fill="#008000"/>
<rect x="780" y="481" width="5" height="5" fill="#008000"/>
<rect x="787" y="469" width="5" height="5" fill="#008000"/>
<rect x="792" y="467" width="5" height="5" fill="#008000"/>
<rect x="787" y="487" width="5" height="5" fill="#008000"/>
<rect x="809" y="475" width="5" height="5" fill="#008000"/>
<rect x="806" y="486" width="5" height="5" fill="#008000"/>
<rect x="822" y="497" width="5" height="5" fill="#008000"/>
<rect x="826" y="496" width="5" height="5" fill="#008000"/>
<rect x="829" y="496" width="5" height="5" fill="#008000"/>
<rect x="838" y="493" width="5" height="5" fill="#008000"/>
<rect x="841" y="492" width="5" height="5" fill="#008000"/>
<rect x="847" y="496" width="5" height="5" fill="#008000"/>
<rect x="848" y="492" width="5" height="5" fill="#008000"/>
<rect x="850" y="492" width="5" height="5" fill="#008000"/>
<rect x="854" y="493" width="5" height="5" fill="#008000"/>
<rect x="857" y="494" width="5" height="5" fill="#008000"/>
<rect x="866" y="478" width="5" height="5" fill="#008000"/>
<rect x="866" y="496" width="5" height="5" fill="#008000"/>
<rect x="876" y="487" width="5" height="5" fill="#008000"/>
<rect x="879" y="478" width="5" height="5" fill="#008000"/>
<rect x="888" y="480" width="5" height="5" fill="#008000"/>
<rect x="888" y="491" width="5" height="5" fill="#008000"/>
<rect x="890" y="463" width="5" height="5" fill="#008000"/>
<rect x="892" y="462" width="5" height="5" fill="#008000"/>
<rect x="896" y="475" width="5" height="5" fill="#008000"/>
<rect x="899" y="494" width="5" height="5" fill="#008000"/>
<rect x="902" y="485" width="5" height="5" fill="#008000"/>
<rect x="909" y="468" width="5" height="5" fill="#008000"/>
<rect x="912" y="480" width="5" height="5" fill="#008000"/>
<rect x="915" y="488" width="5" height="5" fill="#008000"/>
<rect x="918" y="490" width="5" height="5" fill="#008000"/>
<rect x="923" y="482" width="5" height="5" fill="#008000"/>
<rect x="925" y="485" width="5" height="5" fill="#008000"/>
<rect x="928" y="458" width="5" height="5" fill="#008000"/>
<rect x="928" y="464" width="5" height="5" fill="#008000"/>
<rect x="933" y="473" width="5" height="5" fill="#008000"/>
<rect x="936" y="474" width="5" height="5" fill="#008000"/>
<rect x="940" y="468" width="5" height="5" fill="#008000"/>
<rect x="940" y="479" width="5" height="5" fill="#008000"/>
<rect x="948" y="473" width="5" height="5" fill="#008000"/>
<rect x="950" y="482" width="5" height="5" fill="#008000"/>
<rect x="954" y="484" width="5" height="5" fill="#008000"/>
<rect x="957" y="477" width="5" height="5" fill="#008000"/>
<rect x="958" y="473" width="5" height="5" fill="#008000"/>
<rect x="961" y="475" width="5" height="5" fill="#008000"/>
<rect x="963" y="469" width="5" height="5" fill="#008000"/>
<rect x="968" y="474" width="5" height="5" fill="#008000"/>
<rect x="599" y="488" width="1" height="1" fill="#780a1e"/>
<rect x="602" y="488" width="1" height="1" fill="#780a1e"/>
<rect x="605" y="488" width="1" height="1" fill="#780a1e"/>
<rect x="608" y="487" width="1" height="1" fill="#780a1e"/>
<rect x="610" y="486" width="1" height="2" fill="#780a1e"/>
<rect x="613" y="486" width="1" height="2" fill="#780a1e"/>
<rect x="615" y="486" width="1" height="2" fill="#780a1e"/>
<rect x="618" y="486" width="1" height="2" fill="#780a1e"/>
<rect x="621" y="486" width="1" height="2" fill="#780a1e"/>
<rect x="624" y="486" width="1" height="2" fill="#780a1e"/>
<rect x="626" y="486" width="1" height="2" fill="#780a1e"/>
<rect x="629" y="486" width="1" height="2" fill="#780a1e"/>
<rect x="632" y="487" width="1" height="1" fill="#780a1e"/>
<rect x="635" y="487" width="1" height="1" fill="#780a1e"/>
<rect x="638" y="486" width="1" height="2" fill="#780a1e"/>
<rect x="640" y="486" width="1" height="2" fill="#780a1e"/>
<rect x="643" y="487" width="1" height="1" fill="#780a1e"/>
<rect x="645" y="486" width="1" height="2" fill="#780a1e"/>
<rect x="649" y="486" width="1" height="2" fill="#780a1e"/>
<rect x="651" y="486" width="1" height="2" fill="#780a1e"/>
<rect x="654" y="487" width="1" height="1" fill="#780a1e"/>
<rect x="660" y="487" width="1" height="1" fill="#780a1e"/>
<rect x="663" y="486" width="1" height="2" fill="#780a1e"/>
<rect x="666" y="487" width="1" height="1" fill="#780a1e"/>
<rect x="669" y="486" width="1" height="2" fill="#780a1e"/>
<rect x="671" y="487" width="1" height="1" fill="#780a1e"/>
<rect x="675" y="488" width="1" height="1" fill="#780a1e"/>
<rect x="678" y="488" width="1" height="1" fill="#780a1e"/>
<rect x="681" y="488" width="1" height="1" fill="#780a1e"/>
<rect x="684" y="488" width="1" height="1" fill="#780a1e"/>
<rect x="686" y="487" width="1" height="1" fill="#780a1e"/>
<rect x="689" y="486" width="1" height="2" fill="#780a1e"/>
<rect x="692" y="487" width="1" height="1" fill="#780a1e"/>
<rect x="695" y="488" width="1" height="1" fill="#780a1e"/>
<rect x="698" y="488" width="1" height="2" fill="#780a1e"/>
<rect x="706" y="488" width="1" height="1" fill="#780a1e"/>
<rect x="709" y="488" width="1" height="1" fill="#780a1e"/>
<rect x="712" y="488" width="1" height="1" fill="#780a1e"/>
<rect x="715" y="488" width="1" height="1" fill="#780a1e"/>
<rect x="718" y="488" width="1" height="1" fill="#780a1e"/>
<rect x="721" y="488" width="1" height="2" fill="#780a1e"/>
<rect x="724" y="488" width="1" height="1" fill="#780a1e"/>
<rect x="727" y="488" width="1" height="1" fill="#780a1e"/>
<rect x="730" y="488" width="1" height="2" fill="#780a1e"/>
<rect x="733" y="488" width="1" height="1" fill="#780a1e"/>
<rect x="736" y="488" width="1" height="2" fill="#780a1e"/>
<rect x="739" y="488" width="1" height="1" fill="#780a1e"/>
<rect x="741" y="488" width="1" height="2" fill="#780a1e"/>
<rect x="744" y="488" width="1" height="1" fill="#780a1e"/>
<rect x="753" y="488" width="1" height="1" fill="#780a1e"/>
<rect x="756" y="488" width="1" height="1" fill="#780a1e"/>
<rect x="759" y="488" width="1" height="1" fill="#780a1e"/>
<rect x="762" y="488" width="1" height="1" fill="#780a1e"/>
<rect x="765" y="488" width="1" height="2" fill="#780a1e"/>
<rect x="771" y="488" width="1" height="1" fill="#780a1e"/>
<rect x="773" y="488" width="1" height="1" fill="#780a1e"/>
<rect x="776" y="487" width="1" height="1" fill="#780a1e"/>
<rect x="779" y="487" width="1" height="1" fill="#780a1e"/>
<rect x="782" y="487" width="1" height="1" fill="#780a1e"/>
<rect x="786" y="487" width="1" height="1" fill="#780a1e"/>
<rect x="789" y="487" width="1" height="1" fill="#780a1e"/>
<rect x="792" y="487" width="1" height="1" fill="#780a1e"/>
<rect x="794" y="487" width="1" height="1" fill="#780a1e"/>
<rect x="797" y="486" width="1" height="2" fill="#780a1e"/>
<rect x="800" y="486" width="1" height="2" fill="#780a1e"/>
<rect x="803" y="487" width="1" height="1" fill="#780a1e"/>
<rect x="805" y="486" width="1" height="2" fill="#780a1e"/>
<rect x="808" y="487" width="1" height="1" fill="#780a1e"/>
<rect x="811" y="486" width="1" height="2" fill="#780a1e"/>
<rect x="814" y="486" width="1" height="2" fill="#780a1e"/>
<rect x="817" y="487" width="1" height="1" fill="#780a1e"/>
<rect x="820" y="487" width="1" height="1" fill="#780a1e"/>
<rect x="826" y="488" width="1" height="1" fill="#780a1e"/>
<rect x="829" y="488" width="1" height="1" fill="#780a1e"/>
<rect x="832" y="488" width="1" height="1" fill="#780a1e"/>
<rect x="834" y="488" width="1" height="1" fill="#780a1e"/>
<rect x="838" y="488" width="1" height="1" fill="#780a1e"/>
<rect x="841" y="488" width="1" height="2" fill="#780a1e"/>
<rect x="844" y="488" width="1" height="2" fill="#780a1e"/>
<rect x="849" y="488" width="1" height="1" fill="#780a1e"/>
<rect x="852" y="488" width="1" height="1" fill="#780a1e"/>
<rect x="855" y="487" width="1" height="1" fill="#780a1e"/>
<rect x="858" y="488" width="1" height="1" fill="#780a1e"/>
<rect x="861" y="487" width="1" height="1" fill="#780a1e"/>
<rect x="864" y="487" width="1" height="1" fill="#780a1e"/>
<rect x="867" y="488" width="1" height="1" fill="#780a1e"/>
<rect x="870" y="488" width="1" height="1" fill="#780a1e"/>
<rect x="873" y="487" width="1" height="1" fill="#780a1e"/>
<rect x="876" y="488" width="1" height="1" fill="#780a1e"/>
<rect x="879" y="488" width="1" height="1" fill="#780a1e"/>
<rect x="885" y="487" width="1" height="1" fill="#780a1e"/>
<rect x="887" y="488" width="1" height="1" fill="#780a1e"/>
<rect x="890" y="488" width="1" height="1" fill="#780a1e"/>
<rect x="892" y="487" width="1" height="1" fill="#780a1e"/>
<rect x="895" y="487" width="1" height="1" fill="#780a1e"/>
<rect x="898" y="486" width="1" height="2" fill="#780a1e"/>
<rect x="905" y="486" width="1" height="2" fill="#780a1e"/>
<rect x="907" y="486" width="1" height="2" fill="#780a1e"/>
<rect x="910" y="486" width="1" height="2" fill="#780a1e"/>
<rect x="913" y="486" width="1" height="2" fill="#780a1e"/>
<rect x="916" y="487" width="1" height="1" fill="#780a1e"/>
<rect x="597" y="487" width="5" height="5" fill="#e0082c"/>
<rect x="600" y="487" width="5" height="5" fill="#e0082c"/>
<rect x="603" y="486" width="5" height="5" fill="#e0082c"/>
<rect x="606" y="485" width="5" height="5" fill="#e0082c"/>
<rect x="608" y="484" width="5" height="5" fill="#e0082c"/>
<rect x="611" y="484" width="5" height="5" fill="#e0082c"/>
<rect x="613" y="484" width="5" height="5" fill="#e0082c"/>
<rect x="616" y="484" width="5" height="5" fill="#e0082c"/>
<rect x="619" y="484" width="5" height="5" fill="#e0082c"/>
<rect x="622" y="484" width="5" height="5" fill="#e0082c"/>
<rect x="624" y="484" width="5" height="5" fill="#e0082c"/>
<rect x="627" y="484" width="5" height="5" fill="#e0082c"/>
<rect x="630" y="485" width="5" height="5" fill="#e0082c"/>
<rect x="633" y="485" width="5" height="5" fill="#e0082c"/>
<rect x="636" y="484" width="5" height="5" fill="#e0082c"/>
<rect x="638" y="484" width="5" height="5" fill="#e0082c"/>
<rect x="641" y="485" width="5" height="5" fill="#e0082c"/>
<rect x="643" y="484" width="5" height="5" fill="#e0082c"/>
<rect x="647" y="484" width="5" height="5" fill="#e0082c"/>
<rect x="649" y="484" width="5" height="5" fill="#e0082c"/>
<rect x="652" y="485" width="5" height="5" fill="#e0082c"/>
<rect x="658" y="485" width="5" height="5" fill="#e0082c"/>
<rect x="661" y="484" width="5" height="5" fill="#e0082c"/>
<rect x="664" y="485" width="5" height="5" fill="#e0082c"/>
<rect x="667" y="484" width="5" height="5" fill="#e0082c"/>
<rect x="669" y="485" width="5" height="5" fill="#e0082c"/>
<rect x="673" y="486" width="5" height="5" fill="#e0082c"/>
<rect x="676" y="487" width="5" height="5" fill="#e0082c"/>
<rect x="679" y="486" width="5" height="5" fill="#e0082c"/>
<rect x="682" y="486" width="5" height="5" fill="#e0082c"/>
<rect x="684" y="485" width="5" height="5" fill="#e0082c"/>
<rect x="687" y="484" width="5" height="5" fill="#e0082c"/>
<rect x="690" y="485" width="5" height="5" fill="#e0082c"/>
<rect x="693" y="487" width="5" height="5" fill="#e0082c"/>
<rect x="696" y="488" width="5" height="5" fill="#e0082c"/>
<rect x="704" y="486" width="5" height="5" fill="#e0082c"/>
<rect x="707" y="487" width="5" height="5" fill="#e0082c"/>
<rect x="710" y="487" width="5" height="5" fill="#e0082c"/>
<rect x="713" y="486" width="5" height="5" fill="#e0082c"/>
<rect x="716" y="487" width="5" height="5" fill="#e0082c"/>
<rect x="719" y="488" width="5" height="5" fill="#e0082c"/>
<rect x="722" y="487" width="5" height="5" fill="#e0082c"/>
<rect x="725" y="486" width="5" height="5" fill="#e0082c"/>
<rect x="728" y="488" width="5" height="5" fill="#e0082c"/>
<rect x="731" y="487" width="5" height="5" fill="#e0082c"/>
<rect x="734" y="488" width="5" height="5" fill="#e0082c"/>
<rect x="737" y="487" width="5" height="5" fill="#e0082c"/>
<rect x="739" y="488" width="5" height="5" fill="#e0082c"/>
<rect x="742" y="487" width="5" height="5" fill="#e0082c"/>
<rect x="751" y="486" width="5" height="5" fill="#e0082c"/>
<rect x="754" y="487" width="5" height="5" fill="#e0082c"/>
<rect x="757" y="487" width="5" height="5" fill="#e0082c"/>
<rect x="760" y="487" width="5" height="5" fill="#e0082c"/>
<rect x="763" y="488" width="5" height="5" fill="#e0082c"/>
<rect x="769" y="486" width="5" height="5" fill="#e0082c"/>
<rect x="771" y="486" width="5" height="5" fill="#e0082c"/>
<rect x="774" y="485" width="5" height="5" fill="#e0082c"/>
<rect x="777" y="485" width="5" height="5" fill="#e0082c"/>
<rect x="780" y="485" width="5" height="5" fill="#e0082c"/>
<rect x="784" y="485" width="5" height="5" fill="#e0082c"/>
<rect x="787" y="485" width="5" height="5" fill="#e0082c"/>
<rect x="790" y="485" width="5" height="5" fill="#e0082c"/>
<rect x="792" y="485" width="5" height="5" fill="#e0082c"/>
<rect x="795" y="484" width="5" height="5" fill="#e0082c"/>
<rect x="798" y="484" width="5" height="5" fill="#e0082c"/>
<rect x="801" y="485" width="5" height="5" fill="#e0082c"/>
<rect x="803" y="484" width="5" height="5" fill="#e0082c"/>
<rect x="806" y="485" width="5" height="5" fill="#e0082c"/>
<rect x="809" y="484" width="5" height="5" fill="#e0082c"/>
<rect x="812" y="484" width="5" height="5" fill="#e0082c"/>
<rect x="815" y="485" width="5" height="5" fill="#e0082c"/>
<rect x="818" y="485" width="5" height="5" fill="#e0082c"/>
<rect x="824" y="486" width="5" height="5" fill="#e0082c"/>
<rect x="827" y="486" width="5" height="5" fill="#e0082c"/>
<rect x="830" y="486" width="5" height="5" fill="#e0082c"/>
<rect x="832" y="486" width="5" height="5" fill="#e0082c"/>
<rect x="836" y="487" width="5" height="5" fill="#e0082c"/>
<rect x="839" y="488" width="5" height="5" fill="#e0082c"/>
<rect x="842" y="488" width="5" height="5" fill="#e0082c"/>
<rect x="847" y="487" width="5" height="5" fill="#e0082c"/>
<rect x="850" y="486" width="5" height="5" fill="#e0082c"/>
<rect x="853" y="485" width="5" height="5" fill="#e0082c"/>
<rect x="856" y="486" width="5" height="5" fill="#e0082c"/>
<rect x="859" y="485" width="5" height="5" fill="#e0082c"/>
<rect x="862" y="485" width="5" height="5" fill="#e0082c"/>
<rect x="865" y="486" width="5" height="5" fill="#e0082c"/>
<rect x="868" y="486" width="5" height="5" fill="#e0082c"/>
<rect x="871" y="485" width="5" height="5" fill="#e0082c"/>
<rect x="874" y="487" width="5" height="5" fill="#e0082c"/>
<rect x="877" y="486" width="5" height="5" fill="#e0082c"/>
<rect x="883" y="485" width="5" height="5" fill="#e0082c"/>
<rect x="885" y="486" width="5" height="5" fill="#e0082c"/>
<rect x="888" y="486" width="5" height="5" fill="#e0082c"/>
<rect x="890" y="485" width="5" height="5" fill="#e0082c"/>
<rect x="893" y="485" width="5" height="5" fill="#e0082c"/>
<rect x="896" y="484" width="5" height="5" fill="#e0082c"/>
<rect x="903" y="484" width="5" height="5" fill="#e0082c"/>
<rect x="905" y="484" width="5" height="5" fill="#e0082c"/>
<rect x="908" y="484" width="5" height="5" fill="#e0082c"/>
<rect x="911" y="484" width="5" height="5" fill="#e0082c"/>
<rect x="914" y="485" width="5" height="5" fill="#e0082c"/>
</g>
</svg>
</body></html>
